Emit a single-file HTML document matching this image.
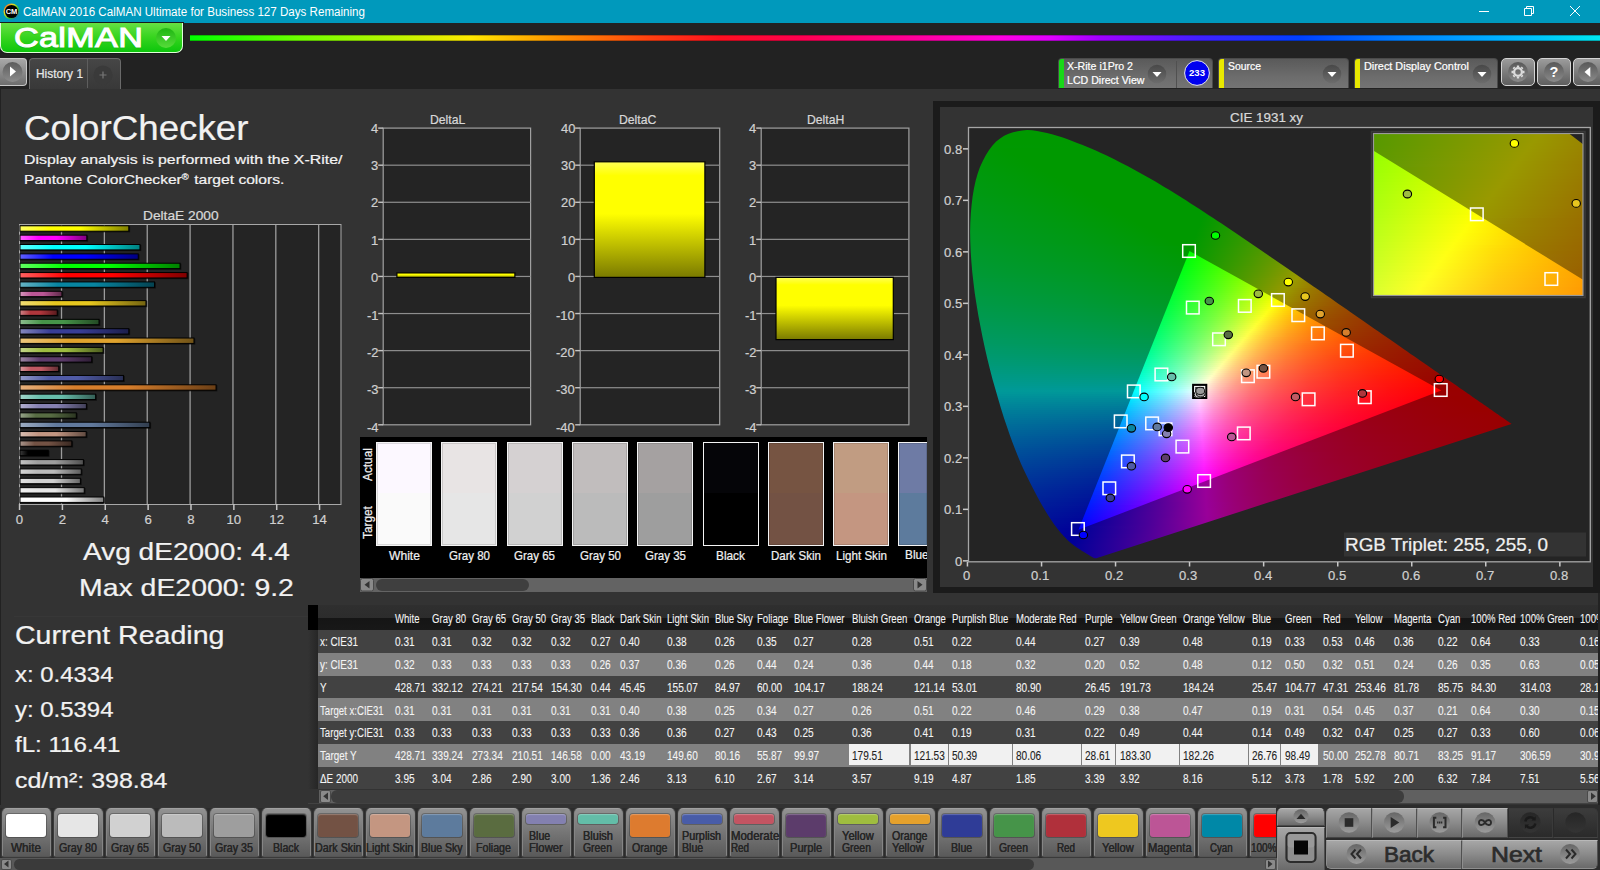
<!DOCTYPE html>
<html lang="en"><head><meta charset="utf-8"><title>CalMAN 2016 ColorChecker</title>
<style>
html,body{margin:0;padding:0;overflow:hidden;}
body{width:1600px;height:870px;overflow:hidden;background:#222;position:relative;font-family:"Liberation Sans",sans-serif;}
.t{-webkit-text-stroke:.22px currentColor;position:absolute;white-space:nowrap;line-height:1;transform-origin:0 0;}
.b{position:absolute;box-sizing:border-box;}
svg{position:absolute;overflow:hidden;}

</style></head>
<body>
<div class="b" style="left:0px;top:0px;width:1600px;height:23px;background:#0099bc;"></div>
<svg style="left:3px;top:3px" width="17" height="17" viewBox="0 0 17 17"><defs><linearGradient id="ic" x1="0" y1="0" x2="1" y2="1"><stop offset="0" stop-color="#ff3030"/><stop offset=".33" stop-color="#e0e020"/><stop offset=".66" stop-color="#20c040"/><stop offset="1" stop-color="#3040ff"/></linearGradient></defs><circle cx="8.5" cy="8.5" r="8" fill="url(#ic)"/><circle cx="8.5" cy="8.5" r="6.6" fill="#000"/><text x="8.5" y="11.3" font-family="Liberation Sans, sans-serif" font-weight="bold" font-size="7.5" fill="#fff" text-anchor="middle">CM</text></svg>
<div class="t" style="left:22.90px;top:6.04px;font-size:12px;color:#ffffff;transform:scaleX(0.9657);-webkit-text-stroke-width:0;">CalMAN 2016 CalMAN Ultimate for Business 127 Days Remaining</div>
<svg style="left:1460px;top:0" width="140" height="23" viewBox="0 0 140 23"><g stroke="#fff" stroke-width="1" fill="none"><path d="M19 11.5h10"/><path d="M64.5 8.5h7v7h-7z M66.5 8.5v-2h7v7h-2"/><path d="M110 6l10 10M120 6l-10 10"/></g></svg>
<div class="b" style="left:0px;top:23px;width:183px;height:30px;background:linear-gradient(#66e044,#36d41e 50%,#0cc60c);border-radius:0 0 7px 7px;border:1px solid #dfffd8;border-top:none;box-shadow:0 0 0 1px #1a1a1a;"></div>
<div class="t" style="left:14.00px;top:23.23px;font-size:28.2px;color:#ffffff;transform:scaleX(1.2097);-webkit-text-stroke:1.05px #fff;letter-spacing:.3px;text-shadow:0 1px 1px rgba(0,90,0,.45);">CalMAN</div>
<svg style="left:155px;top:27px" width="22" height="22" viewBox="0 0 22 22"><defs><linearGradient id="lg1" x1="0" y1="0" x2="0" y2="1"><stop offset="0" stop-color="#1fb512"/><stop offset="1" stop-color="#56dc3a"/></linearGradient></defs><circle cx="11" cy="11" r="10" fill="url(#lg1)"/><path d="M6.5 9h9l-4.5 5z" fill="#fff"/></svg>
<div class="b" style="left:190px;top:35px;width:1410px;height:6px;background:linear-gradient(90deg,#00ff00 0%,#70ff00 7.8%,#c0f400 14.9%,#ffe800 19.9%,#ff9000 26.2%,#ff4010 32.6%,#ff1020 37.6%,#ff0050 43.3%,#ff0090 50.4%,#ff00e0 57.4%,#e000ff 61%,#a000ff 64.5%,#4020ff 71.6%,#0040ff 78.7%,#0080ff 85.8%,#00b0ff 92.9%,#00e8f0 100%);box-shadow:inset 0 1px 0 rgba(0,0,0,.25),inset 0 -1px 0 rgba(0,0,0,.25);"></div>
<div class="b" style="left:0px;top:58px;width:27px;height:28px;background:linear-gradient(#a8a8a8,#6e6e6e);border-radius:0 4px 4px 0;border:1px solid #c8c8c8;border-left:none;"></div>
<svg style="left:2px;top:60px" width="22" height="24" viewBox="0 0 22 24"><defs><linearGradient id="pb" x1="0" y1="0" x2="0" y2="1"><stop offset="0" stop-color="#5c5c5c"/><stop offset="1" stop-color="#8c8c8c"/></linearGradient></defs><circle cx="10.5" cy="12" r="10" fill="url(#pb)"/><path d="M8 6.5v10l6-5z" fill="#fff"/></svg>
<div class="b" style="left:29px;top:58px;width:92px;height:31px;background:linear-gradient(#464646,#383838);border-radius:4px 4px 0 0;border:1px solid #6a6a6a;border-bottom:none;"></div>
<div class="b" style="left:87px;top:59px;width:1px;height:29px;background:#5e5e5e;"></div>
<div class="t" style="left:35.50px;top:67.00px;font-size:13px;color:#e8e8e8;transform:scaleX(0.9164);">History 1</div>
<svg style="left:92px;top:64px" width="22" height="22" viewBox="0 0 22 22"><circle cx="11" cy="11" r="9.500" fill="#3a3a3a"/><path d="M11 7.5v7M7.5 11h7" stroke="#777" stroke-width="1.2" fill="none"/></svg>
<div class="b" style="left:1058px;top:58px;width:155px;height:30px;background:linear-gradient(#5a5a5a,#6c6c6c 60%,#747474);border-radius:4px 4px 0 0;border:1px solid #4a4a4a;border-bottom:none;overflow:hidden;"><div style="position:absolute;left:0;top:0;width:5px;height:30px;background:#18d818"></div></div>
<svg style="left:1147px;top:63.600px" width="20" height="20" viewBox="0 0 20 20"><defs><linearGradient id="dg1157" x1="0" y1="0" x2="0" y2="1"><stop offset="0" stop-color="#484848"/><stop offset="1" stop-color="#6c6c6c"/></linearGradient></defs><circle cx="10" cy="10" r="9.300" fill="url(#dg1157)"/><path d="M5.500 8h9l-4.500 5z" fill="#fff"/></svg>
<div class="b" style="left:1176px;top:61px;width:1px;height:27px;background:#505050;"></div>
<div class="t" style="left:1067.00px;top:60.77px;font-size:11.5px;color:#ffffff;transform:scaleX(0.9220);">X-Rite i1Pro 2</div>
<div class="t" style="left:1067.00px;top:74.77px;font-size:11.5px;color:#ffffff;transform:scaleX(0.9210);">LCD Direct View</div>
<svg style="left:1184px;top:60px" width="26" height="26" viewBox="0 0 26 26"><circle cx="13" cy="13" r="12.400" fill="#0000f0" stroke="#e8e8e8" stroke-width="1"/><text x="13" y="16.400" font-family="Liberation Sans, sans-serif" font-weight="bold" font-size="9.600" fill="#fff" text-anchor="middle">233</text></svg>
<div class="b" style="left:1218px;top:58px;width:131px;height:30px;background:linear-gradient(#5a5a5a,#6c6c6c 60%,#747474);border-radius:4px 4px 0 0;border:1px solid #4a4a4a;border-bottom:none;overflow:hidden;"><div style="position:absolute;left:0;top:0;width:5px;height:30px;background:#e8e800"></div></div>
<svg style="left:1322px;top:63.600px" width="20" height="20" viewBox="0 0 20 20"><defs><linearGradient id="dg1332" x1="0" y1="0" x2="0" y2="1"><stop offset="0" stop-color="#484848"/><stop offset="1" stop-color="#6c6c6c"/></linearGradient></defs><circle cx="10" cy="10" r="9.300" fill="url(#dg1332)"/><path d="M5.500 8h9l-4.500 5z" fill="#fff"/></svg>
<div class="t" style="left:1227.50px;top:60.77px;font-size:11.5px;color:#ffffff;transform:scaleX(0.9056);">Source</div>
<div class="b" style="left:1354px;top:58px;width:144px;height:30px;background:linear-gradient(#5a5a5a,#6c6c6c 60%,#747474);border-radius:4px 4px 0 0;border:1px solid #4a4a4a;border-bottom:none;overflow:hidden;"><div style="position:absolute;left:0;top:0;width:5px;height:30px;background:#e8e800"></div></div>
<svg style="left:1472px;top:63.600px" width="20" height="20" viewBox="0 0 20 20"><defs><linearGradient id="dg1482" x1="0" y1="0" x2="0" y2="1"><stop offset="0" stop-color="#484848"/><stop offset="1" stop-color="#6c6c6c"/></linearGradient></defs><circle cx="10" cy="10" r="9.300" fill="url(#dg1482)"/><path d="M5.500 8h9l-4.500 5z" fill="#fff"/></svg>
<div class="t" style="left:1363.50px;top:60.77px;font-size:11.5px;color:#ffffff;transform:scaleX(0.9442);">Direct Display Control</div>
<div class="b" style="left:1501px;top:58px;width:34.2px;height:28.3px;background:linear-gradient(#9c9c9c,#7c7c7c 50%,#5e5e5e);border-radius:5px;border:1px solid #d4d4d4;"></div>
<div class="b" style="left:1537.2px;top:58px;width:34px;height:28.3px;background:linear-gradient(#9c9c9c,#7c7c7c 50%,#5e5e5e);border-radius:5px;border:1px solid #d4d4d4;"></div>
<div class="b" style="left:1573.2px;top:58px;width:28px;height:28.3px;background:linear-gradient(#9c9c9c,#7c7c7c 50%,#5e5e5e);border-radius:5px 0 0 5px;border:1px solid #d4d4d4;"></div>
<svg style="left:1506px;top:60px" width="24" height="24" viewBox="0 0 24 24"><defs><linearGradient id="tg" x1="0" y1="0" x2="0" y2="1"><stop offset="0" stop-color="#585858"/><stop offset="1" stop-color="#8a8a8a"/></linearGradient></defs><circle cx="12" cy="12" r="10" fill="url(#tg)"/><g fill="none" stroke="#dcdcdc"><circle cx="12" cy="12" r="3.900" stroke-width="2.300"/><path d="M17.00 12.00L18.50 12.00M15.54 15.54L16.60 16.60M12.00 17.00L12.00 18.50M8.46 15.54L7.40 16.60M7.00 12.00L5.50 12.00M8.46 8.46L7.40 7.40M12.00 7.00L12.00 5.50M15.54 8.46L16.60 7.40" stroke-width="2.300"/></g></svg>
<svg style="left:1542px;top:60px" width="24" height="24" viewBox="0 0 24 24"><circle cx="12" cy="12" r="10" fill="url(#tg)"/><text x="12" y="17" font-family="Liberation Sans, sans-serif" font-weight="bold" font-size="14.500" fill="#fff" text-anchor="middle">?</text></svg>
<svg style="left:1575.500px;top:60px" width="24" height="24" viewBox="0 0 24 24"><circle cx="12" cy="12" r="10" fill="url(#tg)"/><path d="M14.300 7v10l-5.800-5z" fill="#fff"/></svg>
<div class="b" style="left:1px;top:89px;width:1599px;height:716px;background:#333333;"></div>
<div class="b" style="left:1598px;top:593px;width:2px;height:212px;background:#222;"></div>
<div class="t" style="left:24.20px;top:110.02px;font-size:35.3px;color:#f2f2f2;transform:scaleX(1.0403);">ColorChecker</div>
<div class="t" style="left:23.50px;top:153.39px;font-size:13.6px;color:#f2f2f2;transform:scaleX(1.1673);">Display analysis is performed with the X-Rite/</div>
<div class="t" style="left:23.50px;top:173.29px;font-size:13.6px;color:#f2f2f2;transform:scaleX(1.1475);">Pantone ColorChecker<span style="font-size:.6em;position:relative;top:-.5em;margin-right:.12em">®</span> target colors.</div>
<div class="t" style="left:142.70px;top:210.33px;font-size:12.6px;color:#d8d8d8;transform:scaleX(1.0901);">DeltaE 2000</div>
<svg style="left:0;top:200px" width="360" height="330" viewBox="0 200 360 330"><defs><linearGradient id="b0"><stop offset="0" stop-color="#ffff61"/><stop offset=".28" stop-color="#ffff00"/><stop offset=".55" stop-color="#ffff00"/><stop offset="1" stop-color="#808000"/></linearGradient><linearGradient id="b1"><stop offset="0" stop-color="#ff61ff"/><stop offset=".28" stop-color="#ff00ff"/><stop offset=".55" stop-color="#ff00ff"/><stop offset="1" stop-color="#800080"/></linearGradient><linearGradient id="b2"><stop offset="0" stop-color="#61ffff"/><stop offset=".28" stop-color="#00ffff"/><stop offset=".55" stop-color="#00ffff"/><stop offset="1" stop-color="#008080"/></linearGradient><linearGradient id="b3"><stop offset="0" stop-color="#6161ff"/><stop offset=".28" stop-color="#0000ff"/><stop offset=".55" stop-color="#0000ff"/><stop offset="1" stop-color="#000080"/></linearGradient><linearGradient id="b4"><stop offset="0" stop-color="#61ff61"/><stop offset=".28" stop-color="#00ff00"/><stop offset=".55" stop-color="#00ff00"/><stop offset="1" stop-color="#008000"/></linearGradient><linearGradient id="b5"><stop offset="0" stop-color="#ff6161"/><stop offset=".28" stop-color="#ff0000"/><stop offset=".55" stop-color="#ff0000"/><stop offset="1" stop-color="#800000"/></linearGradient><linearGradient id="b6"><stop offset="0" stop-color="#66b3c5"/><stop offset=".28" stop-color="#0885a1"/><stop offset=".55" stop-color="#0885a1"/><stop offset="1" stop-color="#044250"/></linearGradient><linearGradient id="b7"><stop offset="0" stop-color="#d596bd"/><stop offset=".28" stop-color="#bb5695"/><stop offset=".55" stop-color="#bb5695"/><stop offset="1" stop-color="#5e2b4a"/></linearGradient><linearGradient id="b8"><stop offset="0" stop-color="#f0dc74"/><stop offset=".28" stop-color="#e7c71f"/><stop offset=".55" stop-color="#e7c71f"/><stop offset="1" stop-color="#746410"/></linearGradient><linearGradient id="b9"><stop offset="0" stop-color="#cd8286"/><stop offset=".28" stop-color="#af363c"/><stop offset=".55" stop-color="#af363c"/><stop offset="1" stop-color="#581b1e"/></linearGradient><linearGradient id="b10"><stop offset="0" stop-color="#8cbd8e"/><stop offset=".28" stop-color="#469449"/><stop offset=".55" stop-color="#469449"/><stop offset="1" stop-color="#234a24"/></linearGradient><linearGradient id="b11"><stop offset="0" stop-color="#8487be"/><stop offset=".28" stop-color="#383d96"/><stop offset=".55" stop-color="#383d96"/><stop offset="1" stop-color="#1c1e4b"/></linearGradient><linearGradient id="b12"><stop offset="0" stop-color="#ecc67d"/><stop offset=".28" stop-color="#e0a32e"/><stop offset=".55" stop-color="#e0a32e"/><stop offset="1" stop-color="#705217"/></linearGradient><linearGradient id="b13"><stop offset="0" stop-color="#c2d589"/><stop offset=".28" stop-color="#9dbc40"/><stop offset=".55" stop-color="#9dbc40"/><stop offset="1" stop-color="#4e5e20"/></linearGradient><linearGradient id="b14"><stop offset="0" stop-color="#9b86a4"/><stop offset=".28" stop-color="#5e3c6c"/><stop offset=".55" stop-color="#5e3c6c"/><stop offset="1" stop-color="#2f1e36"/></linearGradient><linearGradient id="b15"><stop offset="0" stop-color="#d9999e"/><stop offset=".28" stop-color="#c15a63"/><stop offset=".55" stop-color="#c15a63"/><stop offset="1" stop-color="#602d32"/></linearGradient><linearGradient id="b16"><stop offset="0" stop-color="#9299c8"/><stop offset=".28" stop-color="#505ba6"/><stop offset=".55" stop-color="#505ba6"/><stop offset="1" stop-color="#282e53"/></linearGradient><linearGradient id="b17"><stop offset="0" stop-color="#e6af7c"/><stop offset=".28" stop-color="#d67e2c"/><stop offset=".55" stop-color="#d67e2c"/><stop offset="1" stop-color="#6b3f16"/></linearGradient><linearGradient id="b18"><stop offset="0" stop-color="#a1d6ca"/><stop offset=".28" stop-color="#67bdaa"/><stop offset=".55" stop-color="#67bdaa"/><stop offset="1" stop-color="#345e55"/></linearGradient><linearGradient id="b19"><stop offset="0" stop-color="#b3b0cf"/><stop offset=".28" stop-color="#8580b1"/><stop offset=".55" stop-color="#8580b1"/><stop offset="1" stop-color="#424058"/></linearGradient><linearGradient id="b20"><stop offset="0" stop-color="#97a48a"/><stop offset=".28" stop-color="#576c43"/><stop offset=".55" stop-color="#576c43"/><stop offset="1" stop-color="#2c3622"/></linearGradient><linearGradient id="b21"><stop offset="0" stop-color="#9eadc2"/><stop offset=".28" stop-color="#627a9d"/><stop offset=".55" stop-color="#627a9d"/><stop offset="1" stop-color="#313d4e"/></linearGradient><linearGradient id="b22"><stop offset="0" stop-color="#d9beb2"/><stop offset=".28" stop-color="#c29682"/><stop offset=".55" stop-color="#c29682"/><stop offset="1" stop-color="#614b41"/></linearGradient><linearGradient id="b23"><stop offset="0" stop-color="#a8948b"/><stop offset=".28" stop-color="#735244"/><stop offset=".55" stop-color="#735244"/><stop offset="1" stop-color="#3a2922"/></linearGradient><linearGradient id="b24"><stop offset="0" stop-color="#3a3a3a"/><stop offset=".28" stop-color="#000000"/><stop offset=".55" stop-color="#000000"/><stop offset="1" stop-color="#000000"/></linearGradient><linearGradient id="b25"><stop offset="0" stop-color="#c3c3c3"/><stop offset=".28" stop-color="#9e9e9e"/><stop offset=".55" stop-color="#9e9e9e"/><stop offset="1" stop-color="#4f4f4f"/></linearGradient><linearGradient id="b26"><stop offset="0" stop-color="#d5d5d5"/><stop offset=".28" stop-color="#bbbbbb"/><stop offset=".55" stop-color="#bbbbbb"/><stop offset="1" stop-color="#5e5e5e"/></linearGradient><linearGradient id="b27"><stop offset="0" stop-color="#e2e2e2"/><stop offset=".28" stop-color="#d1d1d1"/><stop offset=".55" stop-color="#d1d1d1"/><stop offset="1" stop-color="#686868"/></linearGradient><linearGradient id="b28"><stop offset="0" stop-color="#f0f0f0"/><stop offset=".28" stop-color="#e6e6e6"/><stop offset=".55" stop-color="#e6e6e6"/><stop offset="1" stop-color="#737373"/></linearGradient><linearGradient id="b29"><stop offset="0" stop-color="#ffffff"/><stop offset=".28" stop-color="#ffffff"/><stop offset=".55" stop-color="#ffffff"/><stop offset="1" stop-color="#808080"/></linearGradient></defs><rect x="19.5" y="224.5" width="321.5" height="280" fill="#242424" stroke="#a8a8a8" stroke-width="1"/><rect x="60.86" y="225" width="1.3" height="279" fill="#9c9c9c"/><rect x="103.72" y="225" width="1.3" height="279" fill="#9c9c9c"/><rect x="146.58" y="225" width="1.3" height="279" fill="#9c9c9c"/><rect x="189.44" y="225" width="1.3" height="279" fill="#9c9c9c"/><rect x="232.30" y="225" width="1.3" height="279" fill="#9c9c9c"/><rect x="275.16" y="225" width="1.3" height="279" fill="#9c9c9c"/><rect x="318.02" y="225" width="1.3" height="279" fill="#9c9c9c"/><rect x="18.80" y="504" width="1.5" height="6" fill="#c4c4c4"/><rect x="61.66" y="504" width="1.5" height="6" fill="#c4c4c4"/><rect x="104.52" y="504" width="1.5" height="6" fill="#c4c4c4"/><rect x="147.38" y="504" width="1.5" height="6" fill="#c4c4c4"/><rect x="190.24" y="504" width="1.5" height="6" fill="#c4c4c4"/><rect x="233.10" y="504" width="1.5" height="6" fill="#c4c4c4"/><rect x="275.96" y="504" width="1.5" height="6" fill="#c4c4c4"/><rect x="318.82" y="504" width="1.5" height="6" fill="#c4c4c4"/><rect x="20.10" y="226.20" width="110.02" height="6.2" fill="#000" opacity=".55"/><rect x="20.00" y="225.80" width="108.82" height="5.4" fill="url(#b0)" stroke="#000" stroke-width="1"/><rect x="20.10" y="235.55" width="68.02" height="6.2" fill="#000" opacity=".55"/><rect x="20.00" y="235.15" width="66.82" height="5.4" fill="url(#b1)" stroke="#000" stroke-width="1"/><rect x="20.10" y="244.90" width="121.17" height="6.2" fill="#000" opacity=".55"/><rect x="20.00" y="244.50" width="119.97" height="5.4" fill="url(#b2)" stroke="#000" stroke-width="1"/><rect x="20.10" y="254.26" width="119.45" height="6.2" fill="#000" opacity=".55"/><rect x="20.00" y="253.86" width="118.25" height="5.4" fill="url(#b3)" stroke="#000" stroke-width="1"/><rect x="20.10" y="263.61" width="161.24" height="6.2" fill="#000" opacity=".55"/><rect x="20.00" y="263.21" width="160.04" height="5.4" fill="url(#b4)" stroke="#000" stroke-width="1"/><rect x="20.10" y="272.96" width="168.31" height="6.2" fill="#000" opacity=".55"/><rect x="20.00" y="272.56" width="167.11" height="5.4" fill="url(#b5)" stroke="#000" stroke-width="1"/><rect x="20.10" y="282.31" width="135.74" height="6.2" fill="#000" opacity=".55"/><rect x="20.00" y="281.91" width="134.54" height="5.4" fill="url(#b6)" stroke="#000" stroke-width="1"/><rect x="20.10" y="291.66" width="43.16" height="6.2" fill="#000" opacity=".55"/><rect x="20.00" y="291.26" width="41.96" height="5.4" fill="url(#b7)" stroke="#000" stroke-width="1"/><rect x="20.10" y="301.01" width="127.17" height="6.2" fill="#000" opacity=".55"/><rect x="20.00" y="300.61" width="125.97" height="5.4" fill="url(#b8)" stroke="#000" stroke-width="1"/><rect x="20.10" y="310.37" width="38.45" height="6.2" fill="#000" opacity=".55"/><rect x="20.00" y="309.97" width="37.25" height="5.4" fill="url(#b9)" stroke="#000" stroke-width="1"/><rect x="20.10" y="319.72" width="80.23" height="6.2" fill="#000" opacity=".55"/><rect x="20.00" y="319.32" width="79.03" height="5.4" fill="url(#b10)" stroke="#000" stroke-width="1"/><rect x="20.10" y="329.07" width="110.02" height="6.2" fill="#000" opacity=".55"/><rect x="20.00" y="328.67" width="108.82" height="5.4" fill="url(#b11)" stroke="#000" stroke-width="1"/><rect x="20.10" y="338.42" width="175.17" height="6.2" fill="#000" opacity=".55"/><rect x="20.00" y="338.02" width="173.97" height="5.4" fill="url(#b12)" stroke="#000" stroke-width="1"/><rect x="20.10" y="347.77" width="84.31" height="6.2" fill="#000" opacity=".55"/><rect x="20.00" y="347.37" width="83.11" height="5.4" fill="url(#b13)" stroke="#000" stroke-width="1"/><rect x="20.10" y="357.12" width="72.95" height="6.2" fill="#000" opacity=".55"/><rect x="20.00" y="356.72" width="71.75" height="5.4" fill="url(#b14)" stroke="#000" stroke-width="1"/><rect x="20.10" y="366.48" width="39.95" height="6.2" fill="#000" opacity=".55"/><rect x="20.00" y="366.08" width="38.75" height="5.4" fill="url(#b15)" stroke="#000" stroke-width="1"/><rect x="20.10" y="375.83" width="104.66" height="6.2" fill="#000" opacity=".55"/><rect x="20.00" y="375.43" width="103.46" height="5.4" fill="url(#b16)" stroke="#000" stroke-width="1"/><rect x="20.10" y="385.18" width="197.24" height="6.2" fill="#000" opacity=".55"/><rect x="20.00" y="384.78" width="196.04" height="5.4" fill="url(#b17)" stroke="#000" stroke-width="1"/><rect x="20.10" y="394.53" width="76.81" height="6.2" fill="#000" opacity=".55"/><rect x="20.00" y="394.13" width="75.61" height="5.4" fill="url(#b18)" stroke="#000" stroke-width="1"/><rect x="20.10" y="403.88" width="67.59" height="6.2" fill="#000" opacity=".55"/><rect x="20.00" y="403.48" width="66.39" height="5.4" fill="url(#b19)" stroke="#000" stroke-width="1"/><rect x="20.10" y="413.23" width="57.52" height="6.2" fill="#000" opacity=".55"/><rect x="20.00" y="412.83" width="56.32" height="5.4" fill="url(#b20)" stroke="#000" stroke-width="1"/><rect x="20.10" y="422.59" width="131.02" height="6.2" fill="#000" opacity=".55"/><rect x="20.00" y="422.19" width="129.82" height="5.4" fill="url(#b21)" stroke="#000" stroke-width="1"/><rect x="20.10" y="431.94" width="67.38" height="6.2" fill="#000" opacity=".55"/><rect x="20.00" y="431.54" width="66.18" height="5.4" fill="url(#b22)" stroke="#000" stroke-width="1"/><rect x="20.10" y="441.29" width="53.02" height="6.2" fill="#000" opacity=".55"/><rect x="20.00" y="440.89" width="51.82" height="5.4" fill="url(#b23)" stroke="#000" stroke-width="1"/><rect x="20.10" y="450.64" width="29.44" height="6.2" fill="#000" opacity=".55"/><rect x="20.00" y="450.24" width="28.24" height="5.4" fill="url(#b24)" stroke="#000" stroke-width="1"/><rect x="20.10" y="459.99" width="64.59" height="6.2" fill="#000" opacity=".55"/><rect x="20.00" y="459.59" width="63.39" height="5.4" fill="url(#b25)" stroke="#000" stroke-width="1"/><rect x="20.10" y="469.34" width="62.45" height="6.2" fill="#000" opacity=".55"/><rect x="20.00" y="468.94" width="61.25" height="5.4" fill="url(#b26)" stroke="#000" stroke-width="1"/><rect x="20.10" y="478.70" width="61.59" height="6.2" fill="#000" opacity=".55"/><rect x="20.00" y="478.30" width="60.39" height="5.4" fill="url(#b27)" stroke="#000" stroke-width="1"/><rect x="20.10" y="488.05" width="65.45" height="6.2" fill="#000" opacity=".55"/><rect x="20.00" y="487.65" width="64.25" height="5.4" fill="url(#b28)" stroke="#000" stroke-width="1"/><rect x="20.10" y="497.40" width="84.95" height="6.2" fill="#000" opacity=".55"/><rect x="20.00" y="497.00" width="83.75" height="5.4" fill="url(#b29)" stroke="#000" stroke-width="1"/></svg>
<div class="t" style="left:15.83px;top:513.43px;font-size:13.2px;color:#d0d0d0;">0</div>
<div class="t" style="left:58.69px;top:513.43px;font-size:13.2px;color:#d0d0d0;">2</div>
<div class="t" style="left:101.55px;top:513.43px;font-size:13.2px;color:#d0d0d0;">4</div>
<div class="t" style="left:144.41px;top:513.43px;font-size:13.2px;color:#d0d0d0;">6</div>
<div class="t" style="left:187.27px;top:513.43px;font-size:13.2px;color:#d0d0d0;">8</div>
<div class="t" style="left:226.46px;top:513.43px;font-size:13.2px;color:#d0d0d0;">10</div>
<div class="t" style="left:269.32px;top:513.43px;font-size:13.2px;color:#d0d0d0;">12</div>
<div class="t" style="left:312.18px;top:513.43px;font-size:13.2px;color:#d0d0d0;">14</div>
<div class="t" style="left:83.20px;top:539.51px;font-size:24.2px;color:#f2f2f2;transform:scaleX(1.1596);">Avg dE2000: 4.4</div>
<div class="t" style="left:79.20px;top:575.51px;font-size:24.2px;color:#f2f2f2;transform:scaleX(1.1751);">Max dE2000: 9.2</div>
<div class="b" style="left:14px;top:616px;width:294px;height:1px;background:#373737;"></div>
<div class="t" style="left:14.50px;top:622.67px;font-size:25.2px;color:#f2f2f2;transform:scaleX(1.1330);">Current Reading</div>
<div class="t" style="left:14.50px;top:663.75px;font-size:21.2px;color:#f2f2f2;transform:scaleX(1.1293);">x: 0.4334</div>
<div class="t" style="left:14.50px;top:699.35px;font-size:21.2px;color:#f2f2f2;transform:scaleX(1.1293);">y: 0.5394</div>
<div class="t" style="left:14.50px;top:734.35px;font-size:21.2px;color:#f2f2f2;transform:scaleX(1.1377);">fL: 116.41</div>
<div class="t" style="left:14.50px;top:770.35px;font-size:21.2px;color:#f2f2f2;transform:scaleX(1.1765);">cd/m²: 398.84</div>
<svg style="left:350px;top:100px" width="580" height="335" viewBox="350 100 580 335"><defs><linearGradient id="dl" x1="0" y1="0" x2="0" y2="1"><stop offset="0" stop-color="#ffff55"/><stop offset=".12" stop-color="#ffff00"/><stop offset=".45" stop-color="#ffff00"/><stop offset="1" stop-color="#7a7a00"/></linearGradient></defs><rect x="383.2" y="128.1" width="147.4" height="296.7" fill="#242424" stroke="#a0a0a0" stroke-width="1.2"/><rect x="383.2" y="164.59" width="147.4" height="1.2" fill="#8e8e8e"/><rect x="383.2" y="201.68" width="147.4" height="1.2" fill="#8e8e8e"/><rect x="383.2" y="238.76" width="147.4" height="1.2" fill="#8e8e8e"/><rect x="383.2" y="275.85" width="147.4" height="1.2" fill="#8e8e8e"/><rect x="383.2" y="312.94" width="147.4" height="1.2" fill="#8e8e8e"/><rect x="383.2" y="350.02" width="147.4" height="1.2" fill="#8e8e8e"/><rect x="383.2" y="387.11" width="147.4" height="1.2" fill="#8e8e8e"/><rect x="378.2" y="127.40" width="5" height="1.4" fill="#c4c4c4"/><rect x="378.2" y="164.49" width="5" height="1.4" fill="#c4c4c4"/><rect x="378.2" y="201.58" width="5" height="1.4" fill="#c4c4c4"/><rect x="378.2" y="238.66" width="5" height="1.4" fill="#c4c4c4"/><rect x="378.2" y="275.75" width="5" height="1.4" fill="#c4c4c4"/><rect x="378.2" y="312.84" width="5" height="1.4" fill="#c4c4c4"/><rect x="378.2" y="349.93" width="5" height="1.4" fill="#c4c4c4"/><rect x="378.2" y="387.01" width="5" height="1.4" fill="#c4c4c4"/><rect x="378.2" y="424.10" width="5" height="1.4" fill="#c4c4c4"/><rect x="396.9" y="272.9" width="118.0" height="4.5" fill="url(#dl)" stroke="#000" stroke-width="1.2"/></svg>
<div class="t" style="left:430.03px;top:113.93px;font-size:12.6px;color:#d8d8d8;transform:scaleX(0.9700);">DeltaL</div>
<div class="t" style="left:370.81px;top:121.73px;font-size:13.2px;color:#d0d0d0;transform:scaleX(0.9800);">4</div>
<div class="t" style="left:370.81px;top:159.08px;font-size:13.2px;color:#d0d0d0;transform:scaleX(0.9800);">3</div>
<div class="t" style="left:370.81px;top:196.44px;font-size:13.2px;color:#d0d0d0;transform:scaleX(0.9800);">2</div>
<div class="t" style="left:370.81px;top:233.80px;font-size:13.2px;color:#d0d0d0;transform:scaleX(0.9800);">1</div>
<div class="t" style="left:370.81px;top:271.16px;font-size:13.2px;color:#d0d0d0;transform:scaleX(0.9800);">0</div>
<div class="t" style="left:366.50px;top:308.51px;font-size:13.2px;color:#d0d0d0;transform:scaleX(0.9800);">-1</div>
<div class="t" style="left:366.50px;top:345.87px;font-size:13.2px;color:#d0d0d0;transform:scaleX(0.9800);">-2</div>
<div class="t" style="left:366.50px;top:383.23px;font-size:13.2px;color:#d0d0d0;transform:scaleX(0.9800);">-3</div>
<div class="t" style="left:366.50px;top:420.59px;font-size:13.2px;color:#d0d0d0;transform:scaleX(0.9800);">-4</div>
<svg style="left:350px;top:100px" width="580" height="335" viewBox="350 100 580 335"><defs><linearGradient id="dc" x1="0" y1="0" x2="0" y2="1"><stop offset="0" stop-color="#ffff55"/><stop offset=".12" stop-color="#ffff00"/><stop offset=".45" stop-color="#ffff00"/><stop offset="1" stop-color="#7a7a00"/></linearGradient></defs><rect x="580.2" y="128.1" width="139.5" height="296.7" fill="#242424" stroke="#a0a0a0" stroke-width="1.2"/><rect x="580.2" y="164.59" width="139.5" height="1.2" fill="#8e8e8e"/><rect x="580.2" y="201.68" width="139.5" height="1.2" fill="#8e8e8e"/><rect x="580.2" y="238.76" width="139.5" height="1.2" fill="#8e8e8e"/><rect x="580.2" y="275.85" width="139.5" height="1.2" fill="#8e8e8e"/><rect x="580.2" y="312.94" width="139.5" height="1.2" fill="#8e8e8e"/><rect x="580.2" y="350.02" width="139.5" height="1.2" fill="#8e8e8e"/><rect x="580.2" y="387.11" width="139.5" height="1.2" fill="#8e8e8e"/><rect x="575.2" y="127.40" width="5" height="1.4" fill="#c4c4c4"/><rect x="575.2" y="164.49" width="5" height="1.4" fill="#c4c4c4"/><rect x="575.2" y="201.58" width="5" height="1.4" fill="#c4c4c4"/><rect x="575.2" y="238.66" width="5" height="1.4" fill="#c4c4c4"/><rect x="575.2" y="275.75" width="5" height="1.4" fill="#c4c4c4"/><rect x="575.2" y="312.84" width="5" height="1.4" fill="#c4c4c4"/><rect x="575.2" y="349.93" width="5" height="1.4" fill="#c4c4c4"/><rect x="575.2" y="387.01" width="5" height="1.4" fill="#c4c4c4"/><rect x="575.2" y="424.10" width="5" height="1.4" fill="#c4c4c4"/><rect x="594.3" y="161.8" width="110.6" height="115.6" fill="url(#dc)" stroke="#000" stroke-width="1.2"/></svg>
<div class="t" style="left:618.62px;top:113.93px;font-size:12.6px;color:#d8d8d8;transform:scaleX(0.9700);">DeltaC</div>
<div class="t" style="left:560.61px;top:121.73px;font-size:13.2px;color:#d0d0d0;transform:scaleX(0.9800);">40</div>
<div class="t" style="left:560.61px;top:159.08px;font-size:13.2px;color:#d0d0d0;transform:scaleX(0.9800);">30</div>
<div class="t" style="left:560.61px;top:196.44px;font-size:13.2px;color:#d0d0d0;transform:scaleX(0.9800);">20</div>
<div class="t" style="left:560.61px;top:233.80px;font-size:13.2px;color:#d0d0d0;transform:scaleX(0.9800);">10</div>
<div class="t" style="left:567.81px;top:271.16px;font-size:13.2px;color:#d0d0d0;transform:scaleX(0.9800);">0</div>
<div class="t" style="left:556.30px;top:308.51px;font-size:13.2px;color:#d0d0d0;transform:scaleX(0.9800);">-10</div>
<div class="t" style="left:556.30px;top:345.87px;font-size:13.2px;color:#d0d0d0;transform:scaleX(0.9800);">-20</div>
<div class="t" style="left:556.30px;top:383.23px;font-size:13.2px;color:#d0d0d0;transform:scaleX(0.9800);">-30</div>
<div class="t" style="left:556.30px;top:420.59px;font-size:13.2px;color:#d0d0d0;transform:scaleX(0.9800);">-40</div>
<svg style="left:350px;top:100px" width="580" height="335" viewBox="350 100 580 335"><defs><linearGradient id="dh" x1="0" y1="0" x2="0" y2="1"><stop offset="0" stop-color="#ffff55"/><stop offset=".12" stop-color="#ffff00"/><stop offset=".45" stop-color="#ffff00"/><stop offset="1" stop-color="#7a7a00"/></linearGradient></defs><rect x="761.2" y="128.1" width="147.7" height="296.7" fill="#242424" stroke="#a0a0a0" stroke-width="1.2"/><rect x="761.2" y="164.59" width="147.7" height="1.2" fill="#8e8e8e"/><rect x="761.2" y="201.68" width="147.7" height="1.2" fill="#8e8e8e"/><rect x="761.2" y="238.76" width="147.7" height="1.2" fill="#8e8e8e"/><rect x="761.2" y="275.85" width="147.7" height="1.2" fill="#8e8e8e"/><rect x="761.2" y="312.94" width="147.7" height="1.2" fill="#8e8e8e"/><rect x="761.2" y="350.02" width="147.7" height="1.2" fill="#8e8e8e"/><rect x="761.2" y="387.11" width="147.7" height="1.2" fill="#8e8e8e"/><rect x="756.2" y="127.40" width="5" height="1.4" fill="#c4c4c4"/><rect x="756.2" y="164.49" width="5" height="1.4" fill="#c4c4c4"/><rect x="756.2" y="201.58" width="5" height="1.4" fill="#c4c4c4"/><rect x="756.2" y="238.66" width="5" height="1.4" fill="#c4c4c4"/><rect x="756.2" y="275.75" width="5" height="1.4" fill="#c4c4c4"/><rect x="756.2" y="312.84" width="5" height="1.4" fill="#c4c4c4"/><rect x="756.2" y="349.93" width="5" height="1.4" fill="#c4c4c4"/><rect x="756.2" y="387.01" width="5" height="1.4" fill="#c4c4c4"/><rect x="756.2" y="424.10" width="5" height="1.4" fill="#c4c4c4"/><rect x="776.0" y="277.4" width="117.3" height="62.2" fill="url(#dh)" stroke="#000" stroke-width="1.2"/></svg>
<div class="t" style="left:807.32px;top:113.93px;font-size:12.6px;color:#d8d8d8;transform:scaleX(0.9700);">DeltaH</div>
<div class="t" style="left:748.81px;top:121.73px;font-size:13.2px;color:#d0d0d0;transform:scaleX(0.9800);">4</div>
<div class="t" style="left:748.81px;top:159.08px;font-size:13.2px;color:#d0d0d0;transform:scaleX(0.9800);">3</div>
<div class="t" style="left:748.81px;top:196.44px;font-size:13.2px;color:#d0d0d0;transform:scaleX(0.9800);">2</div>
<div class="t" style="left:748.81px;top:233.80px;font-size:13.2px;color:#d0d0d0;transform:scaleX(0.9800);">1</div>
<div class="t" style="left:748.81px;top:271.16px;font-size:13.2px;color:#d0d0d0;transform:scaleX(0.9800);">0</div>
<div class="t" style="left:744.50px;top:308.51px;font-size:13.2px;color:#d0d0d0;transform:scaleX(0.9800);">-1</div>
<div class="t" style="left:744.50px;top:345.87px;font-size:13.2px;color:#d0d0d0;transform:scaleX(0.9800);">-2</div>
<div class="t" style="left:744.50px;top:383.23px;font-size:13.2px;color:#d0d0d0;transform:scaleX(0.9800);">-3</div>
<div class="t" style="left:744.50px;top:420.59px;font-size:13.2px;color:#d0d0d0;transform:scaleX(0.9800);">-4</div>
<div class="b" style="left:360px;top:437px;width:567px;height:155px;background:#000;overflow:hidden;"></div>
<div class="b" style="left:376.0px;top:442px;width:56.2px;height:103.8px;background:linear-gradient(#fcf8ff 0,#fcf8ff 49.2%,#fafafa 49.2%,#fafafa 100%);border:1px solid #f4f4f4;box-shadow:inset 0 0 0 1px rgba(0,0,0,.13);"></div>
<div class="b" style="left:441.3px;top:442px;width:56.2px;height:103.8px;background:linear-gradient(#e8e4e4 0,#e8e4e4 49.2%,#e6e6e6 49.2%,#e6e6e6 100%);border:1px solid #f4f4f4;box-shadow:inset 0 0 0 1px rgba(0,0,0,.13);"></div>
<div class="b" style="left:506.6px;top:442px;width:56.2px;height:103.8px;background:linear-gradient(#d5d1d2 0,#d5d1d2 49.2%,#d1d1d1 49.2%,#d1d1d1 100%);border:1px solid #f4f4f4;box-shadow:inset 0 0 0 1px rgba(0,0,0,.13);"></div>
<div class="b" style="left:571.9px;top:442px;width:56.2px;height:103.8px;background:linear-gradient(#c1bdbd 0,#c1bdbd 49.2%,#bbbbbb 49.2%,#bbbbbb 100%);border:1px solid #f4f4f4;box-shadow:inset 0 0 0 1px rgba(0,0,0,.13);"></div>
<div class="b" style="left:637.2px;top:442px;width:56.2px;height:103.8px;background:linear-gradient(#a5a1a1 0,#a5a1a1 49.2%,#9e9e9e 49.2%,#9e9e9e 100%);border:1px solid #f4f4f4;box-shadow:inset 0 0 0 1px rgba(0,0,0,.13);"></div>
<div class="b" style="left:702.5px;top:442px;width:56.2px;height:103.8px;background:linear-gradient(#050508 0,#050508 49.2%,#000000 49.2%,#000000 100%);border:1px solid #f4f4f4;box-shadow:inset 0 0 0 1px rgba(0,0,0,.13);"></div>
<div class="b" style="left:767.8px;top:442px;width:56.2px;height:103.8px;background:linear-gradient(#765442 0,#765442 49.2%,#735244 49.2%,#735244 100%);border:1px solid #f4f4f4;box-shadow:inset 0 0 0 1px rgba(0,0,0,.13);"></div>
<div class="b" style="left:833.1px;top:442px;width:56.2px;height:103.8px;background:linear-gradient(#c19c82 0,#c19c82 49.2%,#c49681 49.2%,#c49681 100%);border:1px solid #f4f4f4;box-shadow:inset 0 0 0 1px rgba(0,0,0,.13);"></div>
<div class="b" style="left:898.4px;top:442px;width:28.6px;height:103.8px;background:linear-gradient(#6e7ba5 0,#6e7ba5 49.2%,#5d7b9d 49.2%,#5d7b9d 100%);border:1px solid #f4f4f4;border-right:none;box-shadow:inset 0 0 0 1px rgba(0,0,0,.13);"></div>
<div class="t" style="left:388.60px;top:549.57px;font-size:12.2px;color:#f0f0f0;transform:scaleX(0.9941);">White</div>
<div class="t" style="left:448.90px;top:549.57px;font-size:12.2px;color:#f0f0f0;transform:scaleX(0.9448);">Gray 80</div>
<div class="t" style="left:514.20px;top:549.57px;font-size:12.2px;color:#f0f0f0;transform:scaleX(0.9448);">Gray 65</div>
<div class="t" style="left:579.50px;top:549.57px;font-size:12.2px;color:#f0f0f0;transform:scaleX(0.9448);">Gray 50</div>
<div class="t" style="left:644.80px;top:549.57px;font-size:12.2px;color:#f0f0f0;transform:scaleX(0.9448);">Gray 35</div>
<div class="t" style="left:716.10px;top:549.57px;font-size:12.2px;color:#f0f0f0;transform:scaleX(0.9721);">Black</div>
<div class="t" style="left:770.90px;top:549.57px;font-size:12.2px;color:#f0f0f0;transform:scaleX(0.9455);">Dark Skin</div>
<div class="t" style="left:835.70px;top:549.57px;font-size:12.2px;color:#f0f0f0;transform:scaleX(0.9519);">Light Skin</div>
<div class="b" style="left:900px;top:540px;width:27px;height:30px;overflow:hidden"><div class="t" style="left:4.5px;top:9.07px;font-size:12.2px;color:#f0f0f0;transform:scaleX(.97)">Blue Sky</div></div>
<div class="t" style="left:361.5px;top:481px;font-size:12.2px;color:#f0f0f0;transform-origin:0 0;transform:rotate(-90deg) scaleX(.97)">Actual</div>
<div class="t" style="left:361.5px;top:538.5px;font-size:12.2px;color:#f0f0f0;transform-origin:0 0;transform:rotate(-90deg) scaleX(.97)">Target</div>
<div class="b" style="left:360px;top:578px;width:567px;height:13.5px;background:#636363;"></div>
<div class="b" style="left:376px;top:578.5px;width:152.5px;height:12.5px;background:#3f3f3f;border-radius:6px;"></div>
<svg style="left:360px;top:578px" width="567" height="14" viewBox="0 0 567 14"><rect x="0.5" y="0.5" width="13" height="12.5" rx="2" fill="#8a8a8a" stroke="#4a4a4a"/><path d="M9.5 3v7.5l-5-3.75z" fill="#333"/><rect x="553.5" y="0.5" width="13" height="12.5" rx="2" fill="#8a8a8a" stroke="#4a4a4a"/><path d="M557.5 3v7.5l5-3.75z" fill="#333"/></svg>
<div class="b" style="left:933px;top:101px;width:667px;height:492px;background:#1b1b1b;"></div>
<div class="b" style="left:940px;top:107px;width:653px;height:479.5px;background:#333;"></div>
<div class="t" style="left:1229.50px;top:111.73px;font-size:12.6px;color:#d8d8d8;transform:scaleX(1.0636);">CIE 1931 xy</div>
<svg style="left:940px;top:108px" width="653" height="479" viewBox="940 108 653 479"><defs><linearGradient id="o0"><stop offset="0" stop-color="#009900"/><stop offset="1" stop-color="#009900"/></linearGradient><linearGradient id="o1"><stop offset="0" stop-color="#009900"/><stop offset="1" stop-color="#009900"/></linearGradient><linearGradient id="o2"><stop offset="0" stop-color="#009900"/><stop offset="1" stop-color="#009900"/></linearGradient><linearGradient id="o3"><stop offset="0" stop-color="#009900"/><stop offset="1" stop-color="#009900"/></linearGradient><linearGradient id="o4"><stop offset="0" stop-color="#009900"/><stop offset="1" stop-color="#009900"/></linearGradient><linearGradient id="o5"><stop offset="0" stop-color="#009900"/><stop offset="1" stop-color="#009900"/></linearGradient><linearGradient id="o6"><stop offset="0" stop-color="#009900"/><stop offset="1" stop-color="#009900"/></linearGradient><linearGradient id="o7"><stop offset="0" stop-color="#009901"/><stop offset="1" stop-color="#009900"/></linearGradient><linearGradient id="o8"><stop offset="0" stop-color="#009902"/><stop offset="1" stop-color="#009900"/></linearGradient><linearGradient id="o9"><stop offset="0" stop-color="#009903"/><stop offset=".167" stop-color="#009900"/><stop offset="1" stop-color="#009900"/></linearGradient><linearGradient id="o10"><stop offset="0" stop-color="#009904"/><stop offset=".202" stop-color="#009900"/><stop offset="1" stop-color="#009900"/></linearGradient><linearGradient id="o11"><stop offset="0" stop-color="#009905"/><stop offset=".233" stop-color="#009900"/><stop offset="1" stop-color="#009900"/></linearGradient><linearGradient id="o12"><stop offset="0" stop-color="#009905"/><stop offset=".256" stop-color="#009900"/><stop offset="1" stop-color="#009900"/></linearGradient><linearGradient id="o13"><stop offset="0" stop-color="#009906"/><stop offset=".285" stop-color="#009900"/><stop offset="1" stop-color="#009900"/></linearGradient><linearGradient id="o14"><stop offset="0" stop-color="#009907"/><stop offset=".304" stop-color="#009900"/><stop offset="1" stop-color="#009900"/></linearGradient><linearGradient id="o15"><stop offset="0" stop-color="#009908"/><stop offset=".329" stop-color="#009900"/><stop offset="1" stop-color="#009900"/></linearGradient><linearGradient id="o16"><stop offset="0" stop-color="#009908"/><stop offset=".352" stop-color="#009900"/><stop offset="1" stop-color="#009900"/></linearGradient><linearGradient id="o17"><stop offset="0" stop-color="#009909"/><stop offset=".367" stop-color="#009900"/><stop offset="1" stop-color="#009900"/></linearGradient><linearGradient id="o18"><stop offset="0" stop-color="#00990a"/><stop offset=".387" stop-color="#009900"/><stop offset="1" stop-color="#009900"/></linearGradient><linearGradient id="o19"><stop offset="0" stop-color="#00990b"/><stop offset=".403" stop-color="#009900"/><stop offset="1" stop-color="#009900"/></linearGradient><linearGradient id="o20"><stop offset="0" stop-color="#00990b"/><stop offset=".417" stop-color="#009900"/><stop offset="1" stop-color="#009900"/></linearGradient><linearGradient id="o21"><stop offset="0" stop-color="#00990c"/><stop offset=".435" stop-color="#009900"/><stop offset="1" stop-color="#009900"/></linearGradient><linearGradient id="o22"><stop offset="0" stop-color="#00990d"/><stop offset=".448" stop-color="#009900"/><stop offset="1" stop-color="#009900"/></linearGradient><linearGradient id="o23"><stop offset="0" stop-color="#00990e"/><stop offset=".46" stop-color="#009900"/><stop offset="1" stop-color="#009900"/></linearGradient><linearGradient id="o24"><stop offset="0" stop-color="#00990e"/><stop offset=".478" stop-color="#009900"/><stop offset="1" stop-color="#009900"/></linearGradient><linearGradient id="o25"><stop offset="0" stop-color="#00990f"/><stop offset=".486" stop-color="#009900"/><stop offset="1" stop-color="#009900"/></linearGradient><linearGradient id="o26"><stop offset="0" stop-color="#009910"/><stop offset=".5" stop-color="#009900"/><stop offset="1" stop-color="#009900"/></linearGradient><linearGradient id="o27"><stop offset="0" stop-color="#009911"/><stop offset=".508" stop-color="#009900"/><stop offset="1" stop-color="#009900"/></linearGradient><linearGradient id="o28"><stop offset="0" stop-color="#009911"/><stop offset=".518" stop-color="#009900"/><stop offset="1" stop-color="#009900"/></linearGradient><linearGradient id="o29"><stop offset="0" stop-color="#009912"/><stop offset=".533" stop-color="#009900"/><stop offset="1" stop-color="#009900"/></linearGradient><linearGradient id="o30"><stop offset="0" stop-color="#009913"/><stop offset=".54" stop-color="#009900"/><stop offset="1" stop-color="#009900"/></linearGradient><linearGradient id="o31"><stop offset="0" stop-color="#009913"/><stop offset=".551" stop-color="#009900"/><stop offset="1" stop-color="#009900"/></linearGradient><linearGradient id="o32"><stop offset="0" stop-color="#009914"/><stop offset=".56" stop-color="#009900"/><stop offset="1" stop-color="#009900"/></linearGradient><linearGradient id="o33"><stop offset="0" stop-color="#009915"/><stop offset=".568" stop-color="#009900"/><stop offset="1" stop-color="#009900"/></linearGradient><linearGradient id="o34"><stop offset="0" stop-color="#009916"/><stop offset=".579" stop-color="#009900"/><stop offset="1" stop-color="#009900"/></linearGradient><linearGradient id="o35"><stop offset="0" stop-color="#009916"/><stop offset=".586" stop-color="#009900"/><stop offset="1" stop-color="#009900"/></linearGradient><linearGradient id="o36"><stop offset="0" stop-color="#009917"/><stop offset=".596" stop-color="#009900"/><stop offset="1" stop-color="#009900"/></linearGradient><linearGradient id="o37"><stop offset="0" stop-color="#009918"/><stop offset=".602" stop-color="#009900"/><stop offset="1" stop-color="#009900"/></linearGradient><linearGradient id="o38"><stop offset="0" stop-color="#009919"/><stop offset=".611" stop-color="#009900"/><stop offset="1" stop-color="#009900"/></linearGradient><linearGradient id="o39"><stop offset="0" stop-color="#009919"/><stop offset=".621" stop-color="#009900"/><stop offset="1" stop-color="#009900"/></linearGradient><linearGradient id="o40"><stop offset="0" stop-color="#00991a"/><stop offset=".627" stop-color="#009900"/><stop offset="1" stop-color="#009900"/></linearGradient><linearGradient id="o41"><stop offset="0" stop-color="#00991b"/><stop offset=".633" stop-color="#009900"/><stop offset=".979" stop-color="#009900"/><stop offset="1" stop-color="#049900"/></linearGradient><linearGradient id="o42"><stop offset="0" stop-color="#00991c"/><stop offset=".638" stop-color="#009900"/><stop offset=".967" stop-color="#009900"/><stop offset="1" stop-color="#089900"/></linearGradient><linearGradient id="o43"><stop offset="0" stop-color="#00991d"/><stop offset=".646" stop-color="#009900"/><stop offset=".951" stop-color="#009900"/><stop offset="1" stop-color="#0b9900"/></linearGradient><linearGradient id="o44"><stop offset="0" stop-color="#00991d"/><stop offset=".655" stop-color="#009900"/><stop offset=".936" stop-color="#009900"/><stop offset="1" stop-color="#0f9900"/></linearGradient><linearGradient id="o45"><stop offset="0" stop-color="#00991e"/><stop offset=".369" stop-color="#00990f"/><stop offset=".659" stop-color="#009900"/><stop offset=".921" stop-color="#009900"/><stop offset="1" stop-color="#139900"/></linearGradient><linearGradient id="o46"><stop offset="0" stop-color="#00991f"/><stop offset=".373" stop-color="#009910"/><stop offset=".667" stop-color="#009900"/><stop offset=".906" stop-color="#009900"/><stop offset="1" stop-color="#169900"/></linearGradient><linearGradient id="o47"><stop offset="0" stop-color="#009920"/><stop offset=".376" stop-color="#009910"/><stop offset=".671" stop-color="#009900"/><stop offset=".895" stop-color="#009900"/><stop offset="1" stop-color="#1a9900"/></linearGradient><linearGradient id="o48"><stop offset="0" stop-color="#009920"/><stop offset=".383" stop-color="#009910"/><stop offset=".678" stop-color="#009900"/><stop offset=".881" stop-color="#009900"/><stop offset="1" stop-color="#1e9900"/></linearGradient><linearGradient id="o49"><stop offset="0" stop-color="#009921"/><stop offset=".383" stop-color="#009911"/><stop offset=".686" stop-color="#009900"/><stop offset=".867" stop-color="#009900"/><stop offset="1" stop-color="#229900"/></linearGradient><linearGradient id="o50"><stop offset="0" stop-color="#009922"/><stop offset=".386" stop-color="#009912"/><stop offset=".689" stop-color="#009900"/><stop offset=".854" stop-color="#009900"/><stop offset="1" stop-color="#269900"/></linearGradient><linearGradient id="o51"><stop offset="0" stop-color="#009923"/><stop offset=".393" stop-color="#009912"/><stop offset=".696" stop-color="#009900"/><stop offset=".841" stop-color="#009900"/><stop offset="1" stop-color="#2a9900"/></linearGradient><linearGradient id="o52"><stop offset="0" stop-color="#009924"/><stop offset=".392" stop-color="#009913"/><stop offset=".703" stop-color="#009900"/><stop offset=".832" stop-color="#009900"/><stop offset="1" stop-color="#2e9900"/></linearGradient><linearGradient id="o53"><stop offset="0" stop-color="#009925"/><stop offset=".399" stop-color="#009913"/><stop offset=".707" stop-color="#009900"/><stop offset=".819" stop-color="#009900"/><stop offset="1" stop-color="#329900"/></linearGradient><linearGradient id="o54"><stop offset="0" stop-color="#009925"/><stop offset=".403" stop-color="#009913"/><stop offset=".716" stop-color="#009900"/><stop offset=".809" stop-color="#009900"/><stop offset="1" stop-color="#359900"/></linearGradient><linearGradient id="o55"><stop offset="0" stop-color="#009926"/><stop offset=".406" stop-color="#009914"/><stop offset=".719" stop-color="#009900"/><stop offset=".797" stop-color="#009900"/><stop offset="1" stop-color="#3a9900"/></linearGradient><linearGradient id="o56"><stop offset="0" stop-color="#009927"/><stop offset=".408" stop-color="#009914"/><stop offset=".725" stop-color="#009900"/><stop offset=".785" stop-color="#009900"/><stop offset="1" stop-color="#3e9900"/></linearGradient><linearGradient id="o57"><stop offset="0" stop-color="#009928"/><stop offset=".411" stop-color="#009915"/><stop offset=".732" stop-color="#009900"/><stop offset=".777" stop-color="#009900"/><stop offset="1" stop-color="#439900"/></linearGradient><linearGradient id="o58"><stop offset="0" stop-color="#009929"/><stop offset=".372" stop-color="#009918"/><stop offset=".766" stop-color="#009900"/><stop offset="1" stop-color="#489900"/></linearGradient><linearGradient id="o59"><stop offset="0" stop-color="#00992a"/><stop offset=".399" stop-color="#009917"/><stop offset=".754" stop-color="#009900"/><stop offset="1" stop-color="#4d9900"/></linearGradient><linearGradient id="o60"><stop offset="0" stop-color="#00992b"/><stop offset=".419" stop-color="#009917"/><stop offset=".743" stop-color="#009900"/><stop offset="1" stop-color="#529900"/></linearGradient><linearGradient id="o61"><stop offset="0" stop-color="#00992c"/><stop offset=".411" stop-color="#009918"/><stop offset=".736" stop-color="#009901"/><stop offset="1" stop-color="#579900"/></linearGradient><linearGradient id="o62"><stop offset="0" stop-color="#00992d"/><stop offset=".404" stop-color="#009919"/><stop offset=".725" stop-color="#009903"/><stop offset=".755" stop-color="#0a9900"/><stop offset="1" stop-color="#5c9900"/></linearGradient><linearGradient id="o63"><stop offset="0" stop-color="#00992e"/><stop offset=".397" stop-color="#00991a"/><stop offset=".715" stop-color="#009904"/><stop offset=".761" stop-color="#0f9900"/><stop offset="1" stop-color="#629900"/></linearGradient><linearGradient id="o64"><stop offset="0" stop-color="#00992e"/><stop offset=".391" stop-color="#00991b"/><stop offset=".704" stop-color="#009905"/><stop offset=".762" stop-color="#139900"/><stop offset="1" stop-color="#679900"/></linearGradient><linearGradient id="o65"><stop offset="0" stop-color="#00992f"/><stop offset=".384" stop-color="#00991c"/><stop offset=".694" stop-color="#009907"/><stop offset=".768" stop-color="#189900"/><stop offset=".89" stop-color="#439900"/><stop offset="1" stop-color="#6d9900"/></linearGradient><linearGradient id="o66"><stop offset="0" stop-color="#009930"/><stop offset=".38" stop-color="#00991e"/><stop offset=".687" stop-color="#009908"/><stop offset=".77" stop-color="#1d9900"/><stop offset=".891" stop-color="#489900"/><stop offset="1" stop-color="#739900"/></linearGradient><linearGradient id="o67"><stop offset="0" stop-color="#009931"/><stop offset=".375" stop-color="#00991f"/><stop offset=".679" stop-color="#009909"/><stop offset=".778" stop-color="#229900"/><stop offset=".895" stop-color="#4d9900"/><stop offset="1" stop-color="#789900"/></linearGradient><linearGradient id="o68"><stop offset="0" stop-color="#009932"/><stop offset=".368" stop-color="#009920"/><stop offset=".67" stop-color="#00990b"/><stop offset=".783" stop-color="#289900"/><stop offset=".896" stop-color="#539900"/><stop offset="1" stop-color="#7e9900"/></linearGradient><linearGradient id="o69"><stop offset="0" stop-color="#009933"/><stop offset=".361" stop-color="#009921"/><stop offset=".66" stop-color="#00990c"/><stop offset=".785" stop-color="#2d9900"/><stop offset=".897" stop-color="#589900"/><stop offset="1" stop-color="#859900"/></linearGradient><linearGradient id="o70"><stop offset="0" stop-color="#009934"/><stop offset=".356" stop-color="#009922"/><stop offset=".65" stop-color="#00990d"/><stop offset=".789" stop-color="#339900"/><stop offset=".901" stop-color="#5f9900"/><stop offset="1" stop-color="#8b9900"/></linearGradient><linearGradient id="o71"><stop offset="0" stop-color="#009935"/><stop offset=".353" stop-color="#009923"/><stop offset=".644" stop-color="#00990f"/><stop offset=".791" stop-color="#389900"/><stop offset=".902" stop-color="#659900"/><stop offset="1" stop-color="#929900"/></linearGradient><linearGradient id="o72"><stop offset="0" stop-color="#009936"/><stop offset=".347" stop-color="#009925"/><stop offset=".635" stop-color="#009910"/><stop offset=".796" stop-color="#3e9900"/><stop offset=".897" stop-color="#689900"/><stop offset="1" stop-color="#999800"/></linearGradient><linearGradient id="o73"><stop offset="0" stop-color="#009937"/><stop offset=".343" stop-color="#009926"/><stop offset=".627" stop-color="#009911"/><stop offset=".801" stop-color="#449900"/><stop offset=".895" stop-color="#6d9900"/><stop offset=".982" stop-color="#989900"/><stop offset="1" stop-color="#999100"/></linearGradient><linearGradient id="o74"><stop offset="0" stop-color="#009939"/><stop offset=".337" stop-color="#009927"/><stop offset=".618" stop-color="#009913"/><stop offset=".803" stop-color="#4a9900"/><stop offset=".89" stop-color="#719900"/><stop offset=".97" stop-color="#999900"/><stop offset="1" stop-color="#998b00"/></linearGradient><linearGradient id="o75"><stop offset="0" stop-color="#009939"/><stop offset=".332" stop-color="#009928"/><stop offset=".608" stop-color="#009914"/><stop offset=".807" stop-color="#519900"/><stop offset=".955" stop-color="#989900"/><stop offset="1" stop-color="#998400"/></linearGradient><linearGradient id="o76"><stop offset="0" stop-color="#00993b"/><stop offset=".329" stop-color="#00992a"/><stop offset=".603" stop-color="#009916"/><stop offset=".809" stop-color="#569900"/><stop offset=".941" stop-color="#989900"/><stop offset="1" stop-color="#997e00"/></linearGradient><linearGradient id="o77"><stop offset="0" stop-color="#00993c"/><stop offset=".325" stop-color="#00992b"/><stop offset=".596" stop-color="#009917"/><stop offset=".816" stop-color="#5e9900"/><stop offset=".933" stop-color="#999900"/><stop offset="1" stop-color="#997a00"/></linearGradient><linearGradient id="o78"><stop offset="0" stop-color="#00993d"/><stop offset=".322" stop-color="#00992c"/><stop offset=".588" stop-color="#009919"/><stop offset=".719" stop-color="#37990c"/><stop offset=".817" stop-color="#649900"/><stop offset=".919" stop-color="#999900"/><stop offset="1" stop-color="#997500"/></linearGradient><linearGradient id="o79"><stop offset="0" stop-color="#00993e"/><stop offset=".317" stop-color="#00992d"/><stop offset=".579" stop-color="#00991a"/><stop offset=".715" stop-color="#39990d"/><stop offset=".821" stop-color="#6c9900"/><stop offset=".905" stop-color="#989900"/><stop offset=".954" stop-color="#998100"/><stop offset="1" stop-color="#996f00"/></linearGradient><linearGradient id="o80"><stop offset="0" stop-color="#00993f"/><stop offset=".311" stop-color="#00992f"/><stop offset=".571" stop-color="#00991c"/><stop offset=".749" stop-color="#4d990a"/><stop offset=".826" stop-color="#749900"/><stop offset=".894" stop-color="#999900"/><stop offset=".943" stop-color="#998000"/><stop offset="1" stop-color="#996a00"/></linearGradient><linearGradient id="o81"><stop offset="0" stop-color="#009940"/><stop offset=".309" stop-color="#009930"/><stop offset=".567" stop-color="#00991d"/><stop offset=".745" stop-color="#51990b"/><stop offset=".827" stop-color="#7b9900"/><stop offset=".881" stop-color="#999900"/><stop offset=".935" stop-color="#997e00"/><stop offset="1" stop-color="#996600"/></linearGradient><linearGradient id="o82"><stop offset="0" stop-color="#009941"/><stop offset=".303" stop-color="#009932"/><stop offset=".559" stop-color="#00991f"/><stop offset=".733" stop-color="#50990d"/><stop offset=".831" stop-color="#839900"/><stop offset=".868" stop-color="#999900"/><stop offset=".93" stop-color="#997a00"/><stop offset="1" stop-color="#996100"/></linearGradient><linearGradient id="o83"><stop offset="0" stop-color="#009943"/><stop offset=".299" stop-color="#009933"/><stop offset=".55" stop-color="#009921"/><stop offset=".721" stop-color="#4f990f"/><stop offset=".832" stop-color="#8b9900"/><stop offset=".855" stop-color="#989900"/><stop offset=".922" stop-color="#997800"/><stop offset="1" stop-color="#995d00"/></linearGradient><linearGradient id="o84"><stop offset="0" stop-color="#009944"/><stop offset=".296" stop-color="#009934"/><stop offset=".543" stop-color="#009922"/><stop offset=".709" stop-color="#4e9911"/><stop offset=".845" stop-color="#999900"/><stop offset=".914" stop-color="#997600"/><stop offset="1" stop-color="#995900"/></linearGradient><linearGradient id="o85"><stop offset="0" stop-color="#009945"/><stop offset=".292" stop-color="#009936"/><stop offset=".537" stop-color="#009924"/><stop offset=".702" stop-color="#4e9913"/><stop offset=".835" stop-color="#999901"/><stop offset=".909" stop-color="#997400"/><stop offset="1" stop-color="#995600"/></linearGradient><linearGradient id="o86"><stop offset="0" stop-color="#009946"/><stop offset=".29" stop-color="#009937"/><stop offset=".532" stop-color="#009925"/><stop offset=".696" stop-color="#509915"/><stop offset=".822" stop-color="#989904"/><stop offset=".847" stop-color="#998b00"/><stop offset=".901" stop-color="#997100"/><stop offset="1" stop-color="#995200"/></linearGradient><linearGradient id="o87"><stop offset="0" stop-color="#009947"/><stop offset=".285" stop-color="#009939"/><stop offset=".524" stop-color="#009927"/><stop offset=".682" stop-color="#4e9917"/><stop offset=".812" stop-color="#999806"/><stop offset=".848" stop-color="#998400"/><stop offset=".894" stop-color="#996f00"/><stop offset="1" stop-color="#994f00"/></linearGradient><linearGradient id="o88"><stop offset="0" stop-color="#009949"/><stop offset=".28" stop-color="#00993a"/><stop offset=".518" stop-color="#009929"/><stop offset=".674" stop-color="#4e9919"/><stop offset=".801" stop-color="#999908"/><stop offset=".849" stop-color="#997e00"/><stop offset=".887" stop-color="#996d00"/><stop offset=".941" stop-color="#995b00"/><stop offset="1" stop-color="#994b00"/></linearGradient><linearGradient id="o89"><stop offset="0" stop-color="#00994a"/><stop offset=".276" stop-color="#00993c"/><stop offset=".509" stop-color="#00992b"/><stop offset=".665" stop-color="#4f991b"/><stop offset=".788" stop-color="#99990b"/><stop offset=".853" stop-color="#997600"/><stop offset=".879" stop-color="#996b00"/><stop offset=".936" stop-color="#995800"/><stop offset="1" stop-color="#994800"/></linearGradient><linearGradient id="o90"><stop offset="0" stop-color="#00994b"/><stop offset=".274" stop-color="#00993d"/><stop offset=".503" stop-color="#00992c"/><stop offset=".654" stop-color="#4e991d"/><stop offset=".777" stop-color="#98990d"/><stop offset=".822" stop-color="#997f05"/><stop offset=".872" stop-color="#996900"/><stop offset=".931" stop-color="#995600"/><stop offset="1" stop-color="#994500"/></linearGradient><linearGradient id="o91"><stop offset="0" stop-color="#00994d"/><stop offset=".272" stop-color="#00993f"/><stop offset=".499" stop-color="#00992e"/><stop offset=".646" stop-color="#4e991f"/><stop offset=".768" stop-color="#999810"/><stop offset=".813" stop-color="#997e07"/><stop offset=".865" stop-color="#996700"/><stop offset=".929" stop-color="#995300"/><stop offset="1" stop-color="#994200"/></linearGradient><linearGradient id="o92"><stop offset="0" stop-color="#00994e"/><stop offset=".268" stop-color="#009940"/><stop offset=".491" stop-color="#009930"/><stop offset=".64" stop-color="#509921"/><stop offset=".756" stop-color="#999912"/><stop offset=".803" stop-color="#997d09"/><stop offset=".858" stop-color="#996500"/><stop offset=".924" stop-color="#995000"/><stop offset="1" stop-color="#993f00"/></linearGradient><linearGradient id="o93"><stop offset="0" stop-color="#00994f"/><stop offset=".264" stop-color="#009942"/><stop offset=".486" stop-color="#009932"/><stop offset=".632" stop-color="#4f9923"/><stop offset=".747" stop-color="#999915"/><stop offset=".796" stop-color="#997c0b"/><stop offset=".854" stop-color="#996302"/><stop offset=".922" stop-color="#994e00"/><stop offset="1" stop-color="#993c00"/></linearGradient><linearGradient id="o94"><stop offset="0" stop-color="#009951"/><stop offset=".262" stop-color="#009943"/><stop offset=".479" stop-color="#009934"/><stop offset=".619" stop-color="#4c9926"/><stop offset=".738" stop-color="#999817"/><stop offset=".788" stop-color="#997a0c"/><stop offset=".847" stop-color="#996103"/><stop offset=".917" stop-color="#994b00"/><stop offset="1" stop-color="#993900"/></linearGradient><linearGradient id="o95"><stop offset="0" stop-color="#009952"/><stop offset=".255" stop-color="#009945"/><stop offset=".472" stop-color="#009936"/><stop offset=".608" stop-color="#4b9929"/><stop offset=".727" stop-color="#99981a"/><stop offset=".778" stop-color="#99790e"/><stop offset=".84" stop-color="#995f04"/><stop offset=".871" stop-color="#995500"/><stop offset=".912" stop-color="#994900"/><stop offset="1" stop-color="#993700"/></linearGradient><linearGradient id="o96"><stop offset="0" stop-color="#009954"/><stop offset=".256" stop-color="#009947"/><stop offset=".468" stop-color="#009938"/><stop offset=".609" stop-color="#50992a"/><stop offset=".716" stop-color="#99991c"/><stop offset=".767" stop-color="#997910"/><stop offset=".831" stop-color="#995e06"/><stop offset=".875" stop-color="#995000"/><stop offset="1" stop-color="#993400"/></linearGradient><linearGradient id="o97"><stop offset="0" stop-color="#009955"/><stop offset=".251" stop-color="#009949"/><stop offset=".462" stop-color="#00993a"/><stop offset=".599" stop-color="#4f992c"/><stop offset=".706" stop-color="#99991f"/><stop offset=".761" stop-color="#997712"/><stop offset=".825" stop-color="#995c07"/><stop offset=".876" stop-color="#994c00"/><stop offset="1" stop-color="#993200"/></linearGradient><linearGradient id="o98"><stop offset="0" stop-color="#009957"/><stop offset=".247" stop-color="#00994a"/><stop offset=".455" stop-color="#00993c"/><stop offset=".588" stop-color="#4e992f"/><stop offset=".694" stop-color="#989922"/><stop offset=".753" stop-color="#997513"/><stop offset=".818" stop-color="#995a08"/><stop offset=".879" stop-color="#994800"/><stop offset="1" stop-color="#992f00"/></linearGradient><linearGradient id="o99"><stop offset="0" stop-color="#009958"/><stop offset=".243" stop-color="#00994c"/><stop offset=".449" stop-color="#00993e"/><stop offset=".579" stop-color="#4d9931"/><stop offset=".684" stop-color="#989925"/><stop offset=".744" stop-color="#997415"/><stop offset=".812" stop-color="#995809"/><stop offset=".88" stop-color="#994400"/><stop offset="1" stop-color="#992d00"/></linearGradient><linearGradient id="o100"><stop offset="0" stop-color="#00995a"/><stop offset=".242" stop-color="#00994e"/><stop offset=".444" stop-color="#019940"/><stop offset=".574" stop-color="#4f9934"/><stop offset=".676" stop-color="#999927"/><stop offset=".733" stop-color="#997417"/><stop offset=".803" stop-color="#99570a"/><stop offset=".883" stop-color="#994000"/><stop offset="1" stop-color="#992b00"/></linearGradient><linearGradient id="o101"><stop offset="0" stop-color="#00995b"/><stop offset=".238" stop-color="#009950"/><stop offset=".438" stop-color="#009942"/><stop offset=".567" stop-color="#509936"/><stop offset=".666" stop-color="#98992a"/><stop offset=".725" stop-color="#997319"/><stop offset=".797" stop-color="#99550c"/><stop offset=".886" stop-color="#993d00"/><stop offset="1" stop-color="#992800"/></linearGradient><linearGradient id="o102"><stop offset="0" stop-color="#00995d"/><stop offset=".236" stop-color="#009952"/><stop offset=".433" stop-color="#009944"/><stop offset=".559" stop-color="#4f9939"/><stop offset=".658" stop-color="#98992d"/><stop offset=".719" stop-color="#99721b"/><stop offset=".793" stop-color="#99530d"/><stop offset=".889" stop-color="#993a00"/><stop offset="1" stop-color="#992700"/></linearGradient><linearGradient id="o103"><stop offset="0" stop-color="#00995e"/><stop offset=".233" stop-color="#009953"/><stop offset=".426" stop-color="#009946"/><stop offset=".549" stop-color="#4e993b"/><stop offset=".647" stop-color="#979930"/><stop offset=".711" stop-color="#99701d"/><stop offset=".784" stop-color="#99520e"/><stop offset=".892" stop-color="#993600"/><stop offset="1" stop-color="#992500"/></linearGradient><linearGradient id="o104"><stop offset="0" stop-color="#009960"/><stop offset=".229" stop-color="#009955"/><stop offset=".421" stop-color="#009949"/><stop offset=".543" stop-color="#4e993e"/><stop offset=".64" stop-color="#999933"/><stop offset=".669" stop-color="#998328"/><stop offset=".701" stop-color="#99701f"/><stop offset=".779" stop-color="#99500f"/><stop offset=".893" stop-color="#993300"/><stop offset="1" stop-color="#992300"/></linearGradient><linearGradient id="o105"><stop offset="0" stop-color="#009962"/><stop offset=".228" stop-color="#009957"/><stop offset=".416" stop-color="#01994b"/><stop offset=".538" stop-color="#509940"/><stop offset=".63" stop-color="#989936"/><stop offset=".661" stop-color="#99822a"/><stop offset=".692" stop-color="#996f21"/><stop offset=".77" stop-color="#994f10"/><stop offset=".828" stop-color="#993f08"/><stop offset=".896" stop-color="#993000"/><stop offset="1" stop-color="#992100"/></linearGradient><linearGradient id="o106"><stop offset="0" stop-color="#009963"/><stop offset=".411" stop-color="#00994d"/><stop offset=".529" stop-color="#4f9943"/><stop offset=".62" stop-color="#989939"/><stop offset=".654" stop-color="#99802c"/><stop offset=".685" stop-color="#996e22"/><stop offset=".764" stop-color="#994d11"/><stop offset=".825" stop-color="#993d08"/><stop offset=".897" stop-color="#992e00"/><stop offset="1" stop-color="#991f00"/></linearGradient><linearGradient id="o107"><stop offset="0" stop-color="#009965"/><stop offset=".406" stop-color="#009950"/><stop offset=".52" stop-color="#4e9946"/><stop offset=".611" stop-color="#97993c"/><stop offset=".647" stop-color="#997f2e"/><stop offset=".678" stop-color="#996d24"/><stop offset=".716" stop-color="#995b1b"/><stop offset=".759" stop-color="#994b12"/><stop offset=".823" stop-color="#993a09"/><stop offset=".9" stop-color="#992b00"/><stop offset="1" stop-color="#991d00"/></linearGradient><linearGradient id="o108"><stop offset="0" stop-color="#009967"/><stop offset=".399" stop-color="#009952"/><stop offset=".513" stop-color="#4f9949"/><stop offset=".603" stop-color="#99993f"/><stop offset=".634" stop-color="#998132"/><stop offset=".667" stop-color="#996d27"/><stop offset=".705" stop-color="#995b1d"/><stop offset=".751" stop-color="#994a14"/><stop offset=".819" stop-color="#993809"/><stop offset=".903" stop-color="#992800"/><stop offset="1" stop-color="#991b00"/></linearGradient><linearGradient id="o109"><stop offset="0" stop-color="#009969"/><stop offset=".394" stop-color="#009955"/><stop offset=".505" stop-color="#4d994c"/><stop offset=".594" stop-color="#989942"/><stop offset=".627" stop-color="#997f34"/><stop offset=".66" stop-color="#996b28"/><stop offset=".7" stop-color="#99591e"/><stop offset=".745" stop-color="#994915"/><stop offset=".816" stop-color="#99360a"/><stop offset=".903" stop-color="#992600"/><stop offset="1" stop-color="#991900"/></linearGradient><linearGradient id="o110"><stop offset="0" stop-color="#00996b"/><stop offset=".391" stop-color="#019957"/><stop offset=".501" stop-color="#50994e"/><stop offset=".586" stop-color="#989946"/><stop offset=".621" stop-color="#997e36"/><stop offset=".654" stop-color="#996a2a"/><stop offset=".694" stop-color="#99571f"/><stop offset=".739" stop-color="#994716"/><stop offset=".816" stop-color="#99330a"/><stop offset=".908" stop-color="#992300"/><stop offset="1" stop-color="#991800"/></linearGradient><linearGradient id="o111"><stop offset="0" stop-color="#00996c"/><stop offset=".386" stop-color="#00995a"/><stop offset=".495" stop-color="#509951"/><stop offset=".579" stop-color="#999949"/><stop offset=".61" stop-color="#99803a"/><stop offset=".645" stop-color="#996a2d"/><stop offset=".685" stop-color="#995722"/><stop offset=".731" stop-color="#994617"/><stop offset=".811" stop-color="#99320b"/><stop offset=".909" stop-color="#992100"/><stop offset="1" stop-color="#991600"/></linearGradient><linearGradient id="o112"><stop offset="0" stop-color="#00996e"/><stop offset=".379" stop-color="#00995d"/><stop offset=".486" stop-color="#4f9954"/><stop offset=".57" stop-color="#99994c"/><stop offset=".602" stop-color="#997e3c"/><stop offset=".637" stop-color="#99692f"/><stop offset=".679" stop-color="#995522"/><stop offset=".726" stop-color="#994518"/><stop offset=".809" stop-color="#99300b"/><stop offset=".912" stop-color="#991f00"/><stop offset="1" stop-color="#991400"/></linearGradient><linearGradient id="o113"><stop offset="0" stop-color="#009970"/><stop offset=".374" stop-color="#00995f"/><stop offset=".478" stop-color="#4e9958"/><stop offset=".561" stop-color="#989950"/><stop offset=".596" stop-color="#997d3e"/><stop offset=".63" stop-color="#996730"/><stop offset=".672" stop-color="#995424"/><stop offset=".718" stop-color="#99441a"/><stop offset=".806" stop-color="#992e0c"/><stop offset=".915" stop-color="#991d00"/><stop offset="1" stop-color="#991300"/></linearGradient><linearGradient id="o114"><stop offset="0" stop-color="#009972"/><stop offset=".368" stop-color="#009962"/><stop offset=".469" stop-color="#4d995b"/><stop offset=".552" stop-color="#979953"/><stop offset=".589" stop-color="#997b40"/><stop offset=".623" stop-color="#996632"/><stop offset=".664" stop-color="#995326"/><stop offset=".713" stop-color="#99421b"/><stop offset=".802" stop-color="#992c0c"/><stop offset=".915" stop-color="#991b00"/><stop offset="1" stop-color="#991100"/></linearGradient><linearGradient id="o115"><stop offset="0" stop-color="#009974"/><stop offset=".365" stop-color="#019965"/><stop offset=".466" stop-color="#4f995e"/><stop offset=".546" stop-color="#999957"/><stop offset=".578" stop-color="#997d44"/><stop offset=".614" stop-color="#996635"/><stop offset=".655" stop-color="#995228"/><stop offset=".705" stop-color="#99411c"/><stop offset=".799" stop-color="#992a0d"/><stop offset=".918" stop-color="#991800"/><stop offset="1" stop-color="#991000"/></linearGradient><linearGradient id="o116"><stop offset="0" stop-color="#009976"/><stop offset=".359" stop-color="#009968"/><stop offset=".459" stop-color="#509961"/><stop offset=".536" stop-color="#98995b"/><stop offset=".568" stop-color="#997d48"/><stop offset=".605" stop-color="#996638"/><stop offset=".648" stop-color="#995129"/><stop offset=".698" stop-color="#99401d"/><stop offset=".782" stop-color="#992b0f"/><stop offset=".884" stop-color="#991b03"/><stop offset=".92" stop-color="#991600"/><stop offset="1" stop-color="#990e00"/></linearGradient><linearGradient id="o117"><stop offset="0" stop-color="#009978"/><stop offset=".354" stop-color="#00996b"/><stop offset=".451" stop-color="#4e9965"/><stop offset=".528" stop-color="#98995f"/><stop offset=".562" stop-color="#997c4a"/><stop offset=".598" stop-color="#996439"/><stop offset=".641" stop-color="#99502b"/><stop offset=".693" stop-color="#993e1e"/><stop offset=".774" stop-color="#992a10"/><stop offset=".876" stop-color="#991a04"/><stop offset=".923" stop-color="#991400"/><stop offset="1" stop-color="#990d00"/></linearGradient><linearGradient id="o118"><stop offset="0" stop-color="#00997b"/><stop offset=".349" stop-color="#00996e"/><stop offset=".444" stop-color="#4d9968"/><stop offset=".52" stop-color="#979963"/><stop offset=".556" stop-color="#997a4c"/><stop offset=".592" stop-color="#99633b"/><stop offset=".635" stop-color="#994f2d"/><stop offset=".687" stop-color="#993d20"/><stop offset=".766" stop-color="#992a12"/><stop offset=".865" stop-color="#991a06"/><stop offset=".926" stop-color="#991300"/><stop offset="1" stop-color="#990c00"/></linearGradient><linearGradient id="o119"><stop offset="0" stop-color="#00997d"/><stop offset=".345" stop-color="#009971"/><stop offset=".438" stop-color="#4e996c"/><stop offset=".515" stop-color="#999966"/><stop offset=".546" stop-color="#997c51"/><stop offset=".584" stop-color="#99633e"/><stop offset=".629" stop-color="#994d2e"/><stop offset=".68" stop-color="#993c21"/><stop offset=".758" stop-color="#992913"/><stop offset=".855" stop-color="#991907"/><stop offset=".928" stop-color="#991100"/><stop offset="1" stop-color="#990a00"/></linearGradient><linearGradient id="o120"><stop offset="0" stop-color="#00997f"/><stop offset=".341" stop-color="#019974"/><stop offset=".43" stop-color="#4c996f"/><stop offset=".508" stop-color="#999769"/><stop offset=".539" stop-color="#997a53"/><stop offset=".577" stop-color="#996140"/><stop offset=".621" stop-color="#994c30"/><stop offset=".675" stop-color="#993a22"/><stop offset=".753" stop-color="#992814"/><stop offset=".849" stop-color="#991808"/><stop offset=".929" stop-color="#990f00"/><stop offset="1" stop-color="#990900"/></linearGradient><linearGradient id="o121"><stop offset="0" stop-color="#009981"/><stop offset=".336" stop-color="#009977"/><stop offset=".425" stop-color="#4d9973"/><stop offset=".5" stop-color="#99986e"/><stop offset=".531" stop-color="#997b57"/><stop offset=".569" stop-color="#996143"/><stop offset=".615" stop-color="#994b31"/><stop offset=".668" stop-color="#993923"/><stop offset=".746" stop-color="#992715"/><stop offset=".841" stop-color="#991809"/><stop offset=".931" stop-color="#990d00"/><stop offset="1" stop-color="#990700"/></linearGradient><linearGradient id="o122"><stop offset="0" stop-color="#009984"/><stop offset=".33" stop-color="#00997b"/><stop offset=".419" stop-color="#4d9977"/><stop offset=".491" stop-color="#999973"/><stop offset=".524" stop-color="#997959"/><stop offset=".562" stop-color="#996045"/><stop offset=".608" stop-color="#994a33"/><stop offset=".661" stop-color="#993824"/><stop offset=".738" stop-color="#992616"/><stop offset=".835" stop-color="#991709"/><stop offset=".932" stop-color="#990c00"/><stop offset="1" stop-color="#990600"/></linearGradient><linearGradient id="o123"><stop offset="0" stop-color="#009986"/><stop offset=".326" stop-color="#00997e"/><stop offset=".414" stop-color="#4e997b"/><stop offset=".484" stop-color="#999977"/><stop offset=".516" stop-color="#99795d"/><stop offset=".554" stop-color="#995f48"/><stop offset=".6" stop-color="#994935"/><stop offset=".654" stop-color="#993726"/><stop offset=".731" stop-color="#992517"/><stop offset=".827" stop-color="#99160a"/><stop offset=".934" stop-color="#990a00"/><stop offset="1" stop-color="#990500"/></linearGradient><linearGradient id="o124"><stop offset="0" stop-color="#009988"/><stop offset=".32" stop-color="#009982"/><stop offset=".401" stop-color="#48997f"/><stop offset=".477" stop-color="#99977a"/><stop offset=".51" stop-color="#99775f"/><stop offset=".547" stop-color="#995e4a"/><stop offset=".593" stop-color="#994837"/><stop offset=".647" stop-color="#993627"/><stop offset=".723" stop-color="#992418"/><stop offset=".819" stop-color="#99150b"/><stop offset=".935" stop-color="#990900"/><stop offset="1" stop-color="#990300"/></linearGradient><linearGradient id="o125"><stop offset="0" stop-color="#00998b"/><stop offset=".318" stop-color="#019985"/><stop offset=".4" stop-color="#4d9983"/><stop offset=".47" stop-color="#99987f"/><stop offset=".502" stop-color="#997763"/><stop offset=".539" stop-color="#995e4d"/><stop offset=".584" stop-color="#994839"/><stop offset=".641" stop-color="#993428"/><stop offset=".719" stop-color="#992319"/><stop offset=".814" stop-color="#99140c"/><stop offset=".937" stop-color="#990700"/><stop offset="1" stop-color="#990200"/></linearGradient><linearGradient id="o126"><stop offset="0" stop-color="#00998e"/><stop offset=".312" stop-color="#009989"/><stop offset=".397" stop-color="#509987"/><stop offset=".461" stop-color="#999985"/><stop offset=".494" stop-color="#997867"/><stop offset=".532" stop-color="#995c4f"/><stop offset=".578" stop-color="#99463b"/><stop offset=".634" stop-color="#99332a"/><stop offset=".711" stop-color="#99221a"/><stop offset=".806" stop-color="#99130d"/><stop offset=".94" stop-color="#990600"/><stop offset="1" stop-color="#990100"/></linearGradient><linearGradient id="o127"><stop offset="0" stop-color="#009990"/><stop offset=".309" stop-color="#00998d"/><stop offset=".386" stop-color="#4a998b"/><stop offset=".455" stop-color="#99998a"/><stop offset=".457" stop-color="#999788"/><stop offset=".489" stop-color="#997669"/><stop offset=".528" stop-color="#995b51"/><stop offset=".575" stop-color="#99443c"/><stop offset=".631" stop-color="#99322b"/><stop offset=".708" stop-color="#99201a"/><stop offset=".803" stop-color="#99120d"/><stop offset=".942" stop-color="#990400"/><stop offset="1" stop-color="#990000"/></linearGradient><linearGradient id="o128"><stop offset="0" stop-color="#009993"/><stop offset=".303" stop-color="#009991"/><stop offset=".38" stop-color="#4b9990"/><stop offset=".449" stop-color="#99978d"/><stop offset=".481" stop-color="#99766e"/><stop offset=".519" stop-color="#995b54"/><stop offset=".566" stop-color="#99443e"/><stop offset=".624" stop-color="#99312c"/><stop offset=".701" stop-color="#991f1c"/><stop offset=".797" stop-color="#99110e"/><stop offset=".944" stop-color="#990300"/><stop offset="1" stop-color="#990000"/></linearGradient><linearGradient id="o129"><stop offset="0" stop-color="#009996"/><stop offset=".299" stop-color="#009995"/><stop offset=".376" stop-color="#4c9994"/><stop offset=".442" stop-color="#999893"/><stop offset=".473" stop-color="#997672"/><stop offset=".512" stop-color="#995a57"/><stop offset=".561" stop-color="#994240"/><stop offset=".618" stop-color="#992f2d"/><stop offset=".694" stop-color="#991e1d"/><stop offset=".79" stop-color="#99100f"/><stop offset=".945" stop-color="#990100"/><stop offset="1" stop-color="#990000"/></linearGradient><linearGradient id="o130"><stop offset="0" stop-color="#009998"/><stop offset=".296" stop-color="#019999"/><stop offset=".372" stop-color="#4f9999"/><stop offset=".433" stop-color="#999999"/><stop offset=".465" stop-color="#997676"/><stop offset=".505" stop-color="#995959"/><stop offset=".554" stop-color="#994141"/><stop offset=".613" stop-color="#992e2e"/><stop offset=".691" stop-color="#991d1d"/><stop offset=".789" stop-color="#990f0f"/><stop offset=".943" stop-color="#990000"/><stop offset="1" stop-color="#990000"/></linearGradient><linearGradient id="o131"><stop offset="0" stop-color="#009799"/><stop offset=".291" stop-color="#009599"/><stop offset=".368" stop-color="#4f9499"/><stop offset=".429" stop-color="#999499"/><stop offset=".461" stop-color="#997277"/><stop offset=".501" stop-color="#99565a"/><stop offset=".549" stop-color="#993f42"/><stop offset=".611" stop-color="#992c2e"/><stop offset=".693" stop-color="#991a1d"/><stop offset=".796" stop-color="#990c0e"/><stop offset=".926" stop-color="#990002"/><stop offset="1" stop-color="#990000"/></linearGradient><linearGradient id="o132"><stop offset="0" stop-color="#009499"/><stop offset=".287" stop-color="#009199"/><stop offset=".362" stop-color="#4b9099"/><stop offset=".429" stop-color="#998d97"/><stop offset=".46" stop-color="#996d76"/><stop offset=".5" stop-color="#995259"/><stop offset=".548" stop-color="#993c42"/><stop offset=".609" stop-color="#99292e"/><stop offset=".695" stop-color="#99181c"/><stop offset=".803" stop-color="#990a0d"/><stop offset=".908" stop-color="#990003"/><stop offset="1" stop-color="#990000"/></linearGradient><linearGradient id="o133"><stop offset="0" stop-color="#009199"/><stop offset=".281" stop-color="#008d99"/><stop offset=".356" stop-color="#4a8c99"/><stop offset=".425" stop-color="#998897"/><stop offset=".458" stop-color="#996875"/><stop offset=".498" stop-color="#994e59"/><stop offset=".546" stop-color="#993942"/><stop offset=".606" stop-color="#99272f"/><stop offset=".698" stop-color="#99151b"/><stop offset=".815" stop-color="#99070c"/><stop offset=".892" stop-color="#990005"/><stop offset=".952" stop-color="#990000"/><stop offset="1" stop-color="#990000"/></linearGradient><linearGradient id="o134"><stop offset="0" stop-color="#008e99"/><stop offset=".277" stop-color="#008999"/><stop offset=".354" stop-color="#4b8799"/><stop offset=".422" stop-color="#998498"/><stop offset=".455" stop-color="#996575"/><stop offset=".495" stop-color="#994c5a"/><stop offset=".545" stop-color="#993642"/><stop offset=".605" stop-color="#99252f"/><stop offset=".702" stop-color="#99131b"/><stop offset=".828" stop-color="#99040b"/><stop offset=".876" stop-color="#990006"/><stop offset=".954" stop-color="#990000"/><stop offset="1" stop-color="#990000"/></linearGradient><linearGradient id="o135"><stop offset="0" stop-color="#008c99"/><stop offset=".275" stop-color="#008699"/><stop offset=".353" stop-color="#4d8399"/><stop offset=".419" stop-color="#997f98"/><stop offset=".452" stop-color="#996176"/><stop offset=".494" stop-color="#994859"/><stop offset=".543" stop-color="#993442"/><stop offset=".603" stop-color="#99232f"/><stop offset=".713" stop-color="#991019"/><stop offset=".86" stop-color="#990008"/><stop offset=".957" stop-color="#990000"/><stop offset="1" stop-color="#990000"/></linearGradient><linearGradient id="o136"><stop offset="0" stop-color="#008999"/><stop offset=".27" stop-color="#008299"/><stop offset=".35" stop-color="#4e7f99"/><stop offset=".416" stop-color="#997b98"/><stop offset=".449" stop-color="#995e76"/><stop offset=".49" stop-color="#99465a"/><stop offset=".539" stop-color="#993243"/><stop offset=".601" stop-color="#99212f"/><stop offset=".706" stop-color="#990f1a"/><stop offset=".844" stop-color="#99000a"/><stop offset=".959" stop-color="#990000"/><stop offset="1" stop-color="#990000"/></linearGradient><linearGradient id="o137"><stop offset="0" stop-color="#008699"/><stop offset=".266" stop-color="#007f99"/><stop offset=".348" stop-color="#4f7b99"/><stop offset=".413" stop-color="#997799"/><stop offset=".446" stop-color="#995b77"/><stop offset=".487" stop-color="#99435b"/><stop offset=".538" stop-color="#992f43"/><stop offset=".599" stop-color="#991f2f"/><stop offset=".699" stop-color="#990e1b"/><stop offset=".828" stop-color="#99000b"/><stop offset=".959" stop-color="#990000"/><stop offset="1" stop-color="#990000"/></linearGradient><linearGradient id="o138"><stop offset="0" stop-color="#008499"/><stop offset=".261" stop-color="#007b99"/><stop offset=".342" stop-color="#4d7799"/><stop offset=".409" stop-color="#997399"/><stop offset=".444" stop-color="#995676"/><stop offset=".485" stop-color="#99405a"/><stop offset=".536" stop-color="#992d43"/><stop offset=".597" stop-color="#991d2f"/><stop offset=".69" stop-color="#990d1c"/><stop offset=".813" stop-color="#99000d"/><stop offset=".961" stop-color="#990000"/><stop offset="1" stop-color="#990000"/></linearGradient><linearGradient id="o139"><stop offset="0" stop-color="#008199"/><stop offset=".257" stop-color="#007899"/><stop offset=".334" stop-color="#477399"/><stop offset=".409" stop-color="#996d97"/><stop offset=".443" stop-color="#995275"/><stop offset=".484" stop-color="#993c5a"/><stop offset=".534" stop-color="#992a43"/><stop offset=".597" stop-color="#991b2f"/><stop offset=".686" stop-color="#990c1d"/><stop offset=".798" stop-color="#99000e"/><stop offset=".962" stop-color="#990000"/><stop offset="1" stop-color="#990000"/></linearGradient><linearGradient id="o140"><stop offset="0" stop-color="#007e99"/><stop offset=".254" stop-color="#007499"/><stop offset=".335" stop-color="#4c6f99"/><stop offset=".405" stop-color="#996997"/><stop offset=".44" stop-color="#994f75"/><stop offset=".482" stop-color="#993959"/><stop offset=".532" stop-color="#992842"/><stop offset=".595" stop-color="#99192f"/><stop offset=".677" stop-color="#990c1e"/><stop offset=".782" stop-color="#990010"/><stop offset=".964" stop-color="#990000"/><stop offset="1" stop-color="#990000"/></linearGradient><linearGradient id="o141"><stop offset="0" stop-color="#007c99"/><stop offset=".249" stop-color="#007199"/><stop offset=".331" stop-color="#4d6c99"/><stop offset=".402" stop-color="#996598"/><stop offset=".436" stop-color="#994c76"/><stop offset=".478" stop-color="#99375a"/><stop offset=".528" stop-color="#992643"/><stop offset=".59" stop-color="#991830"/><stop offset=".669" stop-color="#990b20"/><stop offset=".767" stop-color="#990012"/><stop offset=".92" stop-color="#990003"/><stop offset="1" stop-color="#990000"/></linearGradient><linearGradient id="o142"><stop offset="0" stop-color="#007999"/><stop offset=".246" stop-color="#006e99"/><stop offset=".329" stop-color="#4d6899"/><stop offset=".399" stop-color="#996198"/><stop offset=".433" stop-color="#994977"/><stop offset=".475" stop-color="#99355b"/><stop offset=".527" stop-color="#992443"/><stop offset=".589" stop-color="#991630"/><stop offset=".663" stop-color="#990a21"/><stop offset=".75" stop-color="#990014"/><stop offset=".9" stop-color="#990005"/><stop offset="1" stop-color="#990000"/></linearGradient><linearGradient id="o143"><stop offset="0" stop-color="#007799"/><stop offset=".241" stop-color="#006b99"/><stop offset=".324" stop-color="#4c6599"/><stop offset=".396" stop-color="#995e98"/><stop offset=".431" stop-color="#994576"/><stop offset=".473" stop-color="#99325a"/><stop offset=".525" stop-color="#992143"/><stop offset=".586" stop-color="#991430"/><stop offset=".654" stop-color="#990a22"/><stop offset=".736" stop-color="#990015"/><stop offset=".885" stop-color="#990006"/><stop offset="1" stop-color="#990000"/></linearGradient><linearGradient id="o144"><stop offset="0" stop-color="#007499"/><stop offset=".238" stop-color="#016899"/><stop offset=".323" stop-color="#4e6199"/><stop offset=".393" stop-color="#995a99"/><stop offset=".429" stop-color="#994276"/><stop offset=".47" stop-color="#99305b"/><stop offset=".522" stop-color="#992044"/><stop offset=".585" stop-color="#991230"/><stop offset=".722" stop-color="#990017"/><stop offset=".869" stop-color="#990008"/><stop offset="1" stop-color="#990000"/></linearGradient><linearGradient id="o145"><stop offset="0" stop-color="#007299"/><stop offset=".235" stop-color="#006599"/><stop offset=".323" stop-color="#515e99"/><stop offset=".391" stop-color="#995799"/><stop offset=".426" stop-color="#994077"/><stop offset=".467" stop-color="#992d5b"/><stop offset=".521" stop-color="#991d44"/><stop offset=".584" stop-color="#991031"/><stop offset=".708" stop-color="#990019"/><stop offset=".856" stop-color="#990009"/><stop offset="1" stop-color="#990000"/></linearGradient><linearGradient id="o146"><stop offset="0" stop-color="#007099"/><stop offset=".23" stop-color="#006299"/><stop offset=".314" stop-color="#4c5b99"/><stop offset=".389" stop-color="#995297"/><stop offset=".424" stop-color="#993c76"/><stop offset=".468" stop-color="#992a5a"/><stop offset=".521" stop-color="#991b43"/><stop offset=".583" stop-color="#990e30"/><stop offset=".694" stop-color="#99001b"/><stop offset=".843" stop-color="#99000a"/><stop offset="1" stop-color="#990000"/></linearGradient><linearGradient id="o147"><stop offset="0" stop-color="#006d99"/><stop offset=".227" stop-color="#005f99"/><stop offset=".314" stop-color="#4c5899"/><stop offset=".389" stop-color="#994e97"/><stop offset=".424" stop-color="#993976"/><stop offset=".467" stop-color="#99285b"/><stop offset=".519" stop-color="#991a44"/><stop offset=".582" stop-color="#990d31"/><stop offset=".684" stop-color="#99001d"/><stop offset=".83" stop-color="#99000c"/><stop offset="1" stop-color="#990000"/></linearGradient><linearGradient id="o148"><stop offset="0" stop-color="#006b99"/><stop offset=".228" stop-color="#005d99"/><stop offset=".315" stop-color="#4b5599"/><stop offset=".393" stop-color="#994b98"/><stop offset=".429" stop-color="#993777"/><stop offset=".471" stop-color="#99265c"/><stop offset=".523" stop-color="#991846"/><stop offset=".587" stop-color="#990c32"/><stop offset=".681" stop-color="#990020"/><stop offset=".816" stop-color="#99000f"/><stop offset="1" stop-color="#990000"/></linearGradient><linearGradient id="o149"><stop offset="0" stop-color="#006999"/><stop offset=".229" stop-color="#015a99"/><stop offset=".32" stop-color="#4d5199"/><stop offset=".397" stop-color="#994898"/><stop offset=".433" stop-color="#993477"/><stop offset=".476" stop-color="#99245d"/><stop offset=".528" stop-color="#991746"/><stop offset=".591" stop-color="#990b34"/><stop offset=".678" stop-color="#990022"/><stop offset=".816" stop-color="#990010"/><stop offset="1" stop-color="#990002"/></linearGradient><linearGradient id="o150"><stop offset="0" stop-color="#006699"/><stop offset=".228" stop-color="#005799"/><stop offset=".322" stop-color="#4e4e99"/><stop offset=".4" stop-color="#994598"/><stop offset=".435" stop-color="#993379"/><stop offset=".478" stop-color="#99235e"/><stop offset=".53" stop-color="#991648"/><stop offset=".593" stop-color="#990b35"/><stop offset=".676" stop-color="#990024"/><stop offset=".758" stop-color="#990018"/><stop offset="1" stop-color="#990003"/></linearGradient><linearGradient id="o151"><stop offset="0" stop-color="#006499"/><stop offset=".229" stop-color="#005599"/><stop offset=".326" stop-color="#4e4b99"/><stop offset=".405" stop-color="#994199"/><stop offset=".441" stop-color="#99307a"/><stop offset=".484" stop-color="#99215f"/><stop offset=".536" stop-color="#991449"/><stop offset=".599" stop-color="#990a36"/><stop offset=".674" stop-color="#990027"/><stop offset=".763" stop-color="#990019"/><stop offset="1" stop-color="#990004"/></linearGradient><linearGradient id="o152"><stop offset="0" stop-color="#006299"/><stop offset=".228" stop-color="#005299"/><stop offset=".329" stop-color="#4f4899"/><stop offset=".409" stop-color="#993e99"/><stop offset=".445" stop-color="#992e7a"/><stop offset=".489" stop-color="#991f60"/><stop offset=".542" stop-color="#99134a"/><stop offset=".603" stop-color="#990837"/><stop offset=".669" stop-color="#990029"/><stop offset=".766" stop-color="#99001b"/><stop offset="1" stop-color="#990005"/></linearGradient><linearGradient id="o153"><stop offset="0" stop-color="#005f99"/><stop offset=".227" stop-color="#005099"/><stop offset=".33" stop-color="#4e4699"/><stop offset=".414" stop-color="#993b99"/><stop offset=".451" stop-color="#992b7b"/><stop offset=".496" stop-color="#991d60"/><stop offset=".547" stop-color="#99124b"/><stop offset=".609" stop-color="#990739"/><stop offset=".667" stop-color="#99002c"/><stop offset=".77" stop-color="#99001c"/><stop offset="1" stop-color="#990007"/></linearGradient><linearGradient id="o154"><stop offset="0" stop-color="#005d99"/><stop offset=".23" stop-color="#014d99"/><stop offset=".333" stop-color="#4c4399"/><stop offset=".422" stop-color="#993797"/><stop offset=".459" stop-color="#99287a"/><stop offset=".502" stop-color="#991b61"/><stop offset=".554" stop-color="#99104b"/><stop offset=".615" stop-color="#99063a"/><stop offset=".665" stop-color="#99002f"/><stop offset=".774" stop-color="#99001d"/><stop offset="1" stop-color="#990008"/></linearGradient><linearGradient id="o155"><stop offset="0" stop-color="#005b99"/><stop offset=".23" stop-color="#004b99"/><stop offset=".336" stop-color="#4d4099"/><stop offset=".426" stop-color="#993498"/><stop offset=".464" stop-color="#99267a"/><stop offset=".508" stop-color="#991961"/><stop offset=".558" stop-color="#990f4d"/><stop offset=".62" stop-color="#99053b"/><stop offset=".662" stop-color="#990031"/><stop offset=".779" stop-color="#99001e"/><stop offset="1" stop-color="#990009"/></linearGradient><linearGradient id="o156"><stop offset="0" stop-color="#005999"/><stop offset=".229" stop-color="#004999"/><stop offset=".339" stop-color="#4d3e99"/><stop offset=".43" stop-color="#993298"/><stop offset=".469" stop-color="#99237b"/><stop offset=".511" stop-color="#991863"/><stop offset=".563" stop-color="#990d4e"/><stop offset=".626" stop-color="#99043c"/><stop offset=".659" stop-color="#990034"/><stop offset=".783" stop-color="#990020"/><stop offset="1" stop-color="#99000b"/></linearGradient><linearGradient id="o157"><stop offset="0" stop-color="#005799"/><stop offset=".228" stop-color="#004699"/><stop offset=".342" stop-color="#4e3b99"/><stop offset=".435" stop-color="#992f98"/><stop offset=".474" stop-color="#99217b"/><stop offset=".517" stop-color="#991664"/><stop offset=".569" stop-color="#990c4f"/><stop offset=".629" stop-color="#99033e"/><stop offset=".656" stop-color="#990037"/><stop offset=".784" stop-color="#990021"/><stop offset="1" stop-color="#99000c"/></linearGradient><linearGradient id="o158"><stop offset="0" stop-color="#005599"/><stop offset=".229" stop-color="#004499"/><stop offset=".344" stop-color="#4d3999"/><stop offset=".441" stop-color="#992c98"/><stop offset=".478" stop-color="#991f7d"/><stop offset=".522" stop-color="#991465"/><stop offset=".575" stop-color="#990b50"/><stop offset=".635" stop-color="#99023f"/><stop offset=".707" stop-color="#990030"/><stop offset=".79" stop-color="#990023"/><stop offset="1" stop-color="#99000e"/></linearGradient><linearGradient id="o159"><stop offset="0" stop-color="#005299"/><stop offset=".231" stop-color="#014299"/><stop offset=".353" stop-color="#503599"/><stop offset=".447" stop-color="#992999"/><stop offset=".485" stop-color="#991d7d"/><stop offset=".529" stop-color="#991266"/><stop offset=".581" stop-color="#990951"/><stop offset=".64" stop-color="#990140"/><stop offset=".711" stop-color="#990031"/><stop offset=".793" stop-color="#990024"/><stop offset="1" stop-color="#99000f"/></linearGradient><linearGradient id="o160"><stop offset="0" stop-color="#005099"/><stop offset=".23" stop-color="#004099"/><stop offset=".356" stop-color="#513399"/><stop offset=".452" stop-color="#992799"/><stop offset=".49" stop-color="#991b7e"/><stop offset=".533" stop-color="#991167"/><stop offset=".586" stop-color="#990853"/><stop offset=".646" stop-color="#990042"/><stop offset=".715" stop-color="#990033"/><stop offset=".797" stop-color="#990026"/><stop offset="1" stop-color="#990011"/></linearGradient><linearGradient id="o161"><stop offset="0" stop-color="#004e99"/><stop offset=".229" stop-color="#003e99"/><stop offset=".358" stop-color="#503199"/><stop offset=".457" stop-color="#992499"/><stop offset=".496" stop-color="#99197e"/><stop offset=".54" stop-color="#990f68"/><stop offset=".591" stop-color="#990754"/><stop offset=".65" stop-color="#990043"/><stop offset=".798" stop-color="#990028"/><stop offset="1" stop-color="#990013"/></linearGradient><linearGradient id="o162"><stop offset="0" stop-color="#004c99"/><stop offset=".228" stop-color="#003c99"/><stop offset=".354" stop-color="#4b2f99"/><stop offset=".465" stop-color="#992098"/><stop offset=".502" stop-color="#99167f"/><stop offset=".547" stop-color="#990d68"/><stop offset=".599" stop-color="#990555"/><stop offset=".658" stop-color="#990044"/><stop offset=".804" stop-color="#990029"/><stop offset="1" stop-color="#990014"/></linearGradient><linearGradient id="o163"><stop offset="0" stop-color="#004a99"/><stop offset=".229" stop-color="#003a99"/><stop offset=".359" stop-color="#4c2d99"/><stop offset=".472" stop-color="#991e98"/><stop offset=".51" stop-color="#99147f"/><stop offset=".555" stop-color="#990b69"/><stop offset=".633" stop-color="#99004e"/><stop offset=".663" stop-color="#990046"/><stop offset=".809" stop-color="#99002b"/><stop offset="1" stop-color="#990016"/></linearGradient><linearGradient id="o164"><stop offset="0" stop-color="#004899"/><stop offset=".231" stop-color="#013799"/><stop offset=".367" stop-color="#4e2a99"/><stop offset=".479" stop-color="#991b98"/><stop offset=".518" stop-color="#991280"/><stop offset=".562" stop-color="#990a6a"/><stop offset=".631" stop-color="#990052"/><stop offset=".669" stop-color="#990048"/><stop offset=".813" stop-color="#99002c"/><stop offset="1" stop-color="#990018"/></linearGradient><linearGradient id="o165"><stop offset="0" stop-color="#004699"/><stop offset=".23" stop-color="#003599"/><stop offset=".371" stop-color="#4e2899"/><stop offset=".486" stop-color="#991998"/><stop offset=".525" stop-color="#991080"/><stop offset=".569" stop-color="#99086b"/><stop offset=".627" stop-color="#990056"/><stop offset=".676" stop-color="#990049"/><stop offset=".817" stop-color="#99002e"/><stop offset="1" stop-color="#99001a"/></linearGradient><linearGradient id="o166"><stop offset="0" stop-color="#004499"/><stop offset=".229" stop-color="#003499"/><stop offset=".375" stop-color="#4f2599"/><stop offset=".492" stop-color="#991699"/><stop offset=".529" stop-color="#990e82"/><stop offset=".574" stop-color="#99076c"/><stop offset=".622" stop-color="#99005b"/><stop offset=".681" stop-color="#99004b"/><stop offset=".819" stop-color="#990030"/><stop offset="1" stop-color="#99001b"/></linearGradient><linearGradient id="o167"><stop offset="0" stop-color="#004299"/><stop offset=".228" stop-color="#003299"/><stop offset=".379" stop-color="#4f2399"/><stop offset=".499" stop-color="#991499"/><stop offset=".537" stop-color="#990c82"/><stop offset=".58" stop-color="#99056e"/><stop offset=".615" stop-color="#990061"/><stop offset=".686" stop-color="#99004c"/><stop offset=".824" stop-color="#990032"/><stop offset="1" stop-color="#99001d"/></linearGradient><linearGradient id="o168"><stop offset="0" stop-color="#004099"/><stop offset=".229" stop-color="#013099"/><stop offset=".384" stop-color="#502199"/><stop offset=".506" stop-color="#991299"/><stop offset=".544" stop-color="#990a83"/><stop offset=".588" stop-color="#99036e"/><stop offset=".61" stop-color="#990066"/><stop offset=".693" stop-color="#99004e"/><stop offset=".829" stop-color="#990034"/><stop offset="1" stop-color="#99001f"/></linearGradient><linearGradient id="o169"><stop offset="0" stop-color="#003e99"/><stop offset=".23" stop-color="#002e99"/><stop offset=".39" stop-color="#501f99"/><stop offset=".514" stop-color="#990f99"/><stop offset=".553" stop-color="#990883"/><stop offset=".596" stop-color="#990270"/><stop offset=".699" stop-color="#99004f"/><stop offset=".831" stop-color="#990036"/><stop offset="1" stop-color="#990021"/></linearGradient><linearGradient id="o170"><stop offset="0" stop-color="#003c99"/><stop offset=".23" stop-color="#002c99"/><stop offset=".391" stop-color="#4d1d99"/><stop offset=".526" stop-color="#990c98"/><stop offset=".563" stop-color="#990683"/><stop offset=".606" stop-color="#990070"/><stop offset=".707" stop-color="#990051"/><stop offset=".836" stop-color="#990038"/><stop offset="1" stop-color="#990024"/></linearGradient><linearGradient id="o171"><stop offset="0" stop-color="#003a99"/><stop offset=".229" stop-color="#002a99"/><stop offset=".396" stop-color="#4e1b99"/><stop offset=".534" stop-color="#990a98"/><stop offset=".572" stop-color="#990484"/><stop offset=".613" stop-color="#990072"/><stop offset=".716" stop-color="#990053"/><stop offset=".842" stop-color="#99003a"/><stop offset="1" stop-color="#990026"/></linearGradient><linearGradient id="o172"><stop offset="0" stop-color="#003899"/><stop offset=".228" stop-color="#002999"/><stop offset=".401" stop-color="#4e1999"/><stop offset=".542" stop-color="#990898"/><stop offset=".59" stop-color="#990080"/><stop offset=".623" stop-color="#990072"/><stop offset=".722" stop-color="#990054"/><stop offset=".844" stop-color="#99003c"/><stop offset="1" stop-color="#990028"/></linearGradient><linearGradient id="o173"><stop offset="0" stop-color="#003699"/><stop offset=".229" stop-color="#012799"/><stop offset=".407" stop-color="#4f1799"/><stop offset=".55" stop-color="#990599"/><stop offset=".584" stop-color="#990087"/><stop offset=".63" stop-color="#990074"/><stop offset=".728" stop-color="#990056"/><stop offset=".85" stop-color="#99003e"/><stop offset="1" stop-color="#99002b"/></linearGradient><linearGradient id="o174"><stop offset="0" stop-color="#003499"/><stop offset=".228" stop-color="#002599"/><stop offset=".416" stop-color="#511499"/><stop offset=".559" stop-color="#990399"/><stop offset=".578" stop-color="#99008f"/><stop offset=".637" stop-color="#990076"/><stop offset=".734" stop-color="#990058"/><stop offset=".853" stop-color="#990041"/><stop offset="1" stop-color="#99002d"/></linearGradient><linearGradient id="o175"><stop offset="0" stop-color="#003399"/><stop offset=".228" stop-color="#002399"/><stop offset=".42" stop-color="#4f1299"/><stop offset=".571" stop-color="#990099"/><stop offset=".647" stop-color="#990077"/><stop offset=".744" stop-color="#99005a"/><stop offset=".859" stop-color="#990043"/><stop offset="1" stop-color="#990030"/></linearGradient><linearGradient id="o176"><stop offset="0" stop-color="#003199"/><stop offset=".226" stop-color="#002299"/><stop offset=".426" stop-color="#501099"/><stop offset=".58" stop-color="#990099"/><stop offset=".659" stop-color="#990077"/><stop offset=".751" stop-color="#99005d"/><stop offset=".862" stop-color="#990046"/><stop offset="1" stop-color="#990033"/></linearGradient><linearGradient id="o177"><stop offset="0" stop-color="#002f99"/><stop offset=".225" stop-color="#002099"/><stop offset=".423" stop-color="#4c0f99"/><stop offset=".557" stop-color="#880099"/><stop offset=".594" stop-color="#990098"/><stop offset=".671" stop-color="#990078"/><stop offset=".762" stop-color="#99005e"/><stop offset=".869" stop-color="#990048"/><stop offset="1" stop-color="#990036"/></linearGradient><linearGradient id="o178"><stop offset="0" stop-color="#002d99"/><stop offset=".227" stop-color="#011e99"/><stop offset=".433" stop-color="#4e0d99"/><stop offset=".55" stop-color="#800099"/><stop offset=".605" stop-color="#990098"/><stop offset=".68" stop-color="#990079"/><stop offset=".77" stop-color="#990060"/><stop offset=".876" stop-color="#99004a"/><stop offset="1" stop-color="#990038"/></linearGradient><linearGradient id="o179"><stop offset="0" stop-color="#002b99"/><stop offset=".225" stop-color="#001d99"/><stop offset=".44" stop-color="#4e0b99"/><stop offset=".542" stop-color="#780099"/><stop offset=".616" stop-color="#990098"/><stop offset=".69" stop-color="#99007b"/><stop offset=".775" stop-color="#990063"/><stop offset=".877" stop-color="#99004e"/><stop offset="1" stop-color="#99003c"/></linearGradient><linearGradient id="o180"><stop offset="0" stop-color="#002999"/><stop offset=".224" stop-color="#001b99"/><stop offset=".404" stop-color="#3f0d99"/><stop offset=".534" stop-color="#710099"/><stop offset=".628" stop-color="#990099"/><stop offset=".7" stop-color="#99007d"/><stop offset=".783" stop-color="#990065"/><stop offset=".884" stop-color="#990050"/><stop offset="1" stop-color="#99003f"/></linearGradient><linearGradient id="o181"><stop offset="0" stop-color="#002799"/><stop offset=".223" stop-color="#001a99"/><stop offset=".398" stop-color="#3a0c99"/><stop offset=".524" stop-color="#680099"/><stop offset=".643" stop-color="#990099"/><stop offset=".714" stop-color="#99007e"/><stop offset=".796" stop-color="#990067"/><stop offset=".888" stop-color="#990054"/><stop offset="1" stop-color="#990043"/></linearGradient><linearGradient id="o182"><stop offset="0" stop-color="#002699"/><stop offset=".221" stop-color="#001899"/><stop offset=".389" stop-color="#350c99"/><stop offset=".515" stop-color="#610099"/><stop offset=".656" stop-color="#990099"/><stop offset=".725" stop-color="#990080"/><stop offset=".805" stop-color="#990069"/><stop offset=".897" stop-color="#990056"/><stop offset="1" stop-color="#990046"/></linearGradient><linearGradient id="o183"><stop offset="0" stop-color="#002499"/><stop offset=".224" stop-color="#011799"/><stop offset=".506" stop-color="#5b0099"/><stop offset=".671" stop-color="#990099"/><stop offset=".741" stop-color="#990080"/><stop offset=".816" stop-color="#99006c"/><stop offset=".902" stop-color="#99005a"/><stop offset="1" stop-color="#99004a"/></linearGradient><linearGradient id="o184"><stop offset="0" stop-color="#002299"/><stop offset=".219" stop-color="#001599"/><stop offset=".494" stop-color="#540099"/><stop offset=".684" stop-color="#990099"/><stop offset=".753" stop-color="#990082"/><stop offset=".822" stop-color="#99006f"/><stop offset=".907" stop-color="#99005d"/><stop offset="1" stop-color="#99004e"/></linearGradient><linearGradient id="o185"><stop offset="0" stop-color="#002099"/><stop offset=".217" stop-color="#001499"/><stop offset=".483" stop-color="#4e0099"/><stop offset=".7" stop-color="#980099"/><stop offset=".767" stop-color="#990083"/><stop offset=".833" stop-color="#990071"/><stop offset="1" stop-color="#990052"/></linearGradient><linearGradient id="o186"><stop offset="0" stop-color="#001e99"/><stop offset=".215" stop-color="#001299"/><stop offset=".468" stop-color="#460099"/><stop offset=".597" stop-color="#6f0099"/><stop offset=".717" stop-color="#980099"/><stop offset=".845" stop-color="#990074"/><stop offset="1" stop-color="#990056"/></linearGradient><linearGradient id="o187"><stop offset="0" stop-color="#001d99"/><stop offset=".218" stop-color="#011199"/><stop offset=".458" stop-color="#410099"/><stop offset=".604" stop-color="#6c0099"/><stop offset=".738" stop-color="#980099"/><stop offset=".862" stop-color="#990076"/><stop offset="1" stop-color="#99005b"/></linearGradient><linearGradient id="o188"><stop offset="0" stop-color="#001b99"/><stop offset=".216" stop-color="#010f99"/><stop offset=".445" stop-color="#3b0099"/><stop offset=".61" stop-color="#690099"/><stop offset=".757" stop-color="#980099"/><stop offset=".876" stop-color="#990079"/><stop offset="1" stop-color="#990060"/></linearGradient><linearGradient id="o189"><stop offset="0" stop-color="#001999"/><stop offset=".213" stop-color="#000e99"/><stop offset=".431" stop-color="#350099"/><stop offset=".616" stop-color="#670099"/><stop offset=".782" stop-color="#990099"/><stop offset=".882" stop-color="#99007d"/><stop offset="1" stop-color="#990065"/></linearGradient><linearGradient id="o190"><stop offset="0" stop-color="#001799"/><stop offset=".211" stop-color="#000d99"/><stop offset=".417" stop-color="#300099"/><stop offset=".623" stop-color="#640099"/><stop offset=".804" stop-color="#990099"/><stop offset=".897" stop-color="#990080"/><stop offset="1" stop-color="#99006b"/></linearGradient><linearGradient id="o191"><stop offset="0" stop-color="#001599"/><stop offset=".204" stop-color="#000b99"/><stop offset=".398" stop-color="#2b0099"/><stop offset=".622" stop-color="#610099"/><stop offset=".827" stop-color="#990099"/><stop offset=".908" stop-color="#990084"/><stop offset="1" stop-color="#990071"/></linearGradient><linearGradient id="o192"><stop offset="0" stop-color="#001499"/><stop offset=".207" stop-color="#010a99"/><stop offset=".378" stop-color="#250099"/><stop offset=".633" stop-color="#5e0099"/><stop offset=".856" stop-color="#990099"/><stop offset="1" stop-color="#990078"/></linearGradient><linearGradient id="o193"><stop offset="0" stop-color="#001299"/><stop offset=".204" stop-color="#010999"/><stop offset=".359" stop-color="#200099"/><stop offset=".641" stop-color="#5c0099"/><stop offset=".884" stop-color="#980099"/><stop offset="1" stop-color="#99007f"/></linearGradient><linearGradient id="o194"><stop offset="0" stop-color="#001099"/><stop offset=".201" stop-color="#000799"/><stop offset=".339" stop-color="#1b0099"/><stop offset=".603" stop-color="#500099"/><stop offset=".914" stop-color="#980099"/><stop offset="1" stop-color="#990086"/></linearGradient><linearGradient id="o195"><stop offset="0" stop-color="#000e99"/><stop offset=".193" stop-color="#000699"/><stop offset=".313" stop-color="#160099"/><stop offset=".62" stop-color="#500099"/><stop offset=".946" stop-color="#980099"/><stop offset="1" stop-color="#99008e"/></linearGradient><linearGradient id="o196"><stop offset="0" stop-color="#000d99"/><stop offset=".189" stop-color="#000599"/><stop offset=".289" stop-color="#110099"/><stop offset=".604" stop-color="#490099"/><stop offset=".981" stop-color="#980099"/><stop offset="1" stop-color="#990096"/></linearGradient><linearGradient id="o197"><stop offset="0" stop-color="#000b99"/><stop offset=".191" stop-color="#010399"/><stop offset=".257" stop-color="#0c0099"/><stop offset=".645" stop-color="#4d0099"/><stop offset="1" stop-color="#930099"/></linearGradient><linearGradient id="o198"><stop offset="0" stop-color="#000999"/><stop offset=".182" stop-color="#010299"/><stop offset=".643" stop-color="#490099"/><stop offset="1" stop-color="#890099"/></linearGradient><linearGradient id="o199"><stop offset="0" stop-color="#000799"/><stop offset=".176" stop-color="#000199"/><stop offset=".647" stop-color="#460099"/><stop offset="1" stop-color="#810099"/></linearGradient><linearGradient id="o200"><stop offset="0" stop-color="#000599"/><stop offset=".164" stop-color="#000099"/><stop offset=".641" stop-color="#410099"/><stop offset="1" stop-color="#790099"/></linearGradient><linearGradient id="o201"><stop offset="0" stop-color="#000399"/><stop offset=".15" stop-color="#000099"/><stop offset=".633" stop-color="#3d0099"/><stop offset="1" stop-color="#720099"/></linearGradient><linearGradient id="o202"><stop offset="0" stop-color="#000299"/><stop offset=".15" stop-color="#010099"/><stop offset=".637" stop-color="#3b0099"/><stop offset="1" stop-color="#6a0099"/></linearGradient><linearGradient id="o203"><stop offset="0" stop-color="#000099"/><stop offset=".135" stop-color="#000099"/><stop offset=".644" stop-color="#380099"/><stop offset="1" stop-color="#620099"/></linearGradient><linearGradient id="o204"><stop offset="0" stop-color="#000099"/><stop offset=".115" stop-color="#000099"/><stop offset="1" stop-color="#5b0099"/></linearGradient><linearGradient id="o205"><stop offset="0" stop-color="#000099"/><stop offset=".091" stop-color="#000099"/><stop offset="1" stop-color="#540099"/></linearGradient><linearGradient id="o206"><stop offset="0" stop-color="#000099"/><stop offset=".075" stop-color="#010099"/><stop offset="1" stop-color="#4e0099"/></linearGradient><linearGradient id="o207"><stop offset="0" stop-color="#000099"/><stop offset="1" stop-color="#470099"/></linearGradient><linearGradient id="o208"><stop offset="0" stop-color="#020099"/><stop offset="1" stop-color="#410099"/></linearGradient><linearGradient id="o209"><stop offset="0" stop-color="#050099"/><stop offset="1" stop-color="#3a0099"/></linearGradient><linearGradient id="o210"><stop offset="0" stop-color="#090099"/><stop offset="1" stop-color="#350099"/></linearGradient><linearGradient id="o211"><stop offset="0" stop-color="#0d0099"/><stop offset="1" stop-color="#2f0099"/></linearGradient><linearGradient id="o212"><stop offset="0" stop-color="#110099"/><stop offset="1" stop-color="#290099"/></linearGradient><linearGradient id="o213"><stop offset="0" stop-color="#150099"/><stop offset="1" stop-color="#240099"/></linearGradient><linearGradient id="o214"><stop offset="0" stop-color="#180099"/><stop offset="1" stop-color="#1e0099"/></linearGradient><linearGradient id="i215"><stop offset="0" stop-color="#00ff02"/><stop offset=".25" stop-color="#00ff01"/><stop offset="1" stop-color="#0bff00"/></linearGradient><linearGradient id="i216"><stop offset="0" stop-color="#00ff05"/><stop offset=".25" stop-color="#01ff03"/><stop offset="1" stop-color="#11ff00"/></linearGradient><linearGradient id="i217"><stop offset="0" stop-color="#00ff06"/><stop offset=".125" stop-color="#01ff05"/><stop offset="1" stop-color="#1aff00"/></linearGradient><linearGradient id="i218"><stop offset="0" stop-color="#00ff09"/><stop offset=".1" stop-color="#00ff08"/><stop offset="1" stop-color="#21ff00"/></linearGradient><linearGradient id="i219"><stop offset="0" stop-color="#00ff0b"/><stop offset=".08" stop-color="#00ff0a"/><stop offset="1" stop-color="#2aff00"/></linearGradient><linearGradient id="i220"><stop offset="0" stop-color="#00ff0d"/><stop offset=".1" stop-color="#02ff0c"/><stop offset="1" stop-color="#33ff00"/></linearGradient><linearGradient id="i221"><stop offset="0" stop-color="#00ff0f"/><stop offset=".061" stop-color="#01ff0e"/><stop offset="1" stop-color="#3aff00"/></linearGradient><linearGradient id="i222"><stop offset="0" stop-color="#00ff11"/><stop offset=".053" stop-color="#01ff10"/><stop offset="1" stop-color="#44ff00"/></linearGradient><linearGradient id="i223"><stop offset="0" stop-color="#00ff14"/><stop offset=".048" stop-color="#00ff13"/><stop offset="1" stop-color="#4bff00"/></linearGradient><linearGradient id="i224"><stop offset="0" stop-color="#00ff16"/><stop offset=".043" stop-color="#00ff15"/><stop offset="1" stop-color="#55ff00"/></linearGradient><linearGradient id="i225"><stop offset="0" stop-color="#00ff18"/><stop offset=".058" stop-color="#02ff17"/><stop offset="1" stop-color="#5fff00"/></linearGradient><linearGradient id="i226"><stop offset="0" stop-color="#00ff1a"/><stop offset=".036" stop-color="#01ff19"/><stop offset="1" stop-color="#68ff00"/></linearGradient><linearGradient id="i227"><stop offset="0" stop-color="#00ff1d"/><stop offset=".033" stop-color="#01ff1c"/><stop offset="1" stop-color="#73ff00"/></linearGradient><linearGradient id="i228"><stop offset="0" stop-color="#00ff1f"/><stop offset=".031" stop-color="#00ff1e"/><stop offset="1" stop-color="#7cff00"/></linearGradient><linearGradient id="i229"><stop offset="0" stop-color="#00ff21"/><stop offset=".029" stop-color="#00ff21"/><stop offset=".435" stop-color="#37ff14"/><stop offset="1" stop-color="#87ff00"/></linearGradient><linearGradient id="i230"><stop offset="0" stop-color="#00ff24"/><stop offset=".041" stop-color="#02ff23"/><stop offset=".446" stop-color="#3dff15"/><stop offset="1" stop-color="#93ff00"/></linearGradient><linearGradient id="i231"><stop offset="0" stop-color="#00ff26"/><stop offset=".026" stop-color="#01ff25"/><stop offset=".506" stop-color="#4bff14"/><stop offset="1" stop-color="#9dff00"/></linearGradient><linearGradient id="i232"><stop offset="0" stop-color="#00ff29"/><stop offset=".024" stop-color="#01ff28"/><stop offset=".5" stop-color="#4fff16"/><stop offset="1" stop-color="#a9ff00"/></linearGradient><linearGradient id="i233"><stop offset="0" stop-color="#00ff2b"/><stop offset=".023" stop-color="#00ff2a"/><stop offset=".506" stop-color="#56ff17"/><stop offset="1" stop-color="#b6ff00"/></linearGradient><linearGradient id="i234"><stop offset="0" stop-color="#00ff2e"/><stop offset=".022" stop-color="#00ff2d"/><stop offset=".505" stop-color="#5aff19"/><stop offset=".758" stop-color="#8dff0c"/><stop offset="1" stop-color="#c2ff00"/></linearGradient><linearGradient id="i235"><stop offset="0" stop-color="#00ff30"/><stop offset=".031" stop-color="#02ff2f"/><stop offset=".5" stop-color="#5fff1a"/><stop offset=".76" stop-color="#97ff0d"/><stop offset="1" stop-color="#d0ff00"/></linearGradient><linearGradient id="i236"><stop offset="0" stop-color="#00ff33"/><stop offset=".02" stop-color="#01ff32"/><stop offset=".535" stop-color="#6dff1a"/><stop offset=".778" stop-color="#a4ff0d"/><stop offset="1" stop-color="#dcff00"/></linearGradient><linearGradient id="i237"><stop offset="0" stop-color="#00ff35"/><stop offset=".019" stop-color="#01ff35"/><stop offset=".529" stop-color="#72ff1c"/><stop offset=".769" stop-color="#adff0e"/><stop offset="1" stop-color="#ebff00"/></linearGradient><linearGradient id="i238"><stop offset="0" stop-color="#00ff38"/><stop offset=".018" stop-color="#00ff37"/><stop offset=".532" stop-color="#79ff1d"/><stop offset=".771" stop-color="#b8ff0f"/><stop offset=".963" stop-color="#efff00"/><stop offset="1" stop-color="#faff00"/></linearGradient><linearGradient id="i239"><stop offset="0" stop-color="#00ff3b"/><stop offset=".018" stop-color="#00ff3a"/><stop offset=".434" stop-color="#65ff25"/><stop offset=".708" stop-color="#afff14"/><stop offset=".965" stop-color="#fcff01"/><stop offset="1" stop-color="#fff600"/></linearGradient><linearGradient id="i240"><stop offset="0" stop-color="#00ff3e"/><stop offset=".025" stop-color="#02ff3d"/><stop offset=".483" stop-color="#78ff24"/><stop offset=".712" stop-color="#baff15"/><stop offset=".924" stop-color="#ffff04"/><stop offset="1" stop-color="#ffe700"/></linearGradient><linearGradient id="i241"><stop offset="0" stop-color="#00ff40"/><stop offset=".017" stop-color="#01ff3f"/><stop offset=".207" stop-color="#33ff36"/><stop offset=".471" stop-color="#7bff27"/><stop offset=".686" stop-color="#bcff18"/><stop offset=".884" stop-color="#feff09"/><stop offset="1" stop-color="#ffdc00"/></linearGradient><linearGradient id="i242"><stop offset="0" stop-color="#00ff43"/><stop offset=".016" stop-color="#01ff42"/><stop offset=".444" stop-color="#79ff2a"/><stop offset=".651" stop-color="#baff1c"/><stop offset=".841" stop-color="#fdff0d"/><stop offset="1" stop-color="#ffcf00"/></linearGradient><linearGradient id="i243"><stop offset="0" stop-color="#00ff46"/><stop offset=".015" stop-color="#00ff45"/><stop offset=".427" stop-color="#7aff2d"/><stop offset=".626" stop-color="#bcff1f"/><stop offset=".809" stop-color="#ffff10"/><stop offset=".901" stop-color="#ffdf07"/><stop offset="1" stop-color="#ffc300"/></linearGradient><linearGradient id="i244"><stop offset="0" stop-color="#00ff49"/><stop offset=".015" stop-color="#00ff48"/><stop offset=".407" stop-color="#78ff31"/><stop offset=".6" stop-color="#bbff23"/><stop offset=".778" stop-color="#feff14"/><stop offset=".889" stop-color="#ffd808"/><stop offset="1" stop-color="#ffba00"/></linearGradient><linearGradient id="i245"><stop offset="0" stop-color="#00ff4c"/><stop offset=".021" stop-color="#02ff4b"/><stop offset=".386" stop-color="#77ff35"/><stop offset=".571" stop-color="#b9ff27"/><stop offset=".743" stop-color="#feff19"/><stop offset=".871" stop-color="#ffd20a"/><stop offset="1" stop-color="#ffaf00"/></linearGradient><linearGradient id="i246"><stop offset="0" stop-color="#00ff4f"/><stop offset=".014" stop-color="#01ff4e"/><stop offset=".375" stop-color="#7aff38"/><stop offset=".542" stop-color="#b8ff2b"/><stop offset=".715" stop-color="#fffe1c"/><stop offset=".778" stop-color="#ffe514"/><stop offset=".847" stop-color="#ffce0c"/><stop offset=".972" stop-color="#ffab00"/><stop offset="1" stop-color="#ffa500"/></linearGradient><linearGradient id="i247"><stop offset="0" stop-color="#00ff52"/><stop offset=".014" stop-color="#01ff51"/><stop offset=".365" stop-color="#7aff3b"/><stop offset=".534" stop-color="#bcff2e"/><stop offset=".689" stop-color="#ffff20"/><stop offset=".757" stop-color="#ffe317"/><stop offset=".831" stop-color="#ffc90e"/><stop offset=".912" stop-color="#ffb206"/><stop offset="1" stop-color="#ff9d00"/></linearGradient><linearGradient id="i248"><stop offset="0" stop-color="#00ff55"/><stop offset=".013" stop-color="#00ff55"/><stop offset=".346" stop-color="#79ff3f"/><stop offset=".51" stop-color="#bbff32"/><stop offset=".66" stop-color="#feff25"/><stop offset=".739" stop-color="#ffde19"/><stop offset=".817" stop-color="#ffc310"/><stop offset=".902" stop-color="#ffab07"/><stop offset="1" stop-color="#ff9400"/></linearGradient><linearGradient id="i249"><stop offset="0" stop-color="#00ff59"/><stop offset=".013" stop-color="#00ff58"/><stop offset=".325" stop-color="#74ff43"/><stop offset=".478" stop-color="#b4ff38"/><stop offset=".643" stop-color="#fffe28"/><stop offset=".72" stop-color="#ffdc1c"/><stop offset=".803" stop-color="#ffbf12"/><stop offset=".898" stop-color="#ffa408"/><stop offset="1" stop-color="#ff8d00"/></linearGradient><linearGradient id="i250"><stop offset="0" stop-color="#00ff5c"/><stop offset=".019" stop-color="#02ff5b"/><stop offset=".315" stop-color="#75ff47"/><stop offset=".463" stop-color="#b5ff3b"/><stop offset=".617" stop-color="#fffe2d"/><stop offset=".698" stop-color="#ffda1f"/><stop offset=".784" stop-color="#ffbb14"/><stop offset=".883" stop-color="#ff9f09"/><stop offset="1" stop-color="#ff8500"/></linearGradient><linearGradient id="i251"><stop offset="0" stop-color="#00ff5f"/><stop offset=".012" stop-color="#01ff5e"/><stop offset=".313" stop-color="#7bff4a"/><stop offset=".458" stop-color="#bcff3e"/><stop offset=".59" stop-color="#ffff32"/><stop offset=".675" stop-color="#ffd823"/><stop offset=".771" stop-color="#ffb615"/><stop offset=".88" stop-color="#ff9809"/><stop offset="1" stop-color="#ff7e00"/></linearGradient><linearGradient id="i252"><stop offset="0" stop-color="#00ff62"/><stop offset=".012" stop-color="#01ff62"/><stop offset=".3" stop-color="#79ff4e"/><stop offset=".441" stop-color="#bbff42"/><stop offset=".571" stop-color="#feff36"/><stop offset=".665" stop-color="#ffd325"/><stop offset=".759" stop-color="#ffb217"/><stop offset=".871" stop-color="#ff930a"/><stop offset="1" stop-color="#ff7800"/></linearGradient><linearGradient id="i253"><stop offset="0" stop-color="#00ff66"/><stop offset=".011" stop-color="#00ff65"/><stop offset=".28" stop-color="#74ff53"/><stop offset=".411" stop-color="#b4ff48"/><stop offset=".554" stop-color="#fffe3a"/><stop offset=".64" stop-color="#ffd429"/><stop offset=".743" stop-color="#ffae19"/><stop offset=".863" stop-color="#ff8d0b"/><stop offset="1" stop-color="#ff7100"/></linearGradient><linearGradient id="i254"><stop offset="0" stop-color="#00ff69"/><stop offset=".011" stop-color="#00ff69"/><stop offset=".274" stop-color="#75ff56"/><stop offset=".408" stop-color="#b8ff4b"/><stop offset=".536" stop-color="#ffff3f"/><stop offset=".626" stop-color="#ffd22c"/><stop offset=".732" stop-color="#ffaa1b"/><stop offset=".855" stop-color="#ff890c"/><stop offset="1" stop-color="#ff6c00"/></linearGradient><linearGradient id="i255"><stop offset="0" stop-color="#00ff6d"/><stop offset=".016" stop-color="#02ff6c"/><stop offset=".266" stop-color="#76ff5a"/><stop offset=".397" stop-color="#baff4f"/><stop offset=".516" stop-color="#ffff44"/><stop offset=".609" stop-color="#ffcf2f"/><stop offset=".717" stop-color="#ffa71d"/><stop offset=".848" stop-color="#ff830d"/><stop offset="1" stop-color="#ff6500"/></linearGradient><linearGradient id="i256"><stop offset="0" stop-color="#00ff70"/><stop offset=".011" stop-color="#01ff70"/><stop offset=".261" stop-color="#79ff5e"/><stop offset=".383" stop-color="#bbff53"/><stop offset=".495" stop-color="#feff48"/><stop offset=".596" stop-color="#ffcb31"/><stop offset=".707" stop-color="#ffa11e"/><stop offset=".84" stop-color="#ff7e0d"/><stop offset="1" stop-color="#ff5f00"/></linearGradient><linearGradient id="i257"><stop offset="0" stop-color="#00ff74"/><stop offset=".01" stop-color="#01ff73"/><stop offset=".25" stop-color="#77ff62"/><stop offset=".365" stop-color="#b7ff58"/><stop offset=".484" stop-color="#fffe4c"/><stop offset=".531" stop-color="#ffe240"/><stop offset=".583" stop-color="#ffc934"/><stop offset=".698" stop-color="#ff9e20"/><stop offset=".833" stop-color="#ff7a0f"/><stop offset="1" stop-color="#ff5b00"/></linearGradient><linearGradient id="i258"><stop offset="0" stop-color="#00ff78"/><stop offset=".01" stop-color="#00ff77"/><stop offset=".244" stop-color="#78ff66"/><stop offset=".355" stop-color="#b8ff5d"/><stop offset=".467" stop-color="#ffff52"/><stop offset=".513" stop-color="#ffe344"/><stop offset=".563" stop-color="#ffc938"/><stop offset=".619" stop-color="#ffb12d"/><stop offset=".685" stop-color="#ff9a21"/><stop offset=".827" stop-color="#ff750f"/><stop offset="1" stop-color="#ff5500"/></linearGradient><linearGradient id="i259"><stop offset="0" stop-color="#00ff7c"/><stop offset=".01" stop-color="#00ff7b"/><stop offset=".234" stop-color="#76ff6b"/><stop offset=".348" stop-color="#baff61"/><stop offset=".453" stop-color="#feff57"/><stop offset=".507" stop-color="#ffde46"/><stop offset=".557" stop-color="#ffc43a"/><stop offset=".612" stop-color="#ffad2e"/><stop offset=".677" stop-color="#ff9723"/><stop offset=".821" stop-color="#ff7110"/><stop offset="1" stop-color="#ff5100"/></linearGradient><linearGradient id="i260"><stop offset="0" stop-color="#00ff80"/><stop offset=".015" stop-color="#02ff7f"/><stop offset=".218" stop-color="#71ff70"/><stop offset=".32" stop-color="#afff67"/><stop offset=".442" stop-color="#fffd5b"/><stop offset=".49" stop-color="#ffde4b"/><stop offset=".544" stop-color="#ffc23d"/><stop offset=".602" stop-color="#ffa930"/><stop offset=".665" stop-color="#ff9325"/><stop offset=".816" stop-color="#ff6c11"/><stop offset="1" stop-color="#ff4c00"/></linearGradient><linearGradient id="i261"><stop offset="0" stop-color="#00ff83"/><stop offset=".01" stop-color="#01ff83"/><stop offset=".219" stop-color="#78ff74"/><stop offset=".319" stop-color="#b7ff6b"/><stop offset=".424" stop-color="#fffe60"/><stop offset=".471" stop-color="#ffde50"/><stop offset=".524" stop-color="#ffc241"/><stop offset=".586" stop-color="#ffa733"/><stop offset=".652" stop-color="#ff9027"/><stop offset=".729" stop-color="#ff7a1b"/><stop offset=".81" stop-color="#ff6811"/><stop offset="1" stop-color="#ff4700"/></linearGradient><linearGradient id="i262"><stop offset="0" stop-color="#00ff87"/><stop offset=".009" stop-color="#01ff87"/><stop offset=".215" stop-color="#78ff78"/><stop offset=".318" stop-color="#bbff6f"/><stop offset=".411" stop-color="#ffff66"/><stop offset=".458" stop-color="#ffdf55"/><stop offset=".514" stop-color="#ffc044"/><stop offset=".575" stop-color="#ffa536"/><stop offset=".64" stop-color="#ff8e29"/><stop offset=".715" stop-color="#ff781d"/><stop offset=".799" stop-color="#ff6513"/><stop offset="1" stop-color="#ff4300"/></linearGradient><linearGradient id="i263"><stop offset="0" stop-color="#00ff8c"/><stop offset=".009" stop-color="#00ff8b"/><stop offset=".205" stop-color="#76ff7d"/><stop offset=".306" stop-color="#baff75"/><stop offset=".397" stop-color="#feff6c"/><stop offset=".452" stop-color="#ffda57"/><stop offset=".502" stop-color="#ffbe47"/><stop offset=".562" stop-color="#ffa339"/><stop offset=".63" stop-color="#ff8b2b"/><stop offset=".708" stop-color="#ff741e"/><stop offset=".795" stop-color="#ff6013"/><stop offset="1" stop-color="#ff3f00"/></linearGradient><linearGradient id="i264"><stop offset="0" stop-color="#00ff90"/><stop offset=".009" stop-color="#00ff8f"/><stop offset=".192" stop-color="#71ff82"/><stop offset=".281" stop-color="#afff7b"/><stop offset=".388" stop-color="#fffd70"/><stop offset=".438" stop-color="#ffda5c"/><stop offset=".491" stop-color="#ffbb4a"/><stop offset=".554" stop-color="#ff9f3a"/><stop offset=".625" stop-color="#ff862c"/><stop offset=".701" stop-color="#ff701f"/><stop offset=".79" stop-color="#ff5c13"/><stop offset="1" stop-color="#ff3b00"/></linearGradient><linearGradient id="i265"><stop offset="0" stop-color="#00ff94"/><stop offset=".013" stop-color="#02ff93"/><stop offset=".189" stop-color="#72ff87"/><stop offset=".281" stop-color="#b3ff80"/><stop offset=".377" stop-color="#fffe76"/><stop offset=".425" stop-color="#ffda61"/><stop offset=".482" stop-color="#ffb94e"/><stop offset=".544" stop-color="#ff9d3d"/><stop offset=".614" stop-color="#ff842e"/><stop offset=".693" stop-color="#ff6d21"/><stop offset=".785" stop-color="#ff5914"/><stop offset="1" stop-color="#ff3700"/></linearGradient><linearGradient id="i266"><stop offset="0" stop-color="#00ff98"/><stop offset=".009" stop-color="#01ff98"/><stop offset=".19" stop-color="#79ff8b"/><stop offset=".28" stop-color="#bcff84"/><stop offset=".362" stop-color="#ffff7c"/><stop offset=".414" stop-color="#ffd865"/><stop offset=".47" stop-color="#ffb751"/><stop offset=".534" stop-color="#ff993f"/><stop offset=".603" stop-color="#ff8130"/><stop offset=".685" stop-color="#ff6a22"/><stop offset=".776" stop-color="#ff5615"/><stop offset=".879" stop-color="#ff440a"/><stop offset="1" stop-color="#ff3300"/></linearGradient><linearGradient id="i267"><stop offset="0" stop-color="#00ff9d"/><stop offset=".008" stop-color="#01ff9c"/><stop offset=".174" stop-color="#70ff91"/><stop offset=".254" stop-color="#adff8b"/><stop offset=".352" stop-color="#feff82"/><stop offset=".356" stop-color="#fffc80"/><stop offset=".407" stop-color="#ffd568"/><stop offset=".462" stop-color="#ffb554"/><stop offset=".525" stop-color="#ff9741"/><stop offset=".597" stop-color="#ff7d31"/><stop offset=".678" stop-color="#ff6723"/><stop offset=".771" stop-color="#ff5216"/><stop offset=".877" stop-color="#ff400a"/><stop offset="1" stop-color="#ff3000"/></linearGradient><linearGradient id="i268"><stop offset="0" stop-color="#00ffa2"/><stop offset=".008" stop-color="#00ffa1"/><stop offset=".17" stop-color="#71ff96"/><stop offset=".253" stop-color="#b2ff90"/><stop offset=".344" stop-color="#fffd87"/><stop offset=".394" stop-color="#ffd66e"/><stop offset=".452" stop-color="#ffb257"/><stop offset=".515" stop-color="#ff9544"/><stop offset=".589" stop-color="#ff7a33"/><stop offset=".672" stop-color="#ff6324"/><stop offset=".768" stop-color="#ff4e16"/><stop offset=".876" stop-color="#ff3c0a"/><stop offset="1" stop-color="#ff2c00"/></linearGradient><linearGradient id="i269"><stop offset="0" stop-color="#00ffa6"/><stop offset=".012" stop-color="#03ffa6"/><stop offset=".167" stop-color="#72ff9c"/><stop offset=".248" stop-color="#b3ff95"/><stop offset=".333" stop-color="#fffe8d"/><stop offset=".382" stop-color="#ffd673"/><stop offset=".439" stop-color="#ffb25b"/><stop offset=".504" stop-color="#ff9347"/><stop offset=".577" stop-color="#ff7835"/><stop offset=".663" stop-color="#ff6025"/><stop offset=".76" stop-color="#ff4b17"/><stop offset=".87" stop-color="#ff390b"/><stop offset="1" stop-color="#ff2900"/></linearGradient><linearGradient id="i270"><stop offset="0" stop-color="#00ffab"/><stop offset=".012" stop-color="#02ffaa"/><stop offset=".164" stop-color="#73ffa1"/><stop offset=".248" stop-color="#b8ff9b"/><stop offset=".324" stop-color="#ffff94"/><stop offset=".372" stop-color="#ffd679"/><stop offset=".428" stop-color="#ffb260"/><stop offset=".492" stop-color="#ff934b"/><stop offset=".568" stop-color="#ff7638"/><stop offset=".652" stop-color="#ff5f27"/><stop offset=".752" stop-color="#ff4919"/><stop offset=".868" stop-color="#ff360b"/><stop offset="1" stop-color="#ff2600"/></linearGradient><linearGradient id="i271"><stop offset="0" stop-color="#00ffb0"/><stop offset=".008" stop-color="#02ffaf"/><stop offset=".157" stop-color="#74ffa6"/><stop offset=".228" stop-color="#b0ffa1"/><stop offset=".311" stop-color="#feff9a"/><stop offset=".315" stop-color="#fffd99"/><stop offset=".366" stop-color="#ffd17a"/><stop offset=".421" stop-color="#ffae62"/><stop offset=".488" stop-color="#ff8d4b"/><stop offset=".563" stop-color="#ff7238"/><stop offset=".65" stop-color="#ff5a27"/><stop offset=".752" stop-color="#ff4518"/><stop offset=".866" stop-color="#ff330b"/><stop offset="1" stop-color="#ff2200"/></linearGradient><linearGradient id="i272"><stop offset="0" stop-color="#00ffb5"/><stop offset=".008" stop-color="#01ffb4"/><stop offset=".155" stop-color="#74ffac"/><stop offset=".225" stop-color="#b1ffa7"/><stop offset=".306" stop-color="#fffea0"/><stop offset=".357" stop-color="#ffd180"/><stop offset=".411" stop-color="#ffad67"/><stop offset=".477" stop-color="#ff8d4f"/><stop offset=".554" stop-color="#ff703b"/><stop offset=".643" stop-color="#ff5729"/><stop offset=".744" stop-color="#ff431a"/><stop offset=".864" stop-color="#ff300c"/><stop offset="1" stop-color="#ff2000"/></linearGradient><linearGradient id="i273"><stop offset="0" stop-color="#00ffba"/><stop offset=".008" stop-color="#00ffba"/><stop offset=".148" stop-color="#72ffb2"/><stop offset=".224" stop-color="#b7ffad"/><stop offset=".297" stop-color="#ffffa7"/><stop offset=".346" stop-color="#ffd186"/><stop offset=".403" stop-color="#ffab6a"/><stop offset=".468" stop-color="#ff8b52"/><stop offset=".544" stop-color="#ff6e3d"/><stop offset=".635" stop-color="#ff552a"/><stop offset=".738" stop-color="#ff401a"/><stop offset=".859" stop-color="#ff2d0c"/><stop offset="1" stop-color="#ff1c00"/></linearGradient><linearGradient id="i274"><stop offset="0" stop-color="#00ffbf"/><stop offset=".011" stop-color="#03ffbf"/><stop offset=".146" stop-color="#73ffb8"/><stop offset=".22" stop-color="#b8ffb3"/><stop offset=".287" stop-color="#feffae"/><stop offset=".34" stop-color="#ffcf8a"/><stop offset=".396" stop-color="#ffa96d"/><stop offset=".463" stop-color="#ff8753"/><stop offset=".537" stop-color="#ff6b3e"/><stop offset=".627" stop-color="#ff522c"/><stop offset=".731" stop-color="#ff3d1b"/><stop offset=".854" stop-color="#ff2a0c"/><stop offset="1" stop-color="#ff1900"/></linearGradient><linearGradient id="i275"><stop offset="0" stop-color="#00ffc5"/><stop offset=".011" stop-color="#02ffc4"/><stop offset=".132" stop-color="#6affbe"/><stop offset=".202" stop-color="#acffba"/><stop offset=".279" stop-color="#fdffb5"/><stop offset=".283" stop-color="#fffdb3"/><stop offset=".331" stop-color="#ffcf90"/><stop offset=".39" stop-color="#ffa670"/><stop offset=".456" stop-color="#ff8556"/><stop offset=".533" stop-color="#ff6840"/><stop offset=".625" stop-color="#ff4f2c"/><stop offset=".732" stop-color="#ff391b"/><stop offset=".857" stop-color="#ff270c"/><stop offset="1" stop-color="#ff1700"/></linearGradient><linearGradient id="i276"><stop offset="0" stop-color="#00ffca"/><stop offset=".007" stop-color="#02ffca"/><stop offset=".138" stop-color="#75ffc4"/><stop offset=".203" stop-color="#b5ffc0"/><stop offset=".272" stop-color="#fffebb"/><stop offset=".319" stop-color="#ffcf96"/><stop offset=".377" stop-color="#ffa675"/><stop offset=".442" stop-color="#ff845a"/><stop offset=".522" stop-color="#ff6642"/><stop offset=".612" stop-color="#ff4d2e"/><stop offset=".721" stop-color="#ff371d"/><stop offset=".848" stop-color="#ff250d"/><stop offset="1" stop-color="#ff1400"/></linearGradient><linearGradient id="i277"><stop offset="0" stop-color="#00ffd0"/><stop offset=".007" stop-color="#01ffcf"/><stop offset=".135" stop-color="#75ffca"/><stop offset=".199" stop-color="#b7ffc7"/><stop offset=".263" stop-color="#ffffc3"/><stop offset=".31" stop-color="#ffd09c"/><stop offset=".367" stop-color="#ffa67a"/><stop offset=".434" stop-color="#ff825d"/><stop offset=".512" stop-color="#ff6445"/><stop offset=".605" stop-color="#ff4b30"/><stop offset=".715" stop-color="#ff351d"/><stop offset=".847" stop-color="#ff210d"/><stop offset="1" stop-color="#ff1100"/></linearGradient><linearGradient id="i278"><stop offset="0" stop-color="#00ffd5"/><stop offset=".007" stop-color="#00ffd5"/><stop offset=".123" stop-color="#6cffd1"/><stop offset=".193" stop-color="#b5ffce"/><stop offset=".256" stop-color="#feffca"/><stop offset=".26" stop-color="#fffcc8"/><stop offset=".284" stop-color="#ffe1b1"/><stop offset=".309" stop-color="#ffca9e"/><stop offset=".365" stop-color="#ffa17c"/><stop offset=".432" stop-color="#ff7e5e"/><stop offset=".509" stop-color="#ff6146"/><stop offset=".604" stop-color="#ff4730"/><stop offset=".712" stop-color="#ff321e"/><stop offset=".842" stop-color="#ff1f0e"/><stop offset="1" stop-color="#ff0f00"/></linearGradient><linearGradient id="i279"><stop offset="0" stop-color="#00ffdb"/><stop offset=".01" stop-color="#03ffdb"/><stop offset=".121" stop-color="#6dffd7"/><stop offset=".179" stop-color="#abffd5"/><stop offset=".248" stop-color="#fdffd2"/><stop offset=".252" stop-color="#fffdd0"/><stop offset=".276" stop-color="#ffe1b8"/><stop offset=".3" stop-color="#ffcaa4"/><stop offset=".355" stop-color="#ffa181"/><stop offset=".424" stop-color="#ff7c61"/><stop offset=".503" stop-color="#ff5e47"/><stop offset=".597" stop-color="#ff4531"/><stop offset=".71" stop-color="#ff2f1e"/><stop offset=".841" stop-color="#ff1c0e"/><stop offset="1" stop-color="#ff0c00"/></linearGradient><linearGradient id="i280"><stop offset="0" stop-color="#00ffe1"/><stop offset=".01" stop-color="#02ffe1"/><stop offset=".119" stop-color="#6effde"/><stop offset=".18" stop-color="#b1ffdc"/><stop offset=".245" stop-color="#fffed9"/><stop offset=".269" stop-color="#ffe2c0"/><stop offset=".293" stop-color="#ffcaab"/><stop offset=".347" stop-color="#ffa086"/><stop offset=".415" stop-color="#ff7c65"/><stop offset=".493" stop-color="#ff5d4b"/><stop offset=".588" stop-color="#ff4333"/><stop offset=".701" stop-color="#ff2d20"/><stop offset=".837" stop-color="#ff1a0f"/><stop offset="1" stop-color="#ff0a00"/></linearGradient><linearGradient id="i281"><stop offset="0" stop-color="#00ffe8"/><stop offset=".007" stop-color="#02ffe7"/><stop offset=".121" stop-color="#76ffe5"/><stop offset=".181" stop-color="#bbffe3"/><stop offset=".235" stop-color="#ffffe2"/><stop offset=".258" stop-color="#ffe2c8"/><stop offset=".282" stop-color="#ffcab2"/><stop offset=".309" stop-color="#ffb49d"/><stop offset=".339" stop-color="#ff9e89"/><stop offset=".406" stop-color="#ff7968"/><stop offset=".487" stop-color="#ff5a4c"/><stop offset=".584" stop-color="#ff4034"/><stop offset=".698" stop-color="#ff2a20"/><stop offset=".836" stop-color="#ff170f"/><stop offset="1" stop-color="#ff0700"/></linearGradient><linearGradient id="i282"><stop offset="0" stop-color="#00ffee"/><stop offset=".007" stop-color="#01ffee"/><stop offset=".109" stop-color="#6cffec"/><stop offset=".172" stop-color="#b5ffeb"/><stop offset=".228" stop-color="#feffea"/><stop offset=".231" stop-color="#fffce7"/><stop offset=".254" stop-color="#ffdfcc"/><stop offset=".277" stop-color="#ffc8b6"/><stop offset=".333" stop-color="#ff9b8d"/><stop offset=".399" stop-color="#ff776b"/><stop offset=".482" stop-color="#ff574d"/><stop offset=".578" stop-color="#ff3e35"/><stop offset=".693" stop-color="#ff2821"/><stop offset=".842" stop-color="#ff140e"/><stop offset="1" stop-color="#ff0500"/></linearGradient><linearGradient id="i283"><stop offset="0" stop-color="#00fff5"/><stop offset=".007" stop-color="#00fff4"/><stop offset=".107" stop-color="#6dfff4"/><stop offset=".16" stop-color="#aafff3"/><stop offset=".221" stop-color="#fdfff2"/><stop offset=".225" stop-color="#fffdf0"/><stop offset=".248" stop-color="#ffe0d4"/><stop offset=".27" stop-color="#ffc8bd"/><stop offset=".296" stop-color="#ffb1a7"/><stop offset=".326" stop-color="#ff9b92"/><stop offset=".391" stop-color="#ff766f"/><stop offset=".472" stop-color="#ff5751"/><stop offset=".57" stop-color="#ff3c37"/><stop offset=".684" stop-color="#ff2622"/><stop offset=".834" stop-color="#ff120f"/><stop offset="1" stop-color="#ff0200"/></linearGradient><linearGradient id="i284"><stop offset="0" stop-color="#00fffb"/><stop offset=".006" stop-color="#00fffb"/><stop offset=".01" stop-color="#03fffb"/><stop offset=".106" stop-color="#6dfffb"/><stop offset=".161" stop-color="#b0fffb"/><stop offset=".219" stop-color="#fffefa"/><stop offset=".241" stop-color="#ffe0dd"/><stop offset=".264" stop-color="#ffc8c5"/><stop offset=".289" stop-color="#ffb1ad"/><stop offset=".318" stop-color="#ff9b98"/><stop offset=".386" stop-color="#ff7472"/><stop offset=".466" stop-color="#ff5553"/><stop offset=".563" stop-color="#ff3a39"/><stop offset=".682" stop-color="#ff2423"/><stop offset=".83" stop-color="#ff1010"/><stop offset="1" stop-color="#ff0000"/></linearGradient><linearGradient id="i285"><stop offset="0" stop-color="#00fcff"/><stop offset=".01" stop-color="#02fcff"/><stop offset=".106" stop-color="#6dfbff"/><stop offset=".165" stop-color="#b4fbff"/><stop offset=".219" stop-color="#fffaff"/><stop offset=".242" stop-color="#ffdde1"/><stop offset=".265" stop-color="#ffc5c9"/><stop offset=".29" stop-color="#ffaeb1"/><stop offset=".319" stop-color="#ff989b"/><stop offset=".387" stop-color="#ff7275"/><stop offset=".468" stop-color="#ff5355"/><stop offset=".565" stop-color="#ff393b"/><stop offset=".684" stop-color="#ff2225"/><stop offset=".835" stop-color="#ff0f11"/><stop offset="1" stop-color="#ff0001"/></linearGradient><linearGradient id="i286"><stop offset="0" stop-color="#00f5ff"/><stop offset=".007" stop-color="#02f5ff"/><stop offset=".115" stop-color="#76f4ff"/><stop offset=".17" stop-color="#b8f3ff"/><stop offset=".223" stop-color="#fef2ff"/><stop offset=".246" stop-color="#ffd6e2"/><stop offset=".269" stop-color="#ffbfca"/><stop offset=".295" stop-color="#ffa8b3"/><stop offset=".325" stop-color="#ff939d"/><stop offset=".39" stop-color="#ff7078"/><stop offset=".472" stop-color="#ff5158"/><stop offset=".567" stop-color="#ff383e"/><stop offset=".685" stop-color="#ff2227"/><stop offset=".836" stop-color="#ff0f13"/><stop offset="1" stop-color="#ff0003"/></linearGradient><linearGradient id="i287"><stop offset="0" stop-color="#00efff"/><stop offset=".007" stop-color="#01eeff"/><stop offset=".11" stop-color="#6cecff"/><stop offset=".173" stop-color="#b5ebff"/><stop offset=".229" stop-color="#fee9ff"/><stop offset=".233" stop-color="#ffe7fc"/><stop offset=".256" stop-color="#ffccdf"/><stop offset=".279" stop-color="#ffb6c8"/><stop offset=".336" stop-color="#ff8c9c"/><stop offset=".402" stop-color="#ff6b77"/><stop offset=".482" stop-color="#ff4e59"/><stop offset=".578" stop-color="#ff353f"/><stop offset=".694" stop-color="#ff2129"/><stop offset=".844" stop-color="#ff0e15"/><stop offset="1" stop-color="#ff0006"/></linearGradient><linearGradient id="i288"><stop offset="0" stop-color="#00e8ff"/><stop offset=".007" stop-color="#00e8ff"/><stop offset=".114" stop-color="#6de5ff"/><stop offset=".172" stop-color="#ade4ff"/><stop offset=".236" stop-color="#fde1ff"/><stop offset=".239" stop-color="#ffdffd"/><stop offset=".263" stop-color="#ffc5e0"/><stop offset=".286" stop-color="#ffb0c9"/><stop offset=".34" stop-color="#ff8a9f"/><stop offset=".407" stop-color="#ff687a"/><stop offset=".488" stop-color="#ff4c5b"/><stop offset=".582" stop-color="#ff3442"/><stop offset=".697" stop-color="#ff202c"/><stop offset=".848" stop-color="#ff0d17"/><stop offset="1" stop-color="#ff0008"/></linearGradient><linearGradient id="i289"><stop offset="0" stop-color="#00e2ff"/><stop offset=".01" stop-color="#03e2ff"/><stop offset=".116" stop-color="#6bdeff"/><stop offset=".177" stop-color="#aedcff"/><stop offset=".246" stop-color="#ffd8fd"/><stop offset=".27" stop-color="#ffbfe1"/><stop offset=".294" stop-color="#ffaaca"/><stop offset=".348" stop-color="#ff85a0"/><stop offset=".416" stop-color="#ff657c"/><stop offset=".495" stop-color="#ff4a5e"/><stop offset=".59" stop-color="#ff3344"/><stop offset=".703" stop-color="#ff1f2e"/><stop offset=".853" stop-color="#ff0d19"/><stop offset="1" stop-color="#ff000a"/></linearGradient><linearGradient id="i290"><stop offset="0" stop-color="#00dcff"/><stop offset=".007" stop-color="#02dcff"/><stop offset=".129" stop-color="#77d7ff"/><stop offset=".188" stop-color="#b6d5ff"/><stop offset=".251" stop-color="#ffd1fe"/><stop offset=".275" stop-color="#ffb9e2"/><stop offset=".3" stop-color="#ffa5cb"/><stop offset=".355" stop-color="#ff81a2"/><stop offset=".422" stop-color="#ff627e"/><stop offset=".502" stop-color="#ff4860"/><stop offset=".596" stop-color="#ff3246"/><stop offset=".707" stop-color="#ff1f31"/><stop offset=".84" stop-color="#ff0e1e"/><stop offset="1" stop-color="#ff000d"/></linearGradient><linearGradient id="i291"><stop offset="0" stop-color="#00d6ff"/><stop offset=".007" stop-color="#01d6ff"/><stop offset=".131" stop-color="#74d1ff"/><stop offset=".194" stop-color="#b6ceff"/><stop offset=".258" stop-color="#ffc9fe"/><stop offset=".283" stop-color="#ffb2e3"/><stop offset=".307" stop-color="#ff9fcc"/><stop offset=".364" stop-color="#ff7ca3"/><stop offset=".431" stop-color="#ff5f80"/><stop offset=".509" stop-color="#ff4662"/><stop offset=".604" stop-color="#ff3048"/><stop offset=".714" stop-color="#ff1e33"/><stop offset=".845" stop-color="#ff0e20"/><stop offset="1" stop-color="#ff0010"/></linearGradient><linearGradient id="i292"><stop offset="0" stop-color="#00d0ff"/><stop offset=".007" stop-color="#01d0ff"/><stop offset=".136" stop-color="#75caff"/><stop offset=".204" stop-color="#bac6ff"/><stop offset=".265" stop-color="#ffc3ff"/><stop offset=".312" stop-color="#ff9cd0"/><stop offset=".369" stop-color="#ff7aa6"/><stop offset=".437" stop-color="#ff5c82"/><stop offset=".516" stop-color="#ff4465"/><stop offset=".609" stop-color="#ff2f4b"/><stop offset=".717" stop-color="#ff1d36"/><stop offset=".846" stop-color="#ff0d23"/><stop offset="1" stop-color="#ff0012"/></linearGradient><linearGradient id="i293"><stop offset="0" stop-color="#00cbff"/><stop offset=".007" stop-color="#00caff"/><stop offset=".138" stop-color="#73c4ff"/><stop offset=".207" stop-color="#b7c0ff"/><stop offset=".273" stop-color="#febbff"/><stop offset=".324" stop-color="#ff94ce"/><stop offset=".378" stop-color="#ff75a7"/><stop offset=".444" stop-color="#ff5a85"/><stop offset=".524" stop-color="#ff4267"/><stop offset=".615" stop-color="#ff2e4e"/><stop offset=".724" stop-color="#ff1c38"/><stop offset=".851" stop-color="#ff0d25"/><stop offset="1" stop-color="#ff0015"/></linearGradient><linearGradient id="i294"><stop offset="0" stop-color="#00c5ff"/><stop offset=".011" stop-color="#03c5ff"/><stop offset=".133" stop-color="#6abeff"/><stop offset=".21" stop-color="#b4b9ff"/><stop offset=".28" stop-color="#feb4ff"/><stop offset=".284" stop-color="#ffb2fc"/><stop offset=".332" stop-color="#ff8fcf"/><stop offset=".387" stop-color="#ff71a8"/><stop offset=".454" stop-color="#ff5786"/><stop offset=".531" stop-color="#ff4069"/><stop offset=".624" stop-color="#ff2c50"/><stop offset=".731" stop-color="#ff1b3a"/><stop offset=".856" stop-color="#ff0c28"/><stop offset="1" stop-color="#ff0018"/></linearGradient><linearGradient id="i295"><stop offset="0" stop-color="#00c0ff"/><stop offset=".008" stop-color="#02bfff"/><stop offset=".143" stop-color="#72b8ff"/><stop offset=".208" stop-color="#adb3ff"/><stop offset=".287" stop-color="#fdaeff"/><stop offset=".291" stop-color="#ffacfd"/><stop offset=".34" stop-color="#ff8ad0"/><stop offset=".396" stop-color="#ff6da9"/><stop offset=".464" stop-color="#ff5387"/><stop offset=".54" stop-color="#ff3e6c"/><stop offset=".63" stop-color="#ff2b53"/><stop offset=".736" stop-color="#ff1b3d"/><stop offset=".857" stop-color="#ff0c2b"/><stop offset="1" stop-color="#ff001b"/></linearGradient><linearGradient id="i296"><stop offset="0" stop-color="#00baff"/><stop offset=".008" stop-color="#01baff"/><stop offset=".149" stop-color="#73b2ff"/><stop offset=".218" stop-color="#b1adff"/><stop offset=".299" stop-color="#ffa5fd"/><stop offset=".349" stop-color="#ff85d0"/><stop offset=".406" stop-color="#ff69aa"/><stop offset=".471" stop-color="#ff518a"/><stop offset=".548" stop-color="#ff3c6e"/><stop offset=".636" stop-color="#ff2a56"/><stop offset=".739" stop-color="#ff1a40"/><stop offset=".858" stop-color="#ff0c2e"/><stop offset="1" stop-color="#ff001d"/></linearGradient><linearGradient id="i297"><stop offset="0" stop-color="#00b5ff"/><stop offset=".008" stop-color="#01b5ff"/><stop offset=".156" stop-color="#74acff"/><stop offset=".226" stop-color="#b1a7ff"/><stop offset=".307" stop-color="#ff9ffe"/><stop offset=".358" stop-color="#ff80d1"/><stop offset=".412" stop-color="#ff66ae"/><stop offset=".479" stop-color="#ff4f8d"/><stop offset=".556" stop-color="#ff3a70"/><stop offset=".646" stop-color="#ff2858"/><stop offset=".747" stop-color="#ff1943"/><stop offset=".864" stop-color="#ff0b31"/><stop offset="1" stop-color="#ff0020"/></linearGradient><linearGradient id="i298"><stop offset="0" stop-color="#00b0ff"/><stop offset=".008" stop-color="#00b0ff"/><stop offset=".158" stop-color="#72a6ff"/><stop offset=".237" stop-color="#b5a0ff"/><stop offset=".316" stop-color="#ff99fe"/><stop offset=".368" stop-color="#ff7bd2"/><stop offset=".423" stop-color="#ff62af"/><stop offset=".486" stop-color="#ff4c90"/><stop offset=".561" stop-color="#ff3974"/><stop offset=".648" stop-color="#ff285c"/><stop offset=".751" stop-color="#ff1846"/><stop offset=".866" stop-color="#ff0b34"/><stop offset="1" stop-color="#ff0023"/></linearGradient><linearGradient id="i299"><stop offset="0" stop-color="#00abff"/><stop offset=".012" stop-color="#02abff"/><stop offset=".165" stop-color="#73a1ff"/><stop offset=".245" stop-color="#b69aff"/><stop offset=".325" stop-color="#ff93ff"/><stop offset=".373" stop-color="#ff78d6"/><stop offset=".43" stop-color="#ff5fb2"/><stop offset=".494" stop-color="#ff4a93"/><stop offset=".57" stop-color="#ff3776"/><stop offset=".655" stop-color="#ff275f"/><stop offset=".755" stop-color="#ff1849"/><stop offset=".867" stop-color="#ff0b37"/><stop offset="1" stop-color="#ff0026"/></linearGradient><linearGradient id="i300"><stop offset="0" stop-color="#00a6ff"/><stop offset=".008" stop-color="#02a6ff"/><stop offset=".177" stop-color="#7b9bff"/><stop offset=".259" stop-color="#bd94ff"/><stop offset=".333" stop-color="#ff8dff"/><stop offset=".383" stop-color="#ff73d7"/><stop offset=".44" stop-color="#ff5bb3"/><stop offset=".506" stop-color="#ff4794"/><stop offset=".58" stop-color="#ff3579"/><stop offset=".667" stop-color="#ff2561"/><stop offset=".761" stop-color="#ff174d"/><stop offset=".872" stop-color="#ff0b3a"/><stop offset="1" stop-color="#ff002a"/></linearGradient><linearGradient id="i301"><stop offset="0" stop-color="#00a2ff"/><stop offset=".008" stop-color="#01a1ff"/><stop offset=".18" stop-color="#7895ff"/><stop offset=".264" stop-color="#ba8fff"/><stop offset=".343" stop-color="#fe87ff"/><stop offset=".393" stop-color="#ff6ed8"/><stop offset=".448" stop-color="#ff59b6"/><stop offset=".51" stop-color="#ff4598"/><stop offset=".586" stop-color="#ff337d"/><stop offset=".669" stop-color="#ff2465"/><stop offset=".766" stop-color="#ff1650"/><stop offset=".874" stop-color="#ff0a3e"/><stop offset="1" stop-color="#ff002d"/></linearGradient><linearGradient id="i302"><stop offset="0" stop-color="#009dff"/><stop offset=".009" stop-color="#019dff"/><stop offset=".174" stop-color="#7091ff"/><stop offset=".255" stop-color="#ad8bff"/><stop offset=".353" stop-color="#fe81ff"/><stop offset=".357" stop-color="#ff80fd"/><stop offset=".409" stop-color="#ff67d5"/><stop offset=".464" stop-color="#ff53b5"/><stop offset=".528" stop-color="#ff4197"/><stop offset=".6" stop-color="#ff317e"/><stop offset=".681" stop-color="#ff2267"/><stop offset=".774" stop-color="#ff1553"/><stop offset=".881" stop-color="#ff0a41"/><stop offset="1" stop-color="#ff0031"/></linearGradient><linearGradient id="i303"><stop offset="0" stop-color="#0099ff"/><stop offset=".009" stop-color="#0098ff"/><stop offset=".182" stop-color="#718cff"/><stop offset=".268" stop-color="#b085ff"/><stop offset=".368" stop-color="#ff7afd"/><stop offset=".416" stop-color="#ff65d9"/><stop offset=".472" stop-color="#ff51b8"/><stop offset=".537" stop-color="#ff3e9a"/><stop offset=".606" stop-color="#ff2f81"/><stop offset=".688" stop-color="#ff216a"/><stop offset=".779" stop-color="#ff1556"/><stop offset=".883" stop-color="#ff0944"/><stop offset="1" stop-color="#ff0034"/></linearGradient><linearGradient id="i304"><stop offset="0" stop-color="#0094ff"/><stop offset=".013" stop-color="#0294ff"/><stop offset=".186" stop-color="#6f87ff"/><stop offset=".279" stop-color="#b17fff"/><stop offset=".381" stop-color="#ff75fe"/><stop offset=".429" stop-color="#ff60da"/><stop offset=".482" stop-color="#ff4ebb"/><stop offset=".544" stop-color="#ff3d9f"/><stop offset=".615" stop-color="#ff2e85"/><stop offset=".695" stop-color="#ff206f"/><stop offset=".783" stop-color="#ff145b"/><stop offset=".885" stop-color="#ff0949"/><stop offset="1" stop-color="#ff0038"/></linearGradient><linearGradient id="i305"><stop offset="0" stop-color="#0090ff"/><stop offset=".009" stop-color="#028fff"/><stop offset=".204" stop-color="#7981ff"/><stop offset=".294" stop-color="#b879ff"/><stop offset=".389" stop-color="#ff70fe"/><stop offset=".439" stop-color="#ff5cdb"/><stop offset=".493" stop-color="#ff4abc"/><stop offset=".557" stop-color="#ff3aa0"/><stop offset=".624" stop-color="#ff2c88"/><stop offset=".701" stop-color="#ff1f72"/><stop offset=".792" stop-color="#ff135e"/><stop offset="1" stop-color="#ff003c"/></linearGradient><linearGradient id="i306"><stop offset="0" stop-color="#008cff"/><stop offset=".009" stop-color="#018bff"/><stop offset=".207" stop-color="#777dff"/><stop offset=".304" stop-color="#b874ff"/><stop offset=".401" stop-color="#ff6bff"/><stop offset=".447" stop-color="#ff59de"/><stop offset=".502" stop-color="#ff47bf"/><stop offset=".562" stop-color="#ff38a4"/><stop offset=".631" stop-color="#ff2b8c"/><stop offset=".71" stop-color="#ff1e75"/><stop offset=".793" stop-color="#ff1362"/><stop offset="1" stop-color="#ff0040"/></linearGradient><linearGradient id="i307"><stop offset="0" stop-color="#0088ff"/><stop offset=".009" stop-color="#0087ff"/><stop offset=".216" stop-color="#7878ff"/><stop offset=".319" stop-color="#bb6fff"/><stop offset=".413" stop-color="#ff65ff"/><stop offset=".46" stop-color="#ff54df"/><stop offset=".516" stop-color="#ff44c0"/><stop offset=".577" stop-color="#ff35a5"/><stop offset=".643" stop-color="#ff288e"/><stop offset=".718" stop-color="#ff1d79"/><stop offset=".803" stop-color="#ff1265"/><stop offset="1" stop-color="#ff0044"/></linearGradient><linearGradient id="i308"><stop offset="0" stop-color="#0084ff"/><stop offset=".01" stop-color="#0083ff"/><stop offset=".22" stop-color="#7674ff"/><stop offset=".325" stop-color="#b86aff"/><stop offset=".426" stop-color="#fe60ff"/><stop offset=".478" stop-color="#ff4edd"/><stop offset=".531" stop-color="#ff40c1"/><stop offset=".589" stop-color="#ff33a8"/><stop offset=".656" stop-color="#ff2691"/><stop offset=".727" stop-color="#ff1b7c"/><stop offset=".809" stop-color="#ff1169"/><stop offset="1" stop-color="#ff0048"/></linearGradient><linearGradient id="i309"><stop offset="0" stop-color="#0080ff"/><stop offset=".015" stop-color="#027fff"/><stop offset=".225" stop-color="#746fff"/><stop offset=".338" stop-color="#b965ff"/><stop offset=".441" stop-color="#fe5bff"/><stop offset=".495" stop-color="#ff4ade"/><stop offset=".544" stop-color="#ff3dc4"/><stop offset=".603" stop-color="#ff30ab"/><stop offset=".667" stop-color="#ff2595"/><stop offset=".819" stop-color="#ff106d"/><stop offset="1" stop-color="#ff004d"/></linearGradient><linearGradient id="i310"><stop offset="0" stop-color="#007bff"/><stop offset=".01" stop-color="#027bff"/><stop offset=".231" stop-color="#756bff"/><stop offset=".332" stop-color="#b062ff"/><stop offset=".457" stop-color="#ff55fd"/><stop offset=".508" stop-color="#ff46de"/><stop offset=".558" stop-color="#ff39c5"/><stop offset=".613" stop-color="#ff2eae"/><stop offset=".678" stop-color="#ff2297"/><stop offset=".824" stop-color="#ff0f71"/><stop offset="1" stop-color="#ff0052"/></linearGradient><linearGradient id="i311"><stop offset="0" stop-color="#0078ff"/><stop offset=".01" stop-color="#0177ff"/><stop offset=".241" stop-color="#7666ff"/><stop offset=".349" stop-color="#b35dff"/><stop offset=".472" stop-color="#ff50fd"/><stop offset=".518" stop-color="#ff43e2"/><stop offset=".569" stop-color="#ff37c8"/><stop offset=".626" stop-color="#ff2bb1"/><stop offset=".687" stop-color="#ff219b"/><stop offset=".831" stop-color="#ff0e76"/><stop offset="1" stop-color="#ff0057"/></linearGradient><linearGradient id="i312"><stop offset="0" stop-color="#0074ff"/><stop offset=".01" stop-color="#0073ff"/><stop offset=".246" stop-color="#7462ff"/><stop offset=".361" stop-color="#b358ff"/><stop offset=".487" stop-color="#ff4cfe"/><stop offset=".534" stop-color="#ff3fe2"/><stop offset=".581" stop-color="#ff34cb"/><stop offset=".696" stop-color="#ff209f"/><stop offset=".832" stop-color="#ff0e7b"/><stop offset="1" stop-color="#ff005c"/></linearGradient><linearGradient id="i313"><stop offset="0" stop-color="#0070ff"/><stop offset=".011" stop-color="#0070ff"/><stop offset=".257" stop-color="#755eff"/><stop offset=".38" stop-color="#b753ff"/><stop offset=".503" stop-color="#ff47fe"/><stop offset=".551" stop-color="#ff3be3"/><stop offset=".599" stop-color="#ff30cc"/><stop offset=".711" stop-color="#ff1da2"/><stop offset=".845" stop-color="#ff0d7e"/><stop offset="1" stop-color="#ff0061"/></linearGradient><linearGradient id="i314"><stop offset="0" stop-color="#006dff"/><stop offset=".016" stop-color="#026cff"/><stop offset=".264" stop-color="#735aff"/><stop offset=".396" stop-color="#b74fff"/><stop offset=".522" stop-color="#ff42ff"/><stop offset=".615" stop-color="#ff2ecf"/><stop offset=".72" stop-color="#ff1ca8"/><stop offset=".846" stop-color="#ff0d86"/><stop offset="1" stop-color="#ff0067"/></linearGradient><linearGradient id="i315"><stop offset="0" stop-color="#0069ff"/><stop offset=".011" stop-color="#0168ff"/><stop offset=".282" stop-color="#7a55ff"/><stop offset=".412" stop-color="#ba4aff"/><stop offset=".537" stop-color="#ff3eff"/><stop offset=".627" stop-color="#ff2bd2"/><stop offset=".734" stop-color="#ff1aab"/><stop offset=".859" stop-color="#ff0b89"/><stop offset="1" stop-color="#ff006d"/></linearGradient><linearGradient id="i316"><stop offset="0" stop-color="#0066ff"/><stop offset=".012" stop-color="#0165ff"/><stop offset=".295" stop-color="#7b51ff"/><stop offset=".428" stop-color="#bb46ff"/><stop offset=".555" stop-color="#fe39ff"/><stop offset=".647" stop-color="#ff27d3"/><stop offset=".746" stop-color="#ff18af"/><stop offset=".861" stop-color="#ff0b8f"/><stop offset="1" stop-color="#ff0073"/></linearGradient><linearGradient id="i317"><stop offset="0" stop-color="#0062ff"/><stop offset=".012" stop-color="#0061ff"/><stop offset=".302" stop-color="#794dff"/><stop offset=".444" stop-color="#bb41ff"/><stop offset=".574" stop-color="#fe35ff"/><stop offset=".669" stop-color="#ff24d4"/><stop offset=".763" stop-color="#ff16b2"/><stop offset=".876" stop-color="#ff0993"/><stop offset="1" stop-color="#ff0079"/></linearGradient><linearGradient id="i318"><stop offset="0" stop-color="#005fff"/><stop offset=".012" stop-color="#005eff"/><stop offset=".303" stop-color="#744aff"/><stop offset=".442" stop-color="#b23fff"/><stop offset=".6" stop-color="#ff30fd"/><stop offset=".685" stop-color="#ff21d7"/><stop offset=".776" stop-color="#ff14b6"/><stop offset=".879" stop-color="#ff099a"/><stop offset="1" stop-color="#ff0080"/></linearGradient><linearGradient id="i319"><stop offset="0" stop-color="#005cff"/><stop offset=".019" stop-color="#025bff"/><stop offset=".312" stop-color="#7347ff"/><stop offset=".463" stop-color="#b33bff"/><stop offset=".625" stop-color="#ff2cfe"/><stop offset=".7" stop-color="#ff1fdc"/><stop offset=".787" stop-color="#ff13bd"/><stop offset=".887" stop-color="#ff08a1"/><stop offset="1" stop-color="#ff0088"/></linearGradient><linearGradient id="i320"><stop offset="0" stop-color="#0058ff"/><stop offset=".013" stop-color="#0157ff"/><stop offset=".335" stop-color="#7942ff"/><stop offset=".49" stop-color="#b936ff"/><stop offset=".645" stop-color="#ff27fe"/><stop offset=".723" stop-color="#ff1bdd"/><stop offset=".806" stop-color="#ff11c0"/><stop offset=".897" stop-color="#ff07a6"/><stop offset="1" stop-color="#ff008f"/></linearGradient><linearGradient id="i321"><stop offset="0" stop-color="#0055ff"/><stop offset=".013" stop-color="#0154ff"/><stop offset=".351" stop-color="#793eff"/><stop offset=".51" stop-color="#b932ff"/><stop offset=".669" stop-color="#ff23ff"/><stop offset=".742" stop-color="#ff19e0"/><stop offset=".821" stop-color="#ff0fc5"/><stop offset=".974" stop-color="#ff009c"/><stop offset="1" stop-color="#ff0097"/></linearGradient><linearGradient id="i322"><stop offset="0" stop-color="#0052ff"/><stop offset=".014" stop-color="#0051ff"/><stop offset=".361" stop-color="#783bff"/><stop offset=".531" stop-color="#b92eff"/><stop offset=".694" stop-color="#ff1fff"/><stop offset=".762" stop-color="#ff16e3"/><stop offset=".837" stop-color="#ff0dc9"/><stop offset=".966" stop-color="#ff00a6"/><stop offset="1" stop-color="#ff009f"/></linearGradient><linearGradient id="i323"><stop offset="0" stop-color="#004fff"/><stop offset=".014" stop-color="#004eff"/><stop offset=".378" stop-color="#7937ff"/><stop offset=".552" stop-color="#b92aff"/><stop offset=".72" stop-color="#fe1bff"/><stop offset=".853" stop-color="#ff0bce"/><stop offset=".965" stop-color="#ff00b0"/><stop offset="1" stop-color="#ff00a7"/></linearGradient><linearGradient id="i324"><stop offset="0" stop-color="#004cff"/><stop offset=".022" stop-color="#024bff"/><stop offset=".391" stop-color="#7734ff"/><stop offset=".58" stop-color="#ba26ff"/><stop offset=".754" stop-color="#fe17ff"/><stop offset=".877" stop-color="#ff09d4"/><stop offset="1" stop-color="#ff00b2"/></linearGradient><linearGradient id="i325"><stop offset="0" stop-color="#0049ff"/><stop offset=".015" stop-color="#0148ff"/><stop offset=".414" stop-color="#7a30ff"/><stop offset=".602" stop-color="#ba22ff"/><stop offset=".782" stop-color="#fe13ff"/><stop offset=".895" stop-color="#ff07d9"/><stop offset=".97" stop-color="#ff00c3"/><stop offset="1" stop-color="#ff00bc"/></linearGradient><linearGradient id="i326"><stop offset="0" stop-color="#0046ff"/><stop offset=".016" stop-color="#0145ff"/><stop offset=".434" stop-color="#7b2cff"/><stop offset=".628" stop-color="#ba1fff"/><stop offset=".814" stop-color="#fd0fff"/><stop offset=".961" stop-color="#ff01d0"/><stop offset="1" stop-color="#ff00c6"/></linearGradient><linearGradient id="i327"><stop offset="0" stop-color="#0043ff"/><stop offset=".016" stop-color="#0042ff"/><stop offset=".448" stop-color="#7929ff"/><stop offset=".656" stop-color="#ba1bff"/><stop offset=".848" stop-color="#fd0bff"/><stop offset=".96" stop-color="#ff00dc"/><stop offset="1" stop-color="#ff00d1"/></linearGradient><linearGradient id="i328"><stop offset="0" stop-color="#0040ff"/><stop offset=".017" stop-color="#003fff"/><stop offset=".463" stop-color="#7826ff"/><stop offset=".678" stop-color="#b818ff"/><stop offset=".884" stop-color="#fd07ff"/><stop offset=".893" stop-color="#ff07ff"/><stop offset=".959" stop-color="#ff00e9"/><stop offset="1" stop-color="#ff00dd"/></linearGradient><linearGradient id="i329"><stop offset="0" stop-color="#003dff"/><stop offset=".026" stop-color="#023cff"/><stop offset=".483" stop-color="#7624ff"/><stop offset=".716" stop-color="#b814ff"/><stop offset=".94" stop-color="#ff03ff"/><stop offset="1" stop-color="#ff00ec"/></linearGradient><linearGradient id="i330"><stop offset="0" stop-color="#003aff"/><stop offset=".018" stop-color="#0139ff"/><stop offset=".477" stop-color="#7022ff"/><stop offset=".739" stop-color="#b611ff"/><stop offset=".982" stop-color="#ff00ff"/><stop offset="1" stop-color="#ff00fa"/></linearGradient><linearGradient id="i331"><stop offset="0" stop-color="#0038ff"/><stop offset=".019" stop-color="#0137ff"/><stop offset=".533" stop-color="#771dff"/><stop offset=".776" stop-color="#b60eff"/><stop offset=".963" stop-color="#eb00ff"/><stop offset="1" stop-color="#f600ff"/></linearGradient><linearGradient id="i332"><stop offset="0" stop-color="#0035ff"/><stop offset=".019" stop-color="#0034ff"/><stop offset=".524" stop-color="#6f1cff"/><stop offset=".767" stop-color="#aa0dff"/><stop offset=".951" stop-color="#db00ff"/><stop offset="1" stop-color="#e800ff"/></linearGradient><linearGradient id="i333"><stop offset="0" stop-color="#0032ff"/><stop offset=".02" stop-color="#0032ff"/><stop offset=".51" stop-color="#651bff"/><stop offset=".765" stop-color="#9e0dff"/><stop offset="1" stop-color="#d800ff"/></linearGradient><linearGradient id="i334"><stop offset="0" stop-color="#0030ff"/><stop offset=".032" stop-color="#022fff"/><stop offset=".5" stop-color="#5d1aff"/><stop offset=".755" stop-color="#930dff"/><stop offset=".957" stop-color="#c100ff"/><stop offset="1" stop-color="#cb00ff"/></linearGradient><linearGradient id="i335"><stop offset="0" stop-color="#002dff"/><stop offset=".022" stop-color="#012cff"/><stop offset=".517" stop-color="#5c17ff"/><stop offset=".955" stop-color="#b500ff"/><stop offset="1" stop-color="#bf00ff"/></linearGradient><linearGradient id="i336"><stop offset="0" stop-color="#002aff"/><stop offset=".024" stop-color="#012aff"/><stop offset=".506" stop-color="#5416ff"/><stop offset=".953" stop-color="#a900ff"/><stop offset="1" stop-color="#b300ff"/></linearGradient><linearGradient id="i337"><stop offset="0" stop-color="#0028ff"/><stop offset=".025" stop-color="#0027ff"/><stop offset=".481" stop-color="#4b16ff"/><stop offset=".938" stop-color="#9b00ff"/><stop offset="1" stop-color="#a700ff"/></linearGradient><linearGradient id="i338"><stop offset="0" stop-color="#0026ff"/><stop offset=".026" stop-color="#0025ff"/><stop offset=".461" stop-color="#4215ff"/><stop offset="1" stop-color="#9900ff"/></linearGradient><linearGradient id="i339"><stop offset="0" stop-color="#0023ff"/><stop offset=".042" stop-color="#0122ff"/><stop offset=".417" stop-color="#3715ff"/><stop offset="1" stop-color="#8f00ff"/></linearGradient><linearGradient id="i340"><stop offset="0" stop-color="#0021ff"/><stop offset=".03" stop-color="#0120ff"/><stop offset=".463" stop-color="#3a12ff"/><stop offset=".94" stop-color="#7c00ff"/><stop offset="1" stop-color="#8400ff"/></linearGradient><linearGradient id="i341"><stop offset="0" stop-color="#001eff"/><stop offset=".032" stop-color="#011dff"/><stop offset="1" stop-color="#7a00ff"/></linearGradient><linearGradient id="i342"><stop offset="0" stop-color="#001cff"/><stop offset=".034" stop-color="#001bff"/><stop offset=".915" stop-color="#6600ff"/><stop offset="1" stop-color="#7000ff"/></linearGradient><linearGradient id="i343"><stop offset="0" stop-color="#001aff"/><stop offset=".056" stop-color="#0218ff"/><stop offset="1" stop-color="#6500ff"/></linearGradient><linearGradient id="i344"><stop offset="0" stop-color="#0017ff"/><stop offset=".06" stop-color="#0116ff"/><stop offset="1" stop-color="#5b00ff"/></linearGradient><linearGradient id="i345"><stop offset="0" stop-color="#0015ff"/><stop offset=".044" stop-color="#0114ff"/><stop offset="1" stop-color="#5200ff"/></linearGradient><linearGradient id="i346"><stop offset="0" stop-color="#0013ff"/><stop offset=".049" stop-color="#0012ff"/><stop offset="1" stop-color="#4a00ff"/></linearGradient><linearGradient id="i347"><stop offset="0" stop-color="#0010ff"/><stop offset=".054" stop-color="#0010ff"/><stop offset="1" stop-color="#4100ff"/></linearGradient><linearGradient id="i348"><stop offset="0" stop-color="#000eff"/><stop offset=".094" stop-color="#020dff"/><stop offset="1" stop-color="#3700ff"/></linearGradient><linearGradient id="i349"><stop offset="0" stop-color="#000cff"/><stop offset=".107" stop-color="#010bff"/><stop offset="1" stop-color="#2f00ff"/></linearGradient><linearGradient id="i350"><stop offset="0" stop-color="#000aff"/><stop offset=".087" stop-color="#0109ff"/><stop offset="1" stop-color="#2700ff"/></linearGradient><linearGradient id="i351"><stop offset="0" stop-color="#0008ff"/><stop offset=".105" stop-color="#0007ff"/><stop offset="1" stop-color="#1f00ff"/></linearGradient><linearGradient id="i352"><stop offset="0" stop-color="#0005ff"/><stop offset=".133" stop-color="#0004ff"/><stop offset="1" stop-color="#1800ff"/></linearGradient><linearGradient id="i353"><stop offset="0" stop-color="#0003ff"/><stop offset=".2" stop-color="#0002ff"/><stop offset="1" stop-color="#0e00ff"/></linearGradient><linearGradient id="i354"><stop offset="0" stop-color="#0001ff"/><stop offset="1" stop-color="#0600ff"/></linearGradient><linearGradient id="p355"><stop offset="0" stop-color="#569900"/><stop offset=".785" stop-color="#999900"/><stop offset="1" stop-color="#998700"/></linearGradient><linearGradient id="p356"><stop offset="0" stop-color="#579900"/><stop offset=".775" stop-color="#999900"/><stop offset="1" stop-color="#998600"/></linearGradient><linearGradient id="p357"><stop offset="0" stop-color="#589900"/><stop offset=".766" stop-color="#999900"/><stop offset="1" stop-color="#998500"/></linearGradient><linearGradient id="p358"><stop offset="0" stop-color="#589900"/><stop offset=".751" stop-color="#999900"/><stop offset="1" stop-color="#998500"/></linearGradient><linearGradient id="p359"><stop offset="0" stop-color="#599900"/><stop offset=".742" stop-color="#999900"/><stop offset="1" stop-color="#998400"/></linearGradient><linearGradient id="p360"><stop offset="0" stop-color="#5a9900"/><stop offset=".732" stop-color="#999900"/><stop offset="1" stop-color="#998300"/></linearGradient><linearGradient id="p361"><stop offset="0" stop-color="#5b9900"/><stop offset=".718" stop-color="#999900"/><stop offset="1" stop-color="#998200"/></linearGradient><linearGradient id="p362"><stop offset="0" stop-color="#5b9901"/><stop offset=".708" stop-color="#999900"/><stop offset="1" stop-color="#998100"/></linearGradient><linearGradient id="p363"><stop offset="0" stop-color="#5c9902"/><stop offset=".699" stop-color="#999900"/><stop offset="1" stop-color="#998000"/></linearGradient><linearGradient id="p364"><stop offset="0" stop-color="#5d9902"/><stop offset=".684" stop-color="#999900"/><stop offset="1" stop-color="#997f00"/></linearGradient><linearGradient id="p365"><stop offset="0" stop-color="#5e9903"/><stop offset=".675" stop-color="#999900"/><stop offset="1" stop-color="#997e00"/></linearGradient><linearGradient id="p366"><stop offset="0" stop-color="#5e9903"/><stop offset=".139" stop-color="#6a9900"/><stop offset=".665" stop-color="#999900"/><stop offset="1" stop-color="#997e00"/></linearGradient><linearGradient id="p367"><stop offset="0" stop-color="#5f9904"/><stop offset=".163" stop-color="#6d9900"/><stop offset=".651" stop-color="#999900"/><stop offset="1" stop-color="#997d00"/></linearGradient><linearGradient id="p368"><stop offset="0" stop-color="#609904"/><stop offset=".182" stop-color="#6f9900"/><stop offset=".641" stop-color="#999900"/><stop offset="1" stop-color="#997c00"/></linearGradient><linearGradient id="p369"><stop offset="0" stop-color="#619905"/><stop offset=".206" stop-color="#729900"/><stop offset=".632" stop-color="#999900"/><stop offset="1" stop-color="#997b00"/></linearGradient><linearGradient id="p370"><stop offset="0" stop-color="#619905"/><stop offset=".23" stop-color="#759900"/><stop offset=".617" stop-color="#999900"/><stop offset="1" stop-color="#997a00"/></linearGradient><linearGradient id="p371"><stop offset="0" stop-color="#629906"/><stop offset=".254" stop-color="#789900"/><stop offset=".608" stop-color="#999900"/><stop offset="1" stop-color="#997900"/></linearGradient><linearGradient id="p372"><stop offset="0" stop-color="#639906"/><stop offset=".278" stop-color="#7b9900"/><stop offset=".598" stop-color="#999900"/><stop offset="1" stop-color="#997800"/></linearGradient><linearGradient id="p373"><stop offset="0" stop-color="#649907"/><stop offset=".301" stop-color="#7e9900"/><stop offset=".584" stop-color="#999900"/><stop offset="1" stop-color="#997800"/></linearGradient><linearGradient id="p374"><stop offset="0" stop-color="#649908"/><stop offset=".321" stop-color="#819900"/><stop offset=".574" stop-color="#999900"/><stop offset="1" stop-color="#997700"/></linearGradient><linearGradient id="p375"><stop offset="0" stop-color="#659908"/><stop offset=".344" stop-color="#849900"/><stop offset=".565" stop-color="#999900"/><stop offset="1" stop-color="#997600"/></linearGradient><linearGradient id="p376"><stop offset="0" stop-color="#669909"/><stop offset=".368" stop-color="#879900"/><stop offset=".55" stop-color="#999900"/><stop offset="1" stop-color="#997500"/></linearGradient><linearGradient id="p377"><stop offset="0" stop-color="#679909"/><stop offset=".392" stop-color="#8b9900"/><stop offset=".541" stop-color="#999900"/><stop offset="1" stop-color="#997400"/></linearGradient><linearGradient id="p378"><stop offset="0" stop-color="#68990a"/><stop offset=".531" stop-color="#999900"/><stop offset="1" stop-color="#997400"/></linearGradient><linearGradient id="p379"><stop offset="0" stop-color="#69990a"/><stop offset=".517" stop-color="#999900"/><stop offset="1" stop-color="#997300"/></linearGradient><linearGradient id="p380"><stop offset="0" stop-color="#69990b"/><stop offset=".507" stop-color="#999900"/><stop offset="1" stop-color="#997200"/></linearGradient><linearGradient id="p381"><stop offset="0" stop-color="#6a990c"/><stop offset=".498" stop-color="#999900"/><stop offset="1" stop-color="#997100"/></linearGradient><linearGradient id="p382"><stop offset="0" stop-color="#6b990c"/><stop offset=".483" stop-color="#999901"/><stop offset="1" stop-color="#997000"/></linearGradient><linearGradient id="p383"><stop offset="0" stop-color="#6c990d"/><stop offset=".474" stop-color="#999902"/><stop offset=".722" stop-color="#998300"/><stop offset="1" stop-color="#996f00"/></linearGradient><linearGradient id="p384"><stop offset="0" stop-color="#6d990d"/><stop offset=".464" stop-color="#999903"/><stop offset=".713" stop-color="#998300"/><stop offset="1" stop-color="#996f00"/></linearGradient><linearGradient id="p385"><stop offset="0" stop-color="#6e990e"/><stop offset=".45" stop-color="#999904"/><stop offset=".579" stop-color="#998d00"/><stop offset="1" stop-color="#996e00"/></linearGradient><linearGradient id="p386"><stop offset="0" stop-color="#6f990e"/><stop offset=".44" stop-color="#999904"/><stop offset=".603" stop-color="#998a00"/><stop offset="1" stop-color="#996d00"/></linearGradient><linearGradient id="p387"><stop offset="0" stop-color="#6f990f"/><stop offset=".431" stop-color="#999905"/><stop offset=".627" stop-color="#998700"/><stop offset="1" stop-color="#996c00"/></linearGradient><linearGradient id="p388"><stop offset="0" stop-color="#709910"/><stop offset=".416" stop-color="#999906"/><stop offset=".651" stop-color="#998400"/><stop offset="1" stop-color="#996c00"/></linearGradient><linearGradient id="p389"><stop offset="0" stop-color="#719910"/><stop offset=".407" stop-color="#999907"/><stop offset=".675" stop-color="#998100"/><stop offset="1" stop-color="#996b00"/></linearGradient><linearGradient id="p390"><stop offset="0" stop-color="#729911"/><stop offset=".397" stop-color="#999908"/><stop offset=".694" stop-color="#997f00"/><stop offset="1" stop-color="#996a00"/></linearGradient><linearGradient id="p391"><stop offset="0" stop-color="#739911"/><stop offset=".388" stop-color="#999909"/><stop offset=".718" stop-color="#997c00"/><stop offset="1" stop-color="#996900"/></linearGradient><linearGradient id="p392"><stop offset="0" stop-color="#749912"/><stop offset=".373" stop-color="#99990a"/><stop offset=".742" stop-color="#997900"/><stop offset="1" stop-color="#996800"/></linearGradient><linearGradient id="p393"><stop offset="0" stop-color="#759913"/><stop offset=".364" stop-color="#99990b"/><stop offset=".766" stop-color="#997700"/><stop offset="1" stop-color="#996800"/></linearGradient><linearGradient id="p394"><stop offset="0" stop-color="#769913"/><stop offset=".354" stop-color="#99990c"/><stop offset=".789" stop-color="#997400"/><stop offset="1" stop-color="#996700"/></linearGradient><linearGradient id="p395"><stop offset="0" stop-color="#779914"/><stop offset=".34" stop-color="#99990d"/><stop offset=".646" stop-color="#997d04"/><stop offset="1" stop-color="#996600"/></linearGradient><linearGradient id="p396"><stop offset="0" stop-color="#789915"/><stop offset=".33" stop-color="#99990d"/><stop offset=".636" stop-color="#997d05"/><stop offset="1" stop-color="#996500"/></linearGradient><linearGradient id="p397"><stop offset="0" stop-color="#799915"/><stop offset=".321" stop-color="#99990e"/><stop offset=".632" stop-color="#997d05"/><stop offset="1" stop-color="#996500"/></linearGradient><linearGradient id="p398"><stop offset="0" stop-color="#7a9916"/><stop offset=".306" stop-color="#99990f"/><stop offset=".627" stop-color="#997c06"/><stop offset="1" stop-color="#996400"/></linearGradient><linearGradient id="p399"><stop offset="0" stop-color="#7b9917"/><stop offset=".297" stop-color="#999910"/><stop offset=".617" stop-color="#997c07"/><stop offset="1" stop-color="#996300"/></linearGradient><linearGradient id="p400"><stop offset="0" stop-color="#7c9917"/><stop offset=".287" stop-color="#999911"/><stop offset=".612" stop-color="#997b07"/><stop offset="1" stop-color="#996200"/></linearGradient><linearGradient id="p401"><stop offset="0" stop-color="#7d9918"/><stop offset=".273" stop-color="#999912"/><stop offset=".603" stop-color="#997b08"/><stop offset="1" stop-color="#996200"/></linearGradient><linearGradient id="p402"><stop offset="0" stop-color="#7e9919"/><stop offset=".263" stop-color="#999913"/><stop offset=".598" stop-color="#997b09"/><stop offset="1" stop-color="#996100"/></linearGradient><linearGradient id="p403"><stop offset="0" stop-color="#7f9919"/><stop offset=".254" stop-color="#999914"/><stop offset=".593" stop-color="#997a09"/><stop offset="1" stop-color="#996000"/></linearGradient><linearGradient id="p404"><stop offset="0" stop-color="#80991a"/><stop offset=".239" stop-color="#999915"/><stop offset=".584" stop-color="#997a0a"/><stop offset="1" stop-color="#995f00"/></linearGradient><linearGradient id="p405"><stop offset="0" stop-color="#81991b"/><stop offset=".23" stop-color="#999916"/><stop offset=".579" stop-color="#99790b"/><stop offset="1" stop-color="#995f01"/></linearGradient><linearGradient id="p406"><stop offset="0" stop-color="#82991b"/><stop offset=".22" stop-color="#999917"/><stop offset=".574" stop-color="#99790b"/><stop offset="1" stop-color="#995e01"/></linearGradient><linearGradient id="p407"><stop offset="0" stop-color="#83991c"/><stop offset=".206" stop-color="#999918"/><stop offset=".565" stop-color="#99780c"/><stop offset="1" stop-color="#995d02"/></linearGradient><linearGradient id="p408"><stop offset="0" stop-color="#84991d"/><stop offset=".196" stop-color="#999919"/><stop offset=".56" stop-color="#99780d"/><stop offset="1" stop-color="#995d02"/></linearGradient><linearGradient id="q409"><stop offset="0" stop-color="#96ff00"/><stop offset="1" stop-color="#98ff00"/></linearGradient><linearGradient id="q410"><stop offset="0" stop-color="#97ff01"/><stop offset="1" stop-color="#9cff00"/></linearGradient><linearGradient id="q411"><stop offset="0" stop-color="#98ff02"/><stop offset="1" stop-color="#a1ff00"/></linearGradient><linearGradient id="q412"><stop offset="0" stop-color="#99ff03"/><stop offset="1" stop-color="#a5ff00"/></linearGradient><linearGradient id="q413"><stop offset="0" stop-color="#9bff04"/><stop offset="1" stop-color="#aaff00"/></linearGradient><linearGradient id="q414"><stop offset="0" stop-color="#9cff04"/><stop offset="1" stop-color="#aeff00"/></linearGradient><linearGradient id="q415"><stop offset="0" stop-color="#9dff05"/><stop offset="1" stop-color="#b2ff00"/></linearGradient><linearGradient id="q416"><stop offset="0" stop-color="#9eff06"/><stop offset="1" stop-color="#b7ff00"/></linearGradient><linearGradient id="q417"><stop offset="0" stop-color="#a0ff07"/><stop offset="1" stop-color="#bcff00"/></linearGradient><linearGradient id="q418"><stop offset="0" stop-color="#a1ff08"/><stop offset="1" stop-color="#c1ff00"/></linearGradient><linearGradient id="q419"><stop offset="0" stop-color="#a2ff09"/><stop offset="1" stop-color="#c6ff00"/></linearGradient><linearGradient id="q420"><stop offset="0" stop-color="#a4ff0a"/><stop offset="1" stop-color="#cbff00"/></linearGradient><linearGradient id="q421"><stop offset="0" stop-color="#a5ff0b"/><stop offset="1" stop-color="#d0ff00"/></linearGradient><linearGradient id="q422"><stop offset="0" stop-color="#a6ff0c"/><stop offset="1" stop-color="#d4ff00"/></linearGradient><linearGradient id="q423"><stop offset="0" stop-color="#a7ff0d"/><stop offset="1" stop-color="#daff00"/></linearGradient><linearGradient id="q424"><stop offset="0" stop-color="#a9ff0e"/><stop offset="1" stop-color="#dfff00"/></linearGradient><linearGradient id="q425"><stop offset="0" stop-color="#aaff0e"/><stop offset="1" stop-color="#e4ff00"/></linearGradient><linearGradient id="q426"><stop offset="0" stop-color="#acff0f"/><stop offset="1" stop-color="#eaff00"/></linearGradient><linearGradient id="q427"><stop offset="0" stop-color="#adff10"/><stop offset="1" stop-color="#f0ff00"/></linearGradient><linearGradient id="q428"><stop offset="0" stop-color="#aeff11"/><stop offset="1" stop-color="#f5ff00"/></linearGradient><linearGradient id="q429"><stop offset="0" stop-color="#b0ff12"/><stop offset="1" stop-color="#fbff00"/></linearGradient><linearGradient id="q430"><stop offset="0" stop-color="#b1ff13"/><stop offset="1" stop-color="#fffe00"/></linearGradient><linearGradient id="q431"><stop offset="0" stop-color="#b2ff14"/><stop offset=".918" stop-color="#ffff01"/><stop offset="1" stop-color="#fff800"/></linearGradient><linearGradient id="q432"><stop offset="0" stop-color="#b4ff15"/><stop offset=".861" stop-color="#ffff03"/><stop offset="1" stop-color="#fff300"/></linearGradient><linearGradient id="q433"><stop offset="0" stop-color="#b5ff16"/><stop offset=".8" stop-color="#feff04"/><stop offset="1" stop-color="#ffed00"/></linearGradient><linearGradient id="q434"><stop offset="0" stop-color="#b7ff17"/><stop offset=".752" stop-color="#ffff06"/><stop offset="1" stop-color="#ffe800"/></linearGradient><linearGradient id="q435"><stop offset="0" stop-color="#b8ff18"/><stop offset=".708" stop-color="#ffff07"/><stop offset="1" stop-color="#ffe300"/></linearGradient><linearGradient id="q436"><stop offset="0" stop-color="#baff19"/><stop offset=".667" stop-color="#ffff09"/><stop offset="1" stop-color="#ffde00"/></linearGradient><linearGradient id="q437"><stop offset="0" stop-color="#bbff1a"/><stop offset=".626" stop-color="#ffff0a"/><stop offset="1" stop-color="#ffda00"/></linearGradient><linearGradient id="q438"><stop offset="0" stop-color="#bdff1b"/><stop offset=".59" stop-color="#ffff0c"/><stop offset="1" stop-color="#ffd500"/></linearGradient><linearGradient id="q439"><stop offset="0" stop-color="#beff1c"/><stop offset=".557" stop-color="#ffff0d"/><stop offset="1" stop-color="#ffd000"/></linearGradient><linearGradient id="q440"><stop offset="0" stop-color="#c0ff1d"/><stop offset=".519" stop-color="#ffff0f"/><stop offset="1" stop-color="#ffcc00"/></linearGradient><linearGradient id="q441"><stop offset="0" stop-color="#c1ff1e"/><stop offset=".491" stop-color="#ffff10"/><stop offset=".736" stop-color="#ffe208"/><stop offset="1" stop-color="#ffc800"/></linearGradient><linearGradient id="q442"><stop offset="0" stop-color="#c3ff1f"/><stop offset=".463" stop-color="#ffff12"/><stop offset=".72" stop-color="#ffdf08"/><stop offset="1" stop-color="#ffc300"/></linearGradient><linearGradient id="q443"><stop offset="0" stop-color="#c5ff20"/><stop offset=".432" stop-color="#ffff13"/><stop offset=".704" stop-color="#ffdd09"/><stop offset="1" stop-color="#ffbf00"/></linearGradient><linearGradient id="q444"><stop offset="0" stop-color="#c6ff21"/><stop offset=".408" stop-color="#ffff15"/><stop offset=".684" stop-color="#ffdb0a"/><stop offset="1" stop-color="#ffbb00"/></linearGradient><linearGradient id="q445"><stop offset="0" stop-color="#c8ff22"/><stop offset=".388" stop-color="#ffff16"/><stop offset=".674" stop-color="#ffd90b"/><stop offset="1" stop-color="#ffb800"/></linearGradient><linearGradient id="q446"><stop offset="0" stop-color="#c9ff23"/><stop offset=".361" stop-color="#ffff18"/><stop offset=".661" stop-color="#ffd70b"/><stop offset="1" stop-color="#ffb400"/></linearGradient><linearGradient id="q447"><stop offset="0" stop-color="#cbff25"/><stop offset=".34" stop-color="#ffff19"/><stop offset=".649" stop-color="#ffd40c"/><stop offset="1" stop-color="#ffb000"/></linearGradient><linearGradient id="q448"><stop offset="0" stop-color="#cdff26"/><stop offset=".321" stop-color="#ffff1b"/><stop offset=".637" stop-color="#ffd20c"/><stop offset="1" stop-color="#ffac00"/></linearGradient><linearGradient id="q449"><stop offset="0" stop-color="#ceff27"/><stop offset=".303" stop-color="#fffe1c"/><stop offset=".626" stop-color="#ffd00d"/><stop offset="1" stop-color="#ffa900"/></linearGradient><linearGradient id="q450"><stop offset="0" stop-color="#d0ff28"/><stop offset=".281" stop-color="#ffff1e"/><stop offset=".611" stop-color="#ffce0e"/><stop offset="1" stop-color="#ffa500"/></linearGradient><linearGradient id="q451"><stop offset="0" stop-color="#d2ff29"/><stop offset=".264" stop-color="#ffff20"/><stop offset=".601" stop-color="#ffcc0f"/><stop offset="1" stop-color="#ffa200"/></linearGradient><linearGradient id="q452"><stop offset="0" stop-color="#d4ff2a"/><stop offset=".254" stop-color="#fffe21"/><stop offset=".593" stop-color="#ffcb10"/><stop offset="1" stop-color="#ffa000"/></linearGradient><linearGradient id="q453"><stop offset="0" stop-color="#d5ff2b"/><stop offset=".239" stop-color="#ffff23"/><stop offset=".584" stop-color="#ffcb11"/><stop offset="1" stop-color="#ff9f01"/></linearGradient><linearGradient id="q454"><stop offset="0" stop-color="#d7ff2c"/><stop offset=".23" stop-color="#ffff24"/><stop offset=".579" stop-color="#ffca12"/><stop offset="1" stop-color="#ff9e02"/></linearGradient><linearGradient id="q455"><stop offset="0" stop-color="#d9ff2e"/><stop offset=".22" stop-color="#fffe26"/><stop offset=".574" stop-color="#ffc913"/><stop offset="1" stop-color="#ff9c02"/></linearGradient><linearGradient id="q456"><stop offset="0" stop-color="#dbff2f"/><stop offset=".206" stop-color="#ffff28"/><stop offset=".378" stop-color="#ffe21d"/><stop offset=".565" stop-color="#ffc914"/><stop offset="1" stop-color="#ff9b03"/></linearGradient><linearGradient id="q457"><stop offset="0" stop-color="#dcff30"/><stop offset=".196" stop-color="#ffff29"/><stop offset=".368" stop-color="#ffe21f"/><stop offset=".56" stop-color="#ffc815"/><stop offset="1" stop-color="#ff9a04"/></linearGradient><clipPath id="cl"><polygon points="1096.3,558.2 1096.3,558.2 1096.3,558.2 1096.3,558.2 1096.3,558.2 1096.3,558.2 1096.2,558.2 1096.2,558.2 1096.2,558.2 1096.2,558.2 1096.2,558.3 1096.1,558.3 1096.1,558.3 1096.1,558.3 1096.1,558.3 1096.0,558.3 1096.0,558.3 1096.0,558.3 1096.0,558.3 1095.9,558.3 1095.9,558.3 1095.8,558.3 1095.8,558.3 1095.8,558.3 1095.7,558.3 1095.7,558.3 1095.7,558.3 1095.6,558.3 1095.6,558.3 1095.5,558.3 1095.5,558.3 1095.5,558.3 1095.4,558.3 1095.4,558.3 1095.3,558.3 1095.3,558.3 1095.2,558.3 1095.2,558.3 1095.1,558.3 1095.0,558.3 1095.0,558.3 1094.9,558.3 1094.8,558.3 1094.8,558.3 1094.7,558.3 1094.6,558.3 1094.5,558.2 1094.4,558.2 1094.3,558.2 1094.2,558.1 1094.1,558.1 1093.9,558.0 1093.8,557.9 1093.7,557.9 1093.5,557.8 1093.4,557.7 1093.2,557.6 1093.0,557.6 1092.9,557.5 1092.7,557.4 1092.5,557.2 1092.3,557.1 1092.0,557.0 1091.8,556.8 1091.5,556.7 1091.3,556.5 1091.0,556.4 1090.7,556.2 1090.4,556.0 1090.1,555.8 1089.8,555.6 1089.5,555.4 1089.1,555.2 1088.8,554.9 1088.4,554.7 1088.0,554.5 1087.6,554.2 1087.2,554.0 1086.7,553.7 1086.2,553.4 1085.7,553.1 1085.1,552.7 1084.6,552.4 1084.0,552.0 1083.4,551.7 1082.7,551.3 1082.1,550.9 1081.4,550.5 1080.7,550.0 1080.0,549.6 1079.2,549.1 1078.4,548.6 1077.6,548.0 1076.8,547.4 1075.9,546.8 1075.0,546.2 1074.0,545.5 1073.1,544.7 1072.1,544.0 1071.1,543.2 1070.0,542.3 1068.9,541.3 1067.7,540.2 1066.5,539.0 1065.2,537.6 1063.8,536.2 1062.4,534.6 1060.9,532.9 1059.3,531.0 1057.7,528.9 1056.0,526.7 1054.2,524.4 1052.4,521.8 1050.5,519.1 1048.6,516.0 1046.5,512.7 1044.4,509.2 1042.2,505.4 1039.9,501.4 1037.5,497.0 1035.0,492.3 1032.4,487.3 1029.7,481.9 1026.9,476.3 1024.0,470.3 1021.1,464.0 1018.3,457.2 1015.4,450.0 1012.5,442.4 1009.6,434.5 1006.7,426.1 1003.8,417.5 1001.0,408.5 998.2,399.1 995.4,389.3 992.5,379.2 989.8,368.8 987.2,358.3 984.8,347.8 982.5,337.1 980.4,326.3 978.3,315.3 976.5,304.3 974.8,293.5 973.5,282.9 972.3,272.5 971.4,262.1 970.7,251.9 970.3,241.8 970.1,232.1 970.3,222.8 970.8,213.8 971.6,204.9 972.6,196.4 974.0,188.3 975.7,180.6 977.7,173.5 980.0,167.0 982.8,160.9 985.8,155.2 989.1,150.1 992.5,145.6 996.2,141.6 1000.1,138.4 1004.2,135.8 1008.6,133.8 1013.1,132.3 1017.8,131.2 1022.4,130.4 1027.1,130.1 1032.0,130.3 1037.0,131.0 1042.0,132.0 1047.0,133.1 1052.0,134.3 1057.0,135.7 1062.0,137.2 1067.0,139.0 1072.1,140.9 1077.1,142.9 1082.0,144.8 1086.8,146.7 1091.6,148.8 1096.3,150.8 1101.0,153.0 1105.6,155.1 1110.2,157.3 1114.8,159.6 1119.4,161.9 1123.9,164.2 1128.4,166.6 1132.9,169.0 1137.4,171.4 1141.9,173.9 1146.4,176.5 1150.9,179.0 1155.3,181.6 1159.8,184.3 1164.2,186.9 1168.7,189.6 1173.1,192.3 1177.5,195.1 1181.9,197.8 1186.3,200.6 1190.7,203.4 1195.1,206.3 1199.5,209.1 1204.0,212.0 1208.4,214.9 1212.8,217.8 1217.2,220.7 1221.6,223.6 1226.0,226.5 1230.4,229.5 1234.9,232.5 1239.3,235.5 1243.7,238.4 1248.1,241.4 1252.5,244.4 1256.9,247.4 1261.3,250.4 1265.7,253.4 1270.0,256.4 1274.4,259.5 1278.8,262.5 1283.2,265.5 1287.6,268.5 1291.9,271.5 1296.3,274.5 1300.6,277.4 1304.9,280.4 1309.2,283.4 1313.5,286.4 1317.7,289.3 1322.0,292.3 1326.2,295.2 1330.4,298.1 1334.5,301.0 1338.7,303.9 1342.8,306.8 1346.9,309.6 1351.0,312.4 1355.0,315.2 1359.0,318.0 1363.0,320.8 1366.9,323.5 1370.8,326.2 1374.7,328.9 1378.5,331.6 1382.3,334.2 1386.0,336.8 1389.7,339.3 1393.3,341.8 1396.9,344.3 1400.4,346.8 1403.9,349.2 1407.3,351.5 1410.6,353.9 1413.8,356.1 1417.0,358.3 1420.1,360.5 1423.1,362.5 1426.0,364.6 1428.9,366.6 1431.7,368.5 1434.5,370.4 1437.2,372.3 1439.8,374.2 1442.4,376.0 1445.0,377.7 1447.4,379.4 1449.7,381.0 1452.0,382.6 1454.2,384.1 1456.4,385.6 1458.4,387.0 1460.4,388.4 1462.4,389.7 1464.2,391.0 1466.0,392.3 1467.7,393.5 1469.4,394.6 1471.0,395.8 1472.6,396.9 1474.1,397.9 1475.5,398.9 1476.8,399.8 1478.2,400.8 1479.5,401.7 1480.7,402.5 1481.9,403.3 1483.0,404.1 1484.1,404.9 1485.2,405.6 1486.2,406.3 1487.2,407.0 1488.1,407.6 1489.0,408.3 1489.9,408.9 1490.8,409.5 1491.6,410.1 1492.4,410.6 1493.2,411.2 1494.0,411.7 1494.7,412.2 1495.4,412.7 1496.1,413.2 1496.8,413.7 1497.4,414.1 1498.1,414.6 1498.7,415.0 1499.3,415.4 1499.8,415.8 1500.4,416.2 1500.9,416.5 1501.4,416.9 1501.9,417.2 1502.3,417.5 1502.8,417.8 1503.2,418.1 1503.6,418.4 1504.0,418.6 1504.3,418.9 1504.7,419.1 1505.0,419.4 1505.3,419.6 1505.6,419.8 1505.9,420.0 1506.2,420.2 1506.5,420.4 1506.7,420.5 1506.9,420.7 1507.2,420.9 1507.4,421.0 1507.6,421.2 1507.8,421.3 1508.0,421.4 1508.1,421.5 1508.3,421.6 1508.4,421.7 1508.5,421.8 1508.7,421.9 1508.8,422.0 1508.9,422.1 1509.0,422.2 1509.1,422.2 1509.2,422.3 1509.3,422.4 1509.4,422.5 1509.5,422.5 1509.6,422.6 1509.7,422.6 1509.8,422.7 1509.9,422.8 1510.0,422.8 1510.1,422.9 1510.1,422.9 1510.2,423.0 1510.3,423.1 1510.4,423.1 1510.5,423.2 1510.6,423.2 1510.6,423.3 1510.7,423.3 1510.8,423.4 1510.9,423.4 1510.9,423.5 1511.0,423.5 1511.0,423.6 1511.1,423.6 1511.1,423.6 1511.2,423.7 1511.2,423.7 1511.3,423.7 1511.3,423.7 1511.3,423.8 1511.3,423.8 1511.4,423.8 1511.4,423.8 1511.4,423.8 1511.4,423.8 1511.4,423.8 1511.4,423.8 1511.4,423.8 1511.4,423.9"/></clipPath><clipPath id="ct"><polygon points="1441.3,390.5 1189.5,251.1 1078.5,529.8"/></clipPath><clipPath id="ci"><rect x="1374" y="134" width="209" height="161"/></clipPath><clipPath id="cil" clip-path="url(#ci)"><polygon points="828.8,1239.6 828.7,1239.6 828.7,1239.6 828.7,1239.6 828.6,1239.6 828.6,1239.6 828.5,1239.6 828.4,1239.7 828.3,1239.7 828.3,1239.7 828.2,1239.8 828.1,1239.8 828.0,1239.8 827.9,1239.8 827.8,1239.8 827.7,1239.8 827.6,1239.8 827.5,1239.8 827.4,1239.8 827.3,1239.9 827.2,1239.9 827.1,1239.9 826.9,1240.0 826.8,1240.0 826.6,1240.0 826.5,1240.1 826.4,1240.1 826.3,1240.1 826.1,1240.0 826.0,1240.0 825.9,1240.0 825.7,1240.0 825.5,1240.0 825.4,1240.0 825.2,1240.0 825.0,1240.0 824.8,1240.0 824.6,1240.0 824.4,1240.1 824.2,1240.1 824.0,1240.1 823.7,1240.1 823.5,1240.0 823.2,1240.0 822.9,1239.9 822.6,1239.8 822.3,1239.7 822.0,1239.6 821.6,1239.4 821.2,1239.2 820.8,1239.0 820.3,1238.8 819.8,1238.6 819.3,1238.3 818.7,1238.0 818.2,1237.7 817.6,1237.3 817.0,1237.0 816.4,1236.6 815.7,1236.2 815.0,1235.7 814.2,1235.2 813.4,1234.7 812.6,1234.1 811.6,1233.5 810.7,1232.9 809.7,1232.3 808.7,1231.6 807.7,1230.8 806.6,1230.0 805.5,1229.2 804.4,1228.4 803.1,1227.5 801.8,1226.6 800.5,1225.7 799.1,1224.8 797.6,1223.8 796.1,1222.7 794.4,1221.6 792.6,1220.4 790.8,1219.2 788.8,1217.9 786.8,1216.5 784.7,1215.1 782.5,1213.6 780.2,1212.1 777.9,1210.5 775.5,1208.9 773.0,1207.2 770.4,1205.3 767.7,1203.4 764.9,1201.3 761.9,1199.1 758.9,1196.9 755.8,1194.4 752.5,1191.8 749.2,1189.0 745.8,1186.1 742.3,1183.1 738.7,1180.0 734.9,1176.5 731.0,1172.6 726.7,1168.1 722.2,1163.2 717.5,1157.9 712.6,1152.2 707.5,1145.9 702.2,1139.0 696.6,1131.4 690.8,1123.2 684.8,1114.6 678.6,1105.3 672.1,1095.2 665.3,1084.2 658.3,1072.0 650.9,1058.8 643.3,1044.9 635.4,1030.0 627.2,1013.9 618.7,996.6 609.9,977.9 600.6,958.0 590.9,936.8 580.8,914.5 570.6,890.7 560.3,865.4 550.1,838.6 539.9,810.0 529.6,779.9 519.2,748.3 508.9,715.3 498.6,680.9 488.5,645.3 478.5,608.1 468.3,569.1 458.3,528.7 448.5,487.5 439.2,445.8 430.6,404.1 422.6,361.9 414.8,318.8 407.5,275.2 400.9,231.6 395.0,188.5 390.2,146.5 386.2,105.2 382.8,64.0 380.3,23.4 378.7,-16.4 378.2,-55.0 378.8,-92.0 380.6,-127.9 383.4,-162.9 387.2,-196.8 392.1,-229.0 398.1,-259.4 405.3,-287.5 413.7,-313.6 423.3,-337.9 434.1,-360.3 445.8,-380.6 458.3,-398.6 471.4,-414.2 485.2,-427.1 500.1,-437.4 515.7,-445.4 531.8,-451.4 548.3,-455.8 564.9,-458.8 581.8,-460.0 599.2,-459.1 616.8,-456.4 634.7,-452.6 652.6,-448.1 670.4,-443.3 688.2,-437.9 706.2,-431.6 724.2,-424.6 742.2,-417.1 760.0,-409.4 777.5,-401.7 794.7,-393.9 811.7,-385.9 828.6,-377.7 845.3,-369.2 861.9,-360.6 878.5,-351.9 894.9,-343.0 911.1,-333.9 927.3,-324.6 943.4,-315.2 959.4,-305.6 975.5,-295.9 991.5,-286.0 1007.5,-276.0 1023.5,-265.8 1039.4,-255.4 1055.3,-245.0 1071.2,-234.4 1087.0,-223.8 1102.8,-213.0 1118.6,-202.1 1134.3,-191.1 1150.1,-180.0 1165.8,-168.9 1181.6,-157.6 1197.3,-146.3 1213.0,-134.9 1228.7,-123.5 1244.5,-112.0 1260.2,-100.4 1276.0,-88.8 1291.7,-77.1 1307.5,-65.4 1323.3,-53.6 1339.1,-41.8 1354.8,-29.9 1370.6,-18.1 1386.3,-6.2 1402.0,5.8 1417.6,17.7 1433.3,29.7 1448.9,41.6 1464.6,53.5 1480.3,65.5 1495.9,77.4 1511.5,89.3 1527.0,101.2 1542.5,113.1 1558.0,125.0 1573.3,136.8 1588.7,148.6 1604.0,160.4 1619.1,172.2 1634.3,183.8 1649.3,195.4 1664.3,207.0 1679.2,218.5 1694.0,230.0 1708.7,241.4 1723.4,252.7 1737.9,263.9 1752.3,275.0 1766.6,286.1 1780.8,297.1 1794.8,307.9 1808.7,318.7 1822.5,329.3 1836.2,339.8 1849.7,350.2 1863.0,360.5 1876.2,370.6 1889.1,380.6 1901.8,390.4 1914.4,400.1 1926.8,409.7 1938.9,419.2 1950.8,428.4 1962.3,437.3 1973.6,446.0 1984.6,454.5 1995.3,462.8 2005.7,470.8 2016.0,478.7 2026.0,486.5 2035.9,494.1 2045.6,501.6 2055.1,509.0 2064.4,516.1 2073.4,523.0 2082.1,529.7 2090.5,536.2 2098.6,542.4 2106.5,548.4 2114.1,554.3 2121.5,559.9 2128.6,565.4 2135.5,570.7 2142.1,575.9 2148.5,580.8 2154.7,585.6 2160.7,590.2 2166.4,594.7 2172.0,599.0 2177.3,603.1 2182.3,607.1 2187.2,610.9 2192.0,614.5 2196.6,618.1 2201.0,621.5 2205.2,624.7 2209.3,627.8 2213.2,630.8 2216.9,633.7 2220.6,636.5 2224.1,639.2 2227.5,641.9 2230.8,644.4 2233.9,646.8 2236.9,649.2 2239.9,651.5 2242.8,653.7 2245.6,655.9 2248.4,658.0 2251.0,660.1 2253.6,662.1 2256.0,664.0 2258.4,665.8 2260.8,667.6 2263.0,669.4 2265.2,671.1 2267.2,672.7 2269.3,674.2 2271.2,675.7 2273.1,677.1 2274.9,678.5 2276.6,679.8 2278.2,681.0 2279.8,682.2 2281.3,683.4 2282.7,684.5 2284.1,685.5 2285.3,686.5 2286.6,687.4 2287.8,688.4 2288.9,689.2 2290.0,690.1 2291.0,690.9 2292.0,691.7 2292.9,692.4 2293.8,693.1 2294.7,693.7 2295.5,694.4 2296.3,695.0 2297.0,695.5 2297.7,696.1 2298.3,696.6 2298.9,697.0 2299.4,697.4 2299.9,697.8 2300.4,698.1 2300.8,698.5 2301.2,698.8 2301.7,699.2 2302.1,699.5 2302.5,699.8 2302.9,700.1 2303.3,700.4 2303.6,700.7 2304.0,700.9 2304.3,701.2 2304.6,701.4 2304.9,701.6 2305.2,701.9 2305.5,702.1 2305.8,702.3 2306.1,702.6 2306.4,702.8 2306.7,703.1 2307.0,703.3 2307.3,703.5 2307.6,703.8 2307.9,704.0 2308.2,704.2 2308.4,704.4 2308.7,704.6 2308.9,704.8 2309.1,704.9 2309.3,705.1 2309.5,705.2 2309.7,705.4 2309.8,705.5 2310.0,705.6 2310.1,705.7 2310.2,705.8 2310.3,705.8 2310.4,705.9 2310.4,705.9 2310.5,706.0 2310.6,706.0 2310.6,706.1 2310.7,706.1 2310.7,706.1 2310.7,706.2 2310.8,706.2"/></clipPath><clipPath id="cit" clip-path="url(#ci)"><polygon points="2060.4,573.6 1161.6,20.3 765.1,1126.9"/></clipPath></defs><rect x="968" y="127" width="622" height="435" fill="#242424"/><g clip-path="url(#cl)"><rect x="1013" y="130" width="31" height="2" fill="url(#o0)"/><rect x="1007" y="132" width="45" height="2" fill="url(#o1)"/><rect x="1002" y="134" width="58" height="2" fill="url(#o2)"/><rect x="999" y="136" width="67" height="2" fill="url(#o3)"/><rect x="997" y="138" width="74" height="2" fill="url(#o4)"/><rect x="994" y="140" width="82" height="2" fill="url(#o5)"/><rect x="993" y="142" width="88" height="2" fill="url(#o6)"/><rect x="991" y="144" width="95" height="2" fill="url(#o7)"/><rect x="989" y="146" width="102" height="2" fill="url(#o8)"/><rect x="988" y="148" width="108" height="2" fill="url(#o9)"/><rect x="986" y="150" width="114" height="2" fill="url(#o10)"/><rect x="985" y="152" width="120" height="2" fill="url(#o11)"/><rect x="984" y="154" width="125" height="2" fill="url(#o12)"/><rect x="983" y="156" width="130" height="2" fill="url(#o13)"/><rect x="982" y="158" width="135" height="2" fill="url(#o14)"/><rect x="981" y="160" width="140" height="2" fill="url(#o15)"/><rect x="980" y="162" width="145" height="2" fill="url(#o16)"/><rect x="979" y="164" width="150" height="2" fill="url(#o17)"/><rect x="978" y="166" width="155" height="2" fill="url(#o18)"/><rect x="977" y="168" width="159" height="2" fill="url(#o19)"/><rect x="977" y="170" width="163" height="2" fill="url(#o20)"/><rect x="976" y="172" width="168" height="2" fill="url(#o21)"/><rect x="975" y="174" width="172" height="2" fill="url(#o22)"/><rect x="975" y="176" width="176" height="2" fill="url(#o23)"/><rect x="974" y="178" width="180" height="2" fill="url(#o24)"/><rect x="974" y="180" width="183" height="2" fill="url(#o25)"/><rect x="973" y="182" width="188" height="2" fill="url(#o26)"/><rect x="973" y="184" width="191" height="2" fill="url(#o27)"/><rect x="973" y="186" width="195" height="2" fill="url(#o28)"/><rect x="972" y="188" width="199" height="2" fill="url(#o29)"/><rect x="972" y="190" width="202" height="2" fill="url(#o30)"/><rect x="972" y="192" width="205" height="2" fill="url(#o31)"/><rect x="971" y="194" width="209" height="2" fill="url(#o32)"/><rect x="971" y="196" width="213" height="2" fill="url(#o33)"/><rect x="971" y="198" width="216" height="2" fill="url(#o34)"/><rect x="970" y="200" width="220" height="2" fill="url(#o35)"/><rect x="970" y="202" width="223" height="2" fill="url(#o36)"/><rect x="970" y="204" width="226" height="2" fill="url(#o37)"/><rect x="970" y="206" width="229" height="2" fill="url(#o38)"/><rect x="970" y="208" width="232" height="2" fill="url(#o39)"/><rect x="969" y="210" width="236" height="2" fill="url(#o40)"/><rect x="969" y="212" width="240" height="2" fill="url(#o41)"/><rect x="969" y="214" width="243" height="2" fill="url(#o42)"/><rect x="969" y="216" width="246" height="2" fill="url(#o43)"/><rect x="969" y="218" width="249" height="2" fill="url(#o44)"/><rect x="969" y="220" width="252" height="2" fill="url(#o45)"/><rect x="969" y="222" width="255" height="2" fill="url(#o46)"/><rect x="969" y="224" width="258" height="2" fill="url(#o47)"/><rect x="969" y="226" width="261" height="2" fill="url(#o48)"/><rect x="969" y="228" width="264" height="2" fill="url(#o49)"/><rect x="969" y="230" width="267" height="2" fill="url(#o50)"/><rect x="969" y="232" width="270" height="2" fill="url(#o51)"/><rect x="969" y="234" width="273" height="2" fill="url(#o52)"/><rect x="969" y="236" width="276" height="2" fill="url(#o53)"/><rect x="969" y="238" width="278" height="2" fill="url(#o54)"/><rect x="969" y="240" width="281" height="2" fill="url(#o55)"/><rect x="969" y="242" width="284" height="2" fill="url(#o56)"/><rect x="969" y="244" width="287" height="2" fill="url(#o57)"/><rect x="969" y="246" width="290" height="2" fill="url(#o58)"/><rect x="969" y="248" width="293" height="2" fill="url(#o59)"/><rect x="969" y="250" width="296" height="2" fill="url(#o60)"/><rect x="969" y="252" width="299" height="2" fill="url(#o61)"/><rect x="969" y="254" width="302" height="2" fill="url(#o62)"/><rect x="969" y="256" width="305" height="2" fill="url(#o63)"/><rect x="970" y="258" width="307" height="2" fill="url(#o64)"/><rect x="970" y="260" width="310" height="2" fill="url(#o65)"/><rect x="970" y="262" width="313" height="2" fill="url(#o66)"/><rect x="970" y="264" width="315" height="2" fill="url(#o67)"/><rect x="970" y="266" width="318" height="2" fill="url(#o68)"/><rect x="970" y="268" width="321" height="2" fill="url(#o69)"/><rect x="971" y="270" width="323" height="2" fill="url(#o70)"/><rect x="971" y="272" width="326" height="2" fill="url(#o71)"/><rect x="971" y="274" width="329" height="2" fill="url(#o72)"/><rect x="971" y="276" width="332" height="2" fill="url(#o73)"/><rect x="971" y="278" width="335" height="2" fill="url(#o74)"/><rect x="972" y="280" width="337" height="2" fill="url(#o75)"/><rect x="972" y="282" width="340" height="2" fill="url(#o76)"/><rect x="972" y="284" width="342" height="2" fill="url(#o77)"/><rect x="972" y="286" width="345" height="2" fill="url(#o78)"/><rect x="973" y="288" width="347" height="2" fill="url(#o79)"/><rect x="973" y="290" width="350" height="2" fill="url(#o80)"/><rect x="973" y="292" width="353" height="2" fill="url(#o81)"/><rect x="973" y="294" width="356" height="2" fill="url(#o82)"/><rect x="974" y="296" width="358" height="2" fill="url(#o83)"/><rect x="974" y="298" width="361" height="2" fill="url(#o84)"/><rect x="974" y="300" width="363" height="2" fill="url(#o85)"/><rect x="975" y="302" width="365" height="2" fill="url(#o86)"/><rect x="975" y="304" width="368" height="2" fill="url(#o87)"/><rect x="975" y="306" width="371" height="2" fill="url(#o88)"/><rect x="976" y="308" width="373" height="2" fill="url(#o89)"/><rect x="976" y="310" width="376" height="2" fill="url(#o90)"/><rect x="976" y="312" width="379" height="2" fill="url(#o91)"/><rect x="977" y="314" width="381" height="2" fill="url(#o92)"/><rect x="977" y="316" width="383" height="2" fill="url(#o93)"/><rect x="977" y="318" width="386" height="2" fill="url(#o94)"/><rect x="978" y="320" width="388" height="2" fill="url(#o95)"/><rect x="978" y="322" width="391" height="2" fill="url(#o96)"/><rect x="978" y="324" width="394" height="2" fill="url(#o97)"/><rect x="979" y="326" width="396" height="2" fill="url(#o98)"/><rect x="979" y="328" width="399" height="2" fill="url(#o99)"/><rect x="980" y="330" width="401" height="2" fill="url(#o100)"/><rect x="980" y="332" width="404" height="2" fill="url(#o101)"/><rect x="980" y="334" width="406" height="2" fill="url(#o102)"/><rect x="981" y="336" width="408" height="2" fill="url(#o103)"/><rect x="981" y="338" width="411" height="2" fill="url(#o104)"/><rect x="982" y="340" width="413" height="2" fill="url(#o105)"/><rect x="982" y="342" width="416" height="2" fill="url(#o106)"/><rect x="982" y="344" width="419" height="2" fill="url(#o107)"/><rect x="983" y="346" width="421" height="2" fill="url(#o108)"/><rect x="983" y="348" width="424" height="2" fill="url(#o109)"/><rect x="984" y="350" width="425" height="2" fill="url(#o110)"/><rect x="984" y="352" width="428" height="2" fill="url(#o111)"/><rect x="985" y="354" width="430" height="2" fill="url(#o112)"/><rect x="985" y="356" width="433" height="2" fill="url(#o113)"/><rect x="986" y="358" width="435" height="2" fill="url(#o114)"/><rect x="986" y="360" width="438" height="2" fill="url(#o115)"/><rect x="987" y="362" width="440" height="2" fill="url(#o116)"/><rect x="987" y="364" width="443" height="2" fill="url(#o117)"/><rect x="988" y="366" width="444" height="2" fill="url(#o118)"/><rect x="988" y="368" width="447" height="2" fill="url(#o119)"/><rect x="989" y="370" width="449" height="2" fill="url(#o120)"/><rect x="989" y="372" width="452" height="2" fill="url(#o121)"/><rect x="990" y="374" width="454" height="2" fill="url(#o122)"/><rect x="990" y="376" width="457" height="2" fill="url(#o123)"/><rect x="991" y="378" width="459" height="2" fill="url(#o124)"/><rect x="991" y="380" width="462" height="2" fill="url(#o125)"/><rect x="992" y="382" width="464" height="2" fill="url(#o126)"/><rect x="992" y="384" width="466" height="2" fill="url(#o127)"/><rect x="993" y="386" width="468" height="2" fill="url(#o128)"/><rect x="993" y="388" width="471" height="2" fill="url(#o129)"/><rect x="994" y="390" width="473" height="2" fill="url(#o130)"/><rect x="995" y="392" width="475" height="2" fill="url(#o131)"/><rect x="995" y="394" width="478" height="2" fill="url(#o132)"/><rect x="996" y="396" width="480" height="2" fill="url(#o133)"/><rect x="996" y="398" width="483" height="2" fill="url(#o134)"/><rect x="997" y="400" width="484" height="2" fill="url(#o135)"/><rect x="998" y="402" width="486" height="2" fill="url(#o136)"/><rect x="998" y="404" width="489" height="2" fill="url(#o137)"/><rect x="999" y="406" width="491" height="2" fill="url(#o138)"/><rect x="999" y="408" width="494" height="2" fill="url(#o139)"/><rect x="1000" y="410" width="496" height="2" fill="url(#o140)"/><rect x="1001" y="412" width="498" height="2" fill="url(#o141)"/><rect x="1001" y="414" width="501" height="2" fill="url(#o142)"/><rect x="1002" y="416" width="503" height="2" fill="url(#o143)"/><rect x="1003" y="418" width="504" height="2" fill="url(#o144)"/><rect x="1003" y="420" width="507" height="2" fill="url(#o145)"/><rect x="1004" y="422" width="509" height="2" fill="url(#o146)"/><rect x="1005" y="424" width="507" height="2" fill="url(#o147)"/><rect x="1005" y="426" width="501" height="2" fill="url(#o148)"/><rect x="1006" y="428" width="494" height="2" fill="url(#o149)"/><rect x="1007" y="430" width="487" height="2" fill="url(#o150)"/><rect x="1007" y="432" width="481" height="2" fill="url(#o151)"/><rect x="1008" y="434" width="474" height="2" fill="url(#o152)"/><rect x="1009" y="436" width="466" height="2" fill="url(#o153)"/><rect x="1009" y="438" width="460" height="2" fill="url(#o154)"/><rect x="1010" y="440" width="453" height="2" fill="url(#o155)"/><rect x="1011" y="442" width="446" height="2" fill="url(#o156)"/><rect x="1012" y="444" width="439" height="2" fill="url(#o157)"/><rect x="1012" y="446" width="433" height="2" fill="url(#o158)"/><rect x="1013" y="448" width="425" height="2" fill="url(#o159)"/><rect x="1014" y="450" width="418" height="2" fill="url(#o160)"/><rect x="1015" y="452" width="411" height="2" fill="url(#o161)"/><rect x="1016" y="454" width="404" height="2" fill="url(#o162)"/><rect x="1016" y="456" width="398" height="2" fill="url(#o163)"/><rect x="1017" y="458" width="390" height="2" fill="url(#o164)"/><rect x="1018" y="460" width="383" height="2" fill="url(#o165)"/><rect x="1019" y="462" width="376" height="2" fill="url(#o166)"/><rect x="1020" y="464" width="369" height="2" fill="url(#o167)"/><rect x="1021" y="466" width="362" height="2" fill="url(#o168)"/><rect x="1021" y="468" width="356" height="2" fill="url(#o169)"/><rect x="1022" y="470" width="348" height="2" fill="url(#o170)"/><rect x="1023" y="472" width="341" height="2" fill="url(#o171)"/><rect x="1024" y="474" width="334" height="2" fill="url(#o172)"/><rect x="1025" y="476" width="327" height="2" fill="url(#o173)"/><rect x="1026" y="478" width="320" height="2" fill="url(#o174)"/><rect x="1027" y="480" width="312" height="2" fill="url(#o175)"/><rect x="1028" y="482" width="305" height="2" fill="url(#o176)"/><rect x="1029" y="484" width="298" height="2" fill="url(#o177)"/><rect x="1030" y="486" width="291" height="2" fill="url(#o178)"/><rect x="1031" y="488" width="284" height="2" fill="url(#o179)"/><rect x="1032" y="490" width="277" height="2" fill="url(#o180)"/><rect x="1033" y="492" width="269" height="2" fill="url(#o181)"/><rect x="1034" y="494" width="262" height="2" fill="url(#o182)"/><rect x="1035" y="496" width="255" height="2" fill="url(#o183)"/><rect x="1037" y="498" width="247" height="2" fill="url(#o184)"/><rect x="1038" y="500" width="240" height="2" fill="url(#o185)"/><rect x="1039" y="502" width="233" height="2" fill="url(#o186)"/><rect x="1040" y="504" width="225" height="2" fill="url(#o187)"/><rect x="1041" y="506" width="218" height="2" fill="url(#o188)"/><rect x="1042" y="508" width="211" height="2" fill="url(#o189)"/><rect x="1043" y="510" width="204" height="2" fill="url(#o190)"/><rect x="1045" y="512" width="196" height="2" fill="url(#o191)"/><rect x="1046" y="514" width="188" height="2" fill="url(#o192)"/><rect x="1047" y="516" width="181" height="2" fill="url(#o193)"/><rect x="1048" y="518" width="174" height="2" fill="url(#o194)"/><rect x="1050" y="520" width="166" height="2" fill="url(#o195)"/><rect x="1051" y="522" width="159" height="2" fill="url(#o196)"/><rect x="1052" y="524" width="152" height="2" fill="url(#o197)"/><rect x="1054" y="526" width="143" height="2" fill="url(#o198)"/><rect x="1055" y="528" width="136" height="2" fill="url(#o199)"/><rect x="1057" y="530" width="128" height="2" fill="url(#o200)"/><rect x="1059" y="532" width="120" height="2" fill="url(#o201)"/><rect x="1060" y="534" width="113" height="2" fill="url(#o202)"/><rect x="1062" y="536" width="104" height="2" fill="url(#o203)"/><rect x="1064" y="538" width="96" height="2" fill="url(#o204)"/><rect x="1066" y="540" width="88" height="2" fill="url(#o205)"/><rect x="1068" y="542" width="80" height="2" fill="url(#o206)"/><rect x="1071" y="544" width="71" height="2" fill="url(#o207)"/><rect x="1073" y="546" width="63" height="2" fill="url(#o208)"/><rect x="1076" y="548" width="53" height="2" fill="url(#o209)"/><rect x="1079" y="550" width="44" height="2" fill="url(#o210)"/><rect x="1082" y="552" width="35" height="2" fill="url(#o211)"/><rect x="1086" y="554" width="25" height="2" fill="url(#o212)"/><rect x="1089" y="556" width="16" height="2" fill="url(#o213)"/><rect x="1092" y="558" width="6" height="2" fill="url(#o214)"/></g><g clip-path="url(#ct)"><rect x="1187" y="251" width="8" height="2" fill="url(#i215)"/><rect x="1186" y="253" width="12" height="2" fill="url(#i216)"/><rect x="1186" y="255" width="16" height="2" fill="url(#i217)"/><rect x="1185" y="257" width="20" height="2" fill="url(#i218)"/><rect x="1184" y="259" width="25" height="2" fill="url(#i219)"/><rect x="1183" y="261" width="30" height="2" fill="url(#i220)"/><rect x="1183" y="263" width="33" height="2" fill="url(#i221)"/><rect x="1182" y="265" width="38" height="2" fill="url(#i222)"/><rect x="1181" y="267" width="42" height="2" fill="url(#i223)"/><rect x="1180" y="269" width="47" height="2" fill="url(#i224)"/><rect x="1179" y="271" width="52" height="2" fill="url(#i225)"/><rect x="1179" y="273" width="55" height="2" fill="url(#i226)"/><rect x="1178" y="275" width="60" height="2" fill="url(#i227)"/><rect x="1177" y="277" width="64" height="2" fill="url(#i228)"/><rect x="1176" y="279" width="69" height="2" fill="url(#i229)"/><rect x="1175" y="281" width="74" height="2" fill="url(#i230)"/><rect x="1175" y="283" width="77" height="2" fill="url(#i231)"/><rect x="1174" y="285" width="82" height="2" fill="url(#i232)"/><rect x="1173" y="287" width="87" height="2" fill="url(#i233)"/><rect x="1172" y="289" width="91" height="2" fill="url(#i234)"/><rect x="1171" y="291" width="96" height="2" fill="url(#i235)"/><rect x="1171" y="293" width="99" height="2" fill="url(#i236)"/><rect x="1170" y="295" width="104" height="2" fill="url(#i237)"/><rect x="1169" y="297" width="109" height="2" fill="url(#i238)"/><rect x="1168" y="299" width="113" height="2" fill="url(#i239)"/><rect x="1167" y="301" width="118" height="2" fill="url(#i240)"/><rect x="1167" y="303" width="121" height="2" fill="url(#i241)"/><rect x="1166" y="305" width="126" height="2" fill="url(#i242)"/><rect x="1165" y="307" width="131" height="2" fill="url(#i243)"/><rect x="1164" y="309" width="135" height="2" fill="url(#i244)"/><rect x="1163" y="311" width="140" height="2" fill="url(#i245)"/><rect x="1163" y="313" width="144" height="2" fill="url(#i246)"/><rect x="1162" y="315" width="148" height="2" fill="url(#i247)"/><rect x="1161" y="317" width="153" height="2" fill="url(#i248)"/><rect x="1160" y="319" width="157" height="2" fill="url(#i249)"/><rect x="1159" y="321" width="162" height="2" fill="url(#i250)"/><rect x="1159" y="323" width="166" height="2" fill="url(#i251)"/><rect x="1158" y="325" width="170" height="2" fill="url(#i252)"/><rect x="1157" y="327" width="175" height="2" fill="url(#i253)"/><rect x="1156" y="329" width="179" height="2" fill="url(#i254)"/><rect x="1155" y="331" width="184" height="2" fill="url(#i255)"/><rect x="1155" y="333" width="188" height="2" fill="url(#i256)"/><rect x="1154" y="335" width="192" height="2" fill="url(#i257)"/><rect x="1153" y="337" width="197" height="2" fill="url(#i258)"/><rect x="1152" y="339" width="201" height="2" fill="url(#i259)"/><rect x="1151" y="341" width="206" height="2" fill="url(#i260)"/><rect x="1151" y="343" width="210" height="2" fill="url(#i261)"/><rect x="1150" y="345" width="214" height="2" fill="url(#i262)"/><rect x="1149" y="347" width="219" height="2" fill="url(#i263)"/><rect x="1148" y="349" width="224" height="2" fill="url(#i264)"/><rect x="1147" y="351" width="228" height="2" fill="url(#i265)"/><rect x="1147" y="353" width="232" height="2" fill="url(#i266)"/><rect x="1146" y="355" width="236" height="2" fill="url(#i267)"/><rect x="1145" y="357" width="241" height="2" fill="url(#i268)"/><rect x="1144" y="359" width="246" height="2" fill="url(#i269)"/><rect x="1143" y="361" width="250" height="2" fill="url(#i270)"/><rect x="1143" y="363" width="254" height="2" fill="url(#i271)"/><rect x="1142" y="365" width="258" height="2" fill="url(#i272)"/><rect x="1141" y="367" width="263" height="2" fill="url(#i273)"/><rect x="1140" y="369" width="268" height="2" fill="url(#i274)"/><rect x="1139" y="371" width="272" height="2" fill="url(#i275)"/><rect x="1139" y="373" width="276" height="2" fill="url(#i276)"/><rect x="1138" y="375" width="281" height="2" fill="url(#i277)"/><rect x="1137" y="377" width="285" height="2" fill="url(#i278)"/><rect x="1136" y="379" width="290" height="2" fill="url(#i279)"/><rect x="1135" y="381" width="294" height="2" fill="url(#i280)"/><rect x="1135" y="383" width="298" height="2" fill="url(#i281)"/><rect x="1134" y="385" width="303" height="2" fill="url(#i282)"/><rect x="1133" y="387" width="307" height="2" fill="url(#i283)"/><rect x="1132" y="389" width="311" height="2" fill="url(#i284)"/><rect x="1131" y="391" width="310" height="2" fill="url(#i285)"/><rect x="1131" y="393" width="305" height="2" fill="url(#i286)"/><rect x="1130" y="395" width="301" height="2" fill="url(#i287)"/><rect x="1129" y="397" width="297" height="2" fill="url(#i288)"/><rect x="1128" y="399" width="293" height="2" fill="url(#i289)"/><rect x="1128" y="401" width="287" height="2" fill="url(#i290)"/><rect x="1127" y="403" width="283" height="2" fill="url(#i291)"/><rect x="1126" y="405" width="279" height="2" fill="url(#i292)"/><rect x="1125" y="407" width="275" height="2" fill="url(#i293)"/><rect x="1124" y="409" width="271" height="2" fill="url(#i294)"/><rect x="1124" y="411" width="265" height="2" fill="url(#i295)"/><rect x="1123" y="413" width="261" height="2" fill="url(#i296)"/><rect x="1122" y="415" width="257" height="2" fill="url(#i297)"/><rect x="1121" y="417" width="253" height="2" fill="url(#i298)"/><rect x="1120" y="419" width="249" height="2" fill="url(#i299)"/><rect x="1120" y="421" width="243" height="2" fill="url(#i300)"/><rect x="1119" y="423" width="239" height="2" fill="url(#i301)"/><rect x="1118" y="425" width="235" height="2" fill="url(#i302)"/><rect x="1117" y="427" width="231" height="2" fill="url(#i303)"/><rect x="1116" y="429" width="226" height="2" fill="url(#i304)"/><rect x="1116" y="431" width="221" height="2" fill="url(#i305)"/><rect x="1115" y="433" width="217" height="2" fill="url(#i306)"/><rect x="1114" y="435" width="213" height="2" fill="url(#i307)"/><rect x="1113" y="437" width="209" height="2" fill="url(#i308)"/><rect x="1112" y="439" width="204" height="2" fill="url(#i309)"/><rect x="1112" y="441" width="199" height="2" fill="url(#i310)"/><rect x="1111" y="443" width="195" height="2" fill="url(#i311)"/><rect x="1110" y="445" width="191" height="2" fill="url(#i312)"/><rect x="1109" y="447" width="187" height="2" fill="url(#i313)"/><rect x="1108" y="449" width="182" height="2" fill="url(#i314)"/><rect x="1108" y="451" width="177" height="2" fill="url(#i315)"/><rect x="1107" y="453" width="173" height="2" fill="url(#i316)"/><rect x="1106" y="455" width="169" height="2" fill="url(#i317)"/><rect x="1105" y="457" width="165" height="2" fill="url(#i318)"/><rect x="1104" y="459" width="160" height="2" fill="url(#i319)"/><rect x="1104" y="461" width="155" height="2" fill="url(#i320)"/><rect x="1103" y="463" width="151" height="2" fill="url(#i321)"/><rect x="1102" y="465" width="147" height="2" fill="url(#i322)"/><rect x="1101" y="467" width="143" height="2" fill="url(#i323)"/><rect x="1100" y="469" width="138" height="2" fill="url(#i324)"/><rect x="1100" y="471" width="133" height="2" fill="url(#i325)"/><rect x="1099" y="473" width="129" height="2" fill="url(#i326)"/><rect x="1098" y="475" width="125" height="2" fill="url(#i327)"/><rect x="1097" y="477" width="121" height="2" fill="url(#i328)"/><rect x="1096" y="479" width="116" height="2" fill="url(#i329)"/><rect x="1096" y="481" width="111" height="2" fill="url(#i330)"/><rect x="1095" y="483" width="107" height="2" fill="url(#i331)"/><rect x="1094" y="485" width="103" height="2" fill="url(#i332)"/><rect x="1093" y="487" width="98" height="2" fill="url(#i333)"/><rect x="1092" y="489" width="94" height="2" fill="url(#i334)"/><rect x="1092" y="491" width="89" height="2" fill="url(#i335)"/><rect x="1091" y="493" width="85" height="2" fill="url(#i336)"/><rect x="1090" y="495" width="81" height="2" fill="url(#i337)"/><rect x="1089" y="497" width="76" height="2" fill="url(#i338)"/><rect x="1088" y="499" width="72" height="2" fill="url(#i339)"/><rect x="1088" y="501" width="67" height="2" fill="url(#i340)"/><rect x="1087" y="503" width="63" height="2" fill="url(#i341)"/><rect x="1086" y="505" width="59" height="2" fill="url(#i342)"/><rect x="1085" y="507" width="54" height="2" fill="url(#i343)"/><rect x="1084" y="509" width="50" height="2" fill="url(#i344)"/><rect x="1084" y="511" width="45" height="2" fill="url(#i345)"/><rect x="1083" y="513" width="41" height="2" fill="url(#i346)"/><rect x="1082" y="515" width="37" height="2" fill="url(#i347)"/><rect x="1081" y="517" width="32" height="2" fill="url(#i348)"/><rect x="1080" y="519" width="28" height="2" fill="url(#i349)"/><rect x="1080" y="521" width="23" height="2" fill="url(#i350)"/><rect x="1079" y="523" width="19" height="2" fill="url(#i351)"/><rect x="1078" y="525" width="15" height="2" fill="url(#i352)"/><rect x="1077" y="527" width="10" height="2" fill="url(#i353)"/><rect x="1077" y="529" width="5" height="1" fill="url(#i354)"/></g><rect x="968.5" y="127.5" width="621.8" height="434.3" fill="none" stroke="#a6a6a6" stroke-width="1.3"/><rect x="966.7" y="562" width="1.5" height="4.5" fill="#c8c8c8"/><rect x="963" y="560.1" width="5" height="1.5" fill="#c8c8c8"/><rect x="1040.8" y="562" width="1.5" height="4.5" fill="#c8c8c8"/><rect x="963" y="508.6" width="5" height="1.5" fill="#c8c8c8"/><rect x="1114.8" y="562" width="1.5" height="4.5" fill="#c8c8c8"/><rect x="963" y="457.1" width="5" height="1.5" fill="#c8c8c8"/><rect x="1188.8" y="562" width="1.5" height="4.5" fill="#c8c8c8"/><rect x="963" y="405.6" width="5" height="1.5" fill="#c8c8c8"/><rect x="1262.9" y="562" width="1.5" height="4.5" fill="#c8c8c8"/><rect x="963" y="354.1" width="5" height="1.5" fill="#c8c8c8"/><rect x="1337.0" y="562" width="1.5" height="4.5" fill="#c8c8c8"/><rect x="963" y="302.6" width="5" height="1.5" fill="#c8c8c8"/><rect x="1411.0" y="562" width="1.5" height="4.5" fill="#c8c8c8"/><rect x="963" y="251.1" width="5" height="1.5" fill="#c8c8c8"/><rect x="1485.0" y="562" width="1.5" height="4.5" fill="#c8c8c8"/><rect x="963" y="199.6" width="5" height="1.5" fill="#c8c8c8"/><rect x="1559.1" y="562" width="1.5" height="4.5" fill="#c8c8c8"/><rect x="963" y="148.1" width="5" height="1.5" fill="#c8c8c8"/><rect x="1182.7" y="244.7" width="12.6" height="12.6" fill="none" stroke="#fff" stroke-width="1.5"/><rect x="1186.5" y="301.3" width="12.6" height="12.6" fill="none" stroke="#fff" stroke-width="1.5"/><rect x="1238.5" y="299.6" width="12.6" height="12.6" fill="none" stroke="#fff" stroke-width="1.5"/><rect x="1271.6" y="293.7" width="12.6" height="12.6" fill="none" stroke="#fff" stroke-width="1.5"/><rect x="1292.0" y="308.9" width="12.6" height="12.6" fill="none" stroke="#fff" stroke-width="1.5"/><rect x="1311.6" y="327.1" width="12.6" height="12.6" fill="none" stroke="#fff" stroke-width="1.5"/><rect x="1340.6" y="344.4" width="12.6" height="12.6" fill="none" stroke="#fff" stroke-width="1.5"/><rect x="1212.7" y="333.0" width="12.6" height="12.6" fill="none" stroke="#fff" stroke-width="1.5"/><rect x="1155.1" y="368.2" width="12.6" height="12.6" fill="none" stroke="#fff" stroke-width="1.5"/><rect x="1241.6" y="369.9" width="12.6" height="12.6" fill="none" stroke="#fff" stroke-width="1.5"/><rect x="1257.1" y="365.4" width="12.6" height="12.6" fill="none" stroke="#fff" stroke-width="1.5"/><rect x="1127.5" y="385.1" width="12.6" height="12.6" fill="none" stroke="#fff" stroke-width="1.5"/><rect x="1302.3" y="393.0" width="12.6" height="12.6" fill="none" stroke="#fff" stroke-width="1.5"/><rect x="1358.5" y="390.9" width="12.6" height="12.6" fill="none" stroke="#fff" stroke-width="1.5"/><rect x="1434.4" y="383.7" width="12.6" height="12.6" fill="none" stroke="#fff" stroke-width="1.5"/><rect x="1114.4" y="415.1" width="12.6" height="12.6" fill="none" stroke="#fff" stroke-width="1.5"/><rect x="1145.8" y="417.1" width="12.6" height="12.6" fill="none" stroke="#fff" stroke-width="1.5"/><rect x="1159.2" y="423.0" width="12.6" height="12.6" fill="none" stroke="#fff" stroke-width="1.5"/><rect x="1176.1" y="440.3" width="12.6" height="12.6" fill="none" stroke="#fff" stroke-width="1.5"/><rect x="1237.5" y="427.1" width="12.6" height="12.6" fill="none" stroke="#fff" stroke-width="1.5"/><rect x="1121.6" y="455.1" width="12.6" height="12.6" fill="none" stroke="#fff" stroke-width="1.5"/><rect x="1197.8" y="474.7" width="12.6" height="12.6" fill="none" stroke="#fff" stroke-width="1.5"/><rect x="1103.0" y="482.0" width="12.6" height="12.6" fill="none" stroke="#fff" stroke-width="1.5"/><rect x="1071.6" y="522.7" width="12.6" height="12.6" fill="none" stroke="#fff" stroke-width="1.5"/><rect x="1193.2" y="384.9" width="13" height="13" fill="none" stroke="#000" stroke-width="2.2"/><rect x="1194.7" y="386.4" width="10" height="10" fill="#333" stroke="#fff" stroke-width="1"/><ellipse cx="1198.7" cy="394.4" rx="4.4" ry="3.6" fill="#c8c8c8" stroke="#111" stroke-width="1"/><ellipse cx="1200.7" cy="393.4" rx="4.4" ry="3.6" fill="#aaa" stroke="#111" stroke-width="1"/><ellipse cx="1200.2" cy="390.9" rx="4.4" ry="3.6" fill="#999" stroke="#111" stroke-width="1"/><ellipse cx="1215.5" cy="235.5" rx="4.2" ry="3.8" fill="#00ff00" stroke="#000" stroke-width="1.1"/><ellipse cx="1209.3" cy="301.0" rx="4.2" ry="3.8" fill="#469449" stroke="#000" stroke-width="1.1"/><ellipse cx="1258.3" cy="293.8" rx="4.2" ry="3.8" fill="#9dbc40" stroke="#000" stroke-width="1.1"/><ellipse cx="1288.3" cy="282.1" rx="4.2" ry="3.8" fill="#ffff00" stroke="#000" stroke-width="1.1"/><ellipse cx="1305.2" cy="296.6" rx="4.2" ry="3.8" fill="#e7c71f" stroke="#000" stroke-width="1.1"/><ellipse cx="1320.3" cy="314.1" rx="4.2" ry="3.8" fill="#e0a32e" stroke="#000" stroke-width="1.1"/><ellipse cx="1346.2" cy="332.4" rx="4.2" ry="3.8" fill="#d67e2c" stroke="#000" stroke-width="1.1"/><ellipse cx="1228.3" cy="334.8" rx="4.2" ry="3.8" fill="#576c43" stroke="#000" stroke-width="1.1"/><ellipse cx="1171.7" cy="376.9" rx="4.2" ry="3.8" fill="#67bdaa" stroke="#000" stroke-width="1.1"/><ellipse cx="1246.2" cy="372.8" rx="4.2" ry="3.8" fill="#c29682" stroke="#000" stroke-width="1.1"/><ellipse cx="1263.4" cy="368.3" rx="4.2" ry="3.8" fill="#735244" stroke="#000" stroke-width="1.1"/><ellipse cx="1144.1" cy="396.9" rx="4.2" ry="3.8" fill="#00ffff" stroke="#000" stroke-width="1.1"/><ellipse cx="1295.5" cy="396.9" rx="4.2" ry="3.8" fill="#c15a63" stroke="#000" stroke-width="1.1"/><ellipse cx="1362.4" cy="393.4" rx="4.2" ry="3.8" fill="#af363c" stroke="#000" stroke-width="1.1"/><ellipse cx="1439.3" cy="379.0" rx="4.2" ry="3.8" fill="#ff0000" stroke="#000" stroke-width="1.1"/><ellipse cx="1131.4" cy="428.3" rx="4.2" ry="3.8" fill="#0885a1" stroke="#000" stroke-width="1.1"/><ellipse cx="1157.2" cy="426.9" rx="4.2" ry="3.8" fill="#627a9d" stroke="#000" stroke-width="1.1"/><ellipse cx="1166.6" cy="433.8" rx="4.2" ry="3.8" fill="#8580b1" stroke="#000" stroke-width="1.1"/><ellipse cx="1168.3" cy="427.6" rx="4.2" ry="3.8" fill="#000000" stroke="#000" stroke-width="1.1"/><ellipse cx="1165.5" cy="457.9" rx="4.2" ry="3.8" fill="#5e3c6c" stroke="#000" stroke-width="1.1"/><ellipse cx="1231.7" cy="436.9" rx="4.2" ry="3.8" fill="#bb5695" stroke="#000" stroke-width="1.1"/><ellipse cx="1131.4" cy="466.2" rx="4.2" ry="3.8" fill="#505ba6" stroke="#000" stroke-width="1.1"/><ellipse cx="1187.2" cy="489.3" rx="4.2" ry="3.8" fill="#ff00ff" stroke="#000" stroke-width="1.1"/><ellipse cx="1110.3" cy="497.9" rx="4.2" ry="3.8" fill="#383d96" stroke="#000" stroke-width="1.1"/><ellipse cx="1083.4" cy="535.0" rx="4.2" ry="3.8" fill="#0000ff" stroke="#000" stroke-width="1.1"/><rect x="1371.5" y="131.5" width="213.500" height="166" fill="#242424" stroke="#3a3a3a" stroke-width="1.5"/><g clip-path="url(#cil)"><rect x="1374" y="134" width="209" height="3" fill="url(#p355)"/><rect x="1374" y="137" width="209" height="3" fill="url(#p356)"/><rect x="1374" y="140" width="209" height="3" fill="url(#p357)"/><rect x="1374" y="143" width="209" height="3" fill="url(#p358)"/><rect x="1374" y="146" width="209" height="3" fill="url(#p359)"/><rect x="1374" y="149" width="209" height="3" fill="url(#p360)"/><rect x="1374" y="152" width="209" height="3" fill="url(#p361)"/><rect x="1374" y="155" width="209" height="3" fill="url(#p362)"/><rect x="1374" y="158" width="209" height="3" fill="url(#p363)"/><rect x="1374" y="161" width="209" height="3" fill="url(#p364)"/><rect x="1374" y="164" width="209" height="3" fill="url(#p365)"/><rect x="1374" y="167" width="209" height="3" fill="url(#p366)"/><rect x="1374" y="170" width="209" height="3" fill="url(#p367)"/><rect x="1374" y="173" width="209" height="3" fill="url(#p368)"/><rect x="1374" y="176" width="209" height="3" fill="url(#p369)"/><rect x="1374" y="179" width="209" height="3" fill="url(#p370)"/><rect x="1374" y="182" width="209" height="3" fill="url(#p371)"/><rect x="1374" y="185" width="209" height="3" fill="url(#p372)"/><rect x="1374" y="188" width="209" height="3" fill="url(#p373)"/><rect x="1374" y="191" width="209" height="3" fill="url(#p374)"/><rect x="1374" y="194" width="209" height="3" fill="url(#p375)"/><rect x="1374" y="197" width="209" height="3" fill="url(#p376)"/><rect x="1374" y="200" width="209" height="3" fill="url(#p377)"/><rect x="1374" y="203" width="209" height="3" fill="url(#p378)"/><rect x="1374" y="206" width="209" height="3" fill="url(#p379)"/><rect x="1374" y="209" width="209" height="3" fill="url(#p380)"/><rect x="1374" y="212" width="209" height="3" fill="url(#p381)"/><rect x="1374" y="215" width="209" height="3" fill="url(#p382)"/><rect x="1374" y="218" width="209" height="3" fill="url(#p383)"/><rect x="1374" y="221" width="209" height="3" fill="url(#p384)"/><rect x="1374" y="224" width="209" height="3" fill="url(#p385)"/><rect x="1374" y="227" width="209" height="3" fill="url(#p386)"/><rect x="1374" y="230" width="209" height="3" fill="url(#p387)"/><rect x="1374" y="233" width="209" height="3" fill="url(#p388)"/><rect x="1374" y="236" width="209" height="3" fill="url(#p389)"/><rect x="1374" y="239" width="209" height="3" fill="url(#p390)"/><rect x="1374" y="242" width="209" height="3" fill="url(#p391)"/><rect x="1374" y="245" width="209" height="3" fill="url(#p392)"/><rect x="1374" y="248" width="209" height="3" fill="url(#p393)"/><rect x="1374" y="251" width="209" height="3" fill="url(#p394)"/><rect x="1374" y="254" width="209" height="3" fill="url(#p395)"/><rect x="1374" y="257" width="209" height="3" fill="url(#p396)"/><rect x="1374" y="260" width="209" height="3" fill="url(#p397)"/><rect x="1374" y="263" width="209" height="3" fill="url(#p398)"/><rect x="1374" y="266" width="209" height="3" fill="url(#p399)"/><rect x="1374" y="269" width="209" height="3" fill="url(#p400)"/><rect x="1374" y="272" width="209" height="3" fill="url(#p401)"/><rect x="1374" y="275" width="209" height="3" fill="url(#p402)"/><rect x="1374" y="278" width="209" height="3" fill="url(#p403)"/><rect x="1374" y="281" width="209" height="3" fill="url(#p404)"/><rect x="1374" y="284" width="209" height="3" fill="url(#p405)"/><rect x="1374" y="287" width="209" height="3" fill="url(#p406)"/><rect x="1374" y="290" width="209" height="3" fill="url(#p407)"/><rect x="1374" y="293" width="209" height="2" fill="url(#p408)"/></g><g clip-path="url(#cit)"><rect x="1374" y="149" width="3" height="3" fill="url(#q409)"/><rect x="1374" y="152" width="8" height="3" fill="url(#q410)"/><rect x="1374" y="155" width="13" height="3" fill="url(#q411)"/><rect x="1374" y="158" width="18" height="3" fill="url(#q412)"/><rect x="1374" y="161" width="23" height="3" fill="url(#q413)"/><rect x="1374" y="164" width="27" height="3" fill="url(#q414)"/><rect x="1374" y="167" width="32" height="3" fill="url(#q415)"/><rect x="1374" y="170" width="37" height="3" fill="url(#q416)"/><rect x="1374" y="173" width="42" height="3" fill="url(#q417)"/><rect x="1374" y="176" width="47" height="3" fill="url(#q418)"/><rect x="1374" y="179" width="52" height="3" fill="url(#q419)"/><rect x="1374" y="182" width="57" height="3" fill="url(#q420)"/><rect x="1374" y="185" width="62" height="3" fill="url(#q421)"/><rect x="1374" y="188" width="66" height="3" fill="url(#q422)"/><rect x="1374" y="191" width="71" height="3" fill="url(#q423)"/><rect x="1374" y="194" width="76" height="3" fill="url(#q424)"/><rect x="1374" y="197" width="81" height="3" fill="url(#q425)"/><rect x="1374" y="200" width="86" height="3" fill="url(#q426)"/><rect x="1374" y="203" width="91" height="3" fill="url(#q427)"/><rect x="1374" y="206" width="96" height="3" fill="url(#q428)"/><rect x="1374" y="209" width="101" height="3" fill="url(#q429)"/><rect x="1374" y="212" width="105" height="3" fill="url(#q430)"/><rect x="1374" y="215" width="110" height="3" fill="url(#q431)"/><rect x="1374" y="218" width="115" height="3" fill="url(#q432)"/><rect x="1374" y="221" width="120" height="3" fill="url(#q433)"/><rect x="1374" y="224" width="125" height="3" fill="url(#q434)"/><rect x="1374" y="227" width="130" height="3" fill="url(#q435)"/><rect x="1374" y="230" width="135" height="3" fill="url(#q436)"/><rect x="1374" y="233" width="139" height="3" fill="url(#q437)"/><rect x="1374" y="236" width="144" height="3" fill="url(#q438)"/><rect x="1374" y="239" width="149" height="3" fill="url(#q439)"/><rect x="1374" y="242" width="154" height="3" fill="url(#q440)"/><rect x="1374" y="245" width="159" height="3" fill="url(#q441)"/><rect x="1374" y="248" width="164" height="3" fill="url(#q442)"/><rect x="1374" y="251" width="169" height="3" fill="url(#q443)"/><rect x="1374" y="254" width="174" height="3" fill="url(#q444)"/><rect x="1374" y="257" width="178" height="3" fill="url(#q445)"/><rect x="1374" y="260" width="183" height="3" fill="url(#q446)"/><rect x="1374" y="263" width="188" height="3" fill="url(#q447)"/><rect x="1374" y="266" width="193" height="3" fill="url(#q448)"/><rect x="1374" y="269" width="198" height="3" fill="url(#q449)"/><rect x="1374" y="272" width="203" height="3" fill="url(#q450)"/><rect x="1374" y="275" width="208" height="3" fill="url(#q451)"/><rect x="1374" y="278" width="209" height="3" fill="url(#q452)"/><rect x="1374" y="281" width="209" height="3" fill="url(#q453)"/><rect x="1374" y="284" width="209" height="3" fill="url(#q454)"/><rect x="1374" y="287" width="209" height="3" fill="url(#q455)"/><rect x="1374" y="290" width="209" height="3" fill="url(#q456)"/><rect x="1374" y="293" width="209" height="2" fill="url(#q457)"/></g><g clip-path="url(#ci)"><rect x="1470.5" y="208.0" width="12.6" height="12.6" fill="none" stroke="#fff" stroke-width="1.5"/><rect x="1545.0" y="272.7" width="12.6" height="12.6" fill="none" stroke="#fff" stroke-width="1.5"/><ellipse cx="1407.4" cy="194.0" rx="4.2" ry="3.9" fill="#9dbc40" stroke="#000" stroke-width="1.1"/><ellipse cx="1514.4" cy="143.4" rx="4.2" ry="3.9" fill="#ffff00" stroke="#000" stroke-width="1.1"/><ellipse cx="1576.2" cy="203.4" rx="4.2" ry="3.9" fill="#e7c71f" stroke="#000" stroke-width="1.1"/></g><rect x="1373.5" y="133.5" width="209.5" height="162" fill="none" stroke="#9a9a9a" stroke-width="1.2"/><rect x="1344" y="532.5" width="242" height="24" fill="#333"/></svg>
<div class="t" style="left:1345.00px;top:535.66px;font-size:18.6px;color:#f0f0f0;transform:scaleX(1.0173);">RGB Triplet: 255, 255, 0</div>
<div class="t" style="left:962.77px;top:569.13px;font-size:13.2px;color:#d0d0d0;transform:scaleX(0.9900);">0</div>
<div class="t" style="left:1031.37px;top:569.13px;font-size:13.2px;color:#d0d0d0;transform:scaleX(0.9900);">0.1</div>
<div class="t" style="left:944.33px;top:503.13px;font-size:13.2px;color:#d0d0d0;transform:scaleX(0.9900);">0.1</div>
<div class="t" style="left:1105.42px;top:569.13px;font-size:13.2px;color:#d0d0d0;transform:scaleX(0.9900);">0.2</div>
<div class="t" style="left:944.33px;top:451.63px;font-size:13.2px;color:#d0d0d0;transform:scaleX(0.9900);">0.2</div>
<div class="t" style="left:1179.47px;top:569.13px;font-size:13.2px;color:#d0d0d0;transform:scaleX(0.9900);">0.3</div>
<div class="t" style="left:944.33px;top:400.13px;font-size:13.2px;color:#d0d0d0;transform:scaleX(0.9900);">0.3</div>
<div class="t" style="left:1253.52px;top:569.13px;font-size:13.2px;color:#d0d0d0;transform:scaleX(0.9900);">0.4</div>
<div class="t" style="left:944.33px;top:348.63px;font-size:13.2px;color:#d0d0d0;transform:scaleX(0.9900);">0.4</div>
<div class="t" style="left:1327.57px;top:569.13px;font-size:13.2px;color:#d0d0d0;transform:scaleX(0.9900);">0.5</div>
<div class="t" style="left:944.33px;top:297.13px;font-size:13.2px;color:#d0d0d0;transform:scaleX(0.9900);">0.5</div>
<div class="t" style="left:1401.62px;top:569.13px;font-size:13.2px;color:#d0d0d0;transform:scaleX(0.9900);">0.6</div>
<div class="t" style="left:944.33px;top:245.63px;font-size:13.2px;color:#d0d0d0;transform:scaleX(0.9900);">0.6</div>
<div class="t" style="left:1475.67px;top:569.13px;font-size:13.2px;color:#d0d0d0;transform:scaleX(0.9900);">0.7</div>
<div class="t" style="left:944.33px;top:194.13px;font-size:13.2px;color:#d0d0d0;transform:scaleX(0.9900);">0.7</div>
<div class="t" style="left:1549.72px;top:569.13px;font-size:13.2px;color:#d0d0d0;transform:scaleX(0.9900);">0.8</div>
<div class="t" style="left:944.33px;top:142.63px;font-size:13.2px;color:#d0d0d0;transform:scaleX(0.9900);">0.8</div>
<div class="t" style="left:955.23px;top:554.83px;font-size:13.2px;color:#d0d0d0;transform:scaleX(0.9900);">0</div>
<div class="b" style="left:308px;top:605px;width:1290px;height:199px;overflow:hidden;background:#424242"><div class="b" style="left:0.00px;top:0.00px;width:1290.00px;height:25.00px;background:linear-gradient(#2f2f2f 0,#2c2c2c 50%,#151515 54%,#181818 100%);"></div><div class="b" style="left:0.00px;top:25.00px;width:1290.00px;height:23.07px;background:#424242;"></div><div class="b" style="left:0.00px;top:47.77px;width:1290.00px;height:23.07px;background:#818181;"></div><div class="b" style="left:0.00px;top:70.54px;width:1290.00px;height:23.07px;background:#424242;"></div><div class="b" style="left:0.00px;top:93.31px;width:1290.00px;height:23.07px;background:#818181;"></div><div class="b" style="left:0.00px;top:116.08px;width:1290.00px;height:23.07px;background:#424242;"></div><div class="b" style="left:0.00px;top:138.85px;width:1290.00px;height:23.07px;background:#818181;"></div><div class="b" style="left:0.00px;top:161.62px;width:1290.00px;height:23.07px;background:#424242;"></div><div class="b" style="left:0.00px;top:0.00px;width:10.10px;height:25.00px;background:#000;"></div><div class="b" style="left:0.00px;top:25.00px;width:10.10px;height:159.50px;background:linear-gradient(90deg,#333,#262626);"></div><div class="b" style="left:540.70px;top:139.45px;width:60.60px;height:20.57px;background:#f1f1f1;"></div><div class="b" style="left:602.60px;top:139.45px;width:37.20px;height:20.57px;background:#f1f1f1;"></div><div class="b" style="left:641.10px;top:139.45px;width:62.60px;height:20.57px;background:#f1f1f1;"></div><div class="b" style="left:705.00px;top:139.45px;width:67.60px;height:20.57px;background:#f1f1f1;"></div><div class="b" style="left:773.90px;top:139.45px;width:33.00px;height:20.57px;background:#f1f1f1;"></div><div class="b" style="left:808.20px;top:139.45px;width:62.60px;height:20.57px;background:#f1f1f1;"></div><div class="b" style="left:872.10px;top:139.45px;width:67.60px;height:20.57px;background:#f1f1f1;"></div><div class="b" style="left:941.00px;top:139.45px;width:30.90px;height:20.57px;background:#f1f1f1;"></div><div class="b" style="left:973.20px;top:139.45px;width:37.00px;height:20.57px;background:#f1f1f1;"></div><div class="t" style="left:86.50px;top:7.53px;font-size:12.6px;color:#f4f4f4;-webkit-text-stroke-width:.1px;transform:scaleX(0.76)">White</div><div class="t" style="left:124.40px;top:7.53px;font-size:12.6px;color:#f4f4f4;-webkit-text-stroke-width:.1px;transform:scaleX(0.76)">Gray 80</div><div class="t" style="left:164.00px;top:7.53px;font-size:12.6px;color:#f4f4f4;-webkit-text-stroke-width:.1px;transform:scaleX(0.76)">Gray 65</div><div class="t" style="left:203.60px;top:7.53px;font-size:12.6px;color:#f4f4f4;-webkit-text-stroke-width:.1px;transform:scaleX(0.76)">Gray 50</div><div class="t" style="left:243.20px;top:7.53px;font-size:12.6px;color:#f4f4f4;-webkit-text-stroke-width:.1px;transform:scaleX(0.76)">Gray 35</div><div class="t" style="left:282.80px;top:7.53px;font-size:12.6px;color:#f4f4f4;-webkit-text-stroke-width:.1px;transform:scaleX(0.76)">Black</div><div class="t" style="left:311.70px;top:7.53px;font-size:12.6px;color:#f4f4f4;-webkit-text-stroke-width:.1px;transform:scaleX(0.76)">Dark Skin</div><div class="t" style="left:358.70px;top:7.53px;font-size:12.6px;color:#f4f4f4;-webkit-text-stroke-width:.1px;transform:scaleX(0.76)">Light Skin</div><div class="t" style="left:406.60px;top:7.53px;font-size:12.6px;color:#f4f4f4;-webkit-text-stroke-width:.1px;transform:scaleX(0.76)">Blue Sky</div><div class="t" style="left:449.00px;top:7.53px;font-size:12.6px;color:#f4f4f4;-webkit-text-stroke-width:.1px;transform:scaleX(0.76)">Foliage</div><div class="t" style="left:486.20px;top:7.53px;font-size:12.6px;color:#f4f4f4;-webkit-text-stroke-width:.1px;transform:scaleX(0.76)">Blue Flower</div><div class="t" style="left:544.00px;top:7.53px;font-size:12.6px;color:#f4f4f4;-webkit-text-stroke-width:.1px;transform:scaleX(0.76)">Bluish Green</div><div class="t" style="left:605.90px;top:7.53px;font-size:12.6px;color:#f4f4f4;-webkit-text-stroke-width:.1px;transform:scaleX(0.76)">Orange</div><div class="t" style="left:644.40px;top:7.53px;font-size:12.6px;color:#f4f4f4;-webkit-text-stroke-width:.1px;transform:scaleX(0.76)">Purplish Blue</div><div class="t" style="left:708.30px;top:7.53px;font-size:12.6px;color:#f4f4f4;-webkit-text-stroke-width:.1px;transform:scaleX(0.76)">Moderate Red</div><div class="t" style="left:777.20px;top:7.53px;font-size:12.6px;color:#f4f4f4;-webkit-text-stroke-width:.1px;transform:scaleX(0.76)">Purple</div><div class="t" style="left:811.50px;top:7.53px;font-size:12.6px;color:#f4f4f4;-webkit-text-stroke-width:.1px;transform:scaleX(0.76)">Yellow Green</div><div class="t" style="left:875.40px;top:7.53px;font-size:12.6px;color:#f4f4f4;-webkit-text-stroke-width:.1px;transform:scaleX(0.76)">Orange Yellow</div><div class="t" style="left:944.30px;top:7.53px;font-size:12.6px;color:#f4f4f4;-webkit-text-stroke-width:.1px;transform:scaleX(0.76)">Blue</div><div class="t" style="left:976.50px;top:7.53px;font-size:12.6px;color:#f4f4f4;-webkit-text-stroke-width:.1px;transform:scaleX(0.76)">Green</div><div class="t" style="left:1014.80px;top:7.53px;font-size:12.6px;color:#f4f4f4;-webkit-text-stroke-width:.1px;transform:scaleX(0.76)">Red</div><div class="t" style="left:1047.40px;top:7.53px;font-size:12.6px;color:#f4f4f4;-webkit-text-stroke-width:.1px;transform:scaleX(0.76)">Yellow</div><div class="t" style="left:1085.80px;top:7.53px;font-size:12.6px;color:#f4f4f4;-webkit-text-stroke-width:.1px;transform:scaleX(0.76)">Magenta</div><div class="t" style="left:1130.30px;top:7.53px;font-size:12.6px;color:#f4f4f4;-webkit-text-stroke-width:.1px;transform:scaleX(0.76)">Cyan</div><div class="t" style="left:1163.40px;top:7.53px;font-size:12.6px;color:#f4f4f4;-webkit-text-stroke-width:.1px;transform:scaleX(0.76)">100% Red</div><div class="t" style="left:1212.40px;top:7.53px;font-size:12.6px;color:#f4f4f4;-webkit-text-stroke-width:.1px;transform:scaleX(0.76)">100% Green</div><div class="t" style="left:1272.30px;top:7.53px;font-size:12.6px;color:#f4f4f4;-webkit-text-stroke-width:.1px;transform:scaleX(0.76)">100% Blue</div><div class="t" style="left:12.00px;top:31.33px;font-size:12.6px;color:#f4f4f4;-webkit-text-stroke-width:.1px;transform:scaleX(0.785)">x: CIE31</div><div class="t" style="left:86.50px;top:31.33px;font-size:12.6px;color:#f4f4f4;-webkit-text-stroke-width:.1px;transform:scaleX(0.8)">0.31</div><div class="t" style="left:124.40px;top:31.33px;font-size:12.6px;color:#f4f4f4;-webkit-text-stroke-width:.1px;transform:scaleX(0.8)">0.31</div><div class="t" style="left:164.00px;top:31.33px;font-size:12.6px;color:#f4f4f4;-webkit-text-stroke-width:.1px;transform:scaleX(0.8)">0.32</div><div class="t" style="left:203.60px;top:31.33px;font-size:12.6px;color:#f4f4f4;-webkit-text-stroke-width:.1px;transform:scaleX(0.8)">0.32</div><div class="t" style="left:243.20px;top:31.33px;font-size:12.6px;color:#f4f4f4;-webkit-text-stroke-width:.1px;transform:scaleX(0.8)">0.32</div><div class="t" style="left:282.80px;top:31.33px;font-size:12.6px;color:#f4f4f4;-webkit-text-stroke-width:.1px;transform:scaleX(0.8)">0.27</div><div class="t" style="left:311.70px;top:31.33px;font-size:12.6px;color:#f4f4f4;-webkit-text-stroke-width:.1px;transform:scaleX(0.8)">0.40</div><div class="t" style="left:358.70px;top:31.33px;font-size:12.6px;color:#f4f4f4;-webkit-text-stroke-width:.1px;transform:scaleX(0.8)">0.38</div><div class="t" style="left:406.60px;top:31.33px;font-size:12.6px;color:#f4f4f4;-webkit-text-stroke-width:.1px;transform:scaleX(0.8)">0.26</div><div class="t" style="left:449.00px;top:31.33px;font-size:12.6px;color:#f4f4f4;-webkit-text-stroke-width:.1px;transform:scaleX(0.8)">0.35</div><div class="t" style="left:486.20px;top:31.33px;font-size:12.6px;color:#f4f4f4;-webkit-text-stroke-width:.1px;transform:scaleX(0.8)">0.27</div><div class="t" style="left:544.00px;top:31.33px;font-size:12.6px;color:#f4f4f4;-webkit-text-stroke-width:.1px;transform:scaleX(0.8)">0.28</div><div class="t" style="left:605.90px;top:31.33px;font-size:12.6px;color:#f4f4f4;-webkit-text-stroke-width:.1px;transform:scaleX(0.8)">0.51</div><div class="t" style="left:644.40px;top:31.33px;font-size:12.6px;color:#f4f4f4;-webkit-text-stroke-width:.1px;transform:scaleX(0.8)">0.22</div><div class="t" style="left:708.30px;top:31.33px;font-size:12.6px;color:#f4f4f4;-webkit-text-stroke-width:.1px;transform:scaleX(0.8)">0.44</div><div class="t" style="left:777.20px;top:31.33px;font-size:12.6px;color:#f4f4f4;-webkit-text-stroke-width:.1px;transform:scaleX(0.8)">0.27</div><div class="t" style="left:811.50px;top:31.33px;font-size:12.6px;color:#f4f4f4;-webkit-text-stroke-width:.1px;transform:scaleX(0.8)">0.39</div><div class="t" style="left:875.40px;top:31.33px;font-size:12.6px;color:#f4f4f4;-webkit-text-stroke-width:.1px;transform:scaleX(0.8)">0.48</div><div class="t" style="left:944.30px;top:31.33px;font-size:12.6px;color:#f4f4f4;-webkit-text-stroke-width:.1px;transform:scaleX(0.8)">0.19</div><div class="t" style="left:976.50px;top:31.33px;font-size:12.6px;color:#f4f4f4;-webkit-text-stroke-width:.1px;transform:scaleX(0.8)">0.33</div><div class="t" style="left:1014.80px;top:31.33px;font-size:12.6px;color:#f4f4f4;-webkit-text-stroke-width:.1px;transform:scaleX(0.8)">0.53</div><div class="t" style="left:1047.40px;top:31.33px;font-size:12.6px;color:#f4f4f4;-webkit-text-stroke-width:.1px;transform:scaleX(0.8)">0.46</div><div class="t" style="left:1085.80px;top:31.33px;font-size:12.6px;color:#f4f4f4;-webkit-text-stroke-width:.1px;transform:scaleX(0.8)">0.36</div><div class="t" style="left:1130.30px;top:31.33px;font-size:12.6px;color:#f4f4f4;-webkit-text-stroke-width:.1px;transform:scaleX(0.8)">0.22</div><div class="t" style="left:1163.40px;top:31.33px;font-size:12.6px;color:#f4f4f4;-webkit-text-stroke-width:.1px;transform:scaleX(0.8)">0.64</div><div class="t" style="left:1212.40px;top:31.33px;font-size:12.6px;color:#f4f4f4;-webkit-text-stroke-width:.1px;transform:scaleX(0.8)">0.33</div><div class="t" style="left:1272.30px;top:31.33px;font-size:12.6px;color:#f4f4f4;-webkit-text-stroke-width:.1px;transform:scaleX(0.8)">0.16</div><div class="t" style="left:12.00px;top:54.10px;font-size:12.6px;color:#f4f4f4;-webkit-text-stroke-width:.1px;transform:scaleX(0.785)">y: CIE31</div><div class="t" style="left:86.50px;top:54.10px;font-size:12.6px;color:#f4f4f4;-webkit-text-stroke-width:.1px;transform:scaleX(0.8)">0.32</div><div class="t" style="left:124.40px;top:54.10px;font-size:12.6px;color:#f4f4f4;-webkit-text-stroke-width:.1px;transform:scaleX(0.8)">0.33</div><div class="t" style="left:164.00px;top:54.10px;font-size:12.6px;color:#f4f4f4;-webkit-text-stroke-width:.1px;transform:scaleX(0.8)">0.33</div><div class="t" style="left:203.60px;top:54.10px;font-size:12.6px;color:#f4f4f4;-webkit-text-stroke-width:.1px;transform:scaleX(0.8)">0.33</div><div class="t" style="left:243.20px;top:54.10px;font-size:12.6px;color:#f4f4f4;-webkit-text-stroke-width:.1px;transform:scaleX(0.8)">0.33</div><div class="t" style="left:282.80px;top:54.10px;font-size:12.6px;color:#f4f4f4;-webkit-text-stroke-width:.1px;transform:scaleX(0.8)">0.26</div><div class="t" style="left:311.70px;top:54.10px;font-size:12.6px;color:#f4f4f4;-webkit-text-stroke-width:.1px;transform:scaleX(0.8)">0.37</div><div class="t" style="left:358.70px;top:54.10px;font-size:12.6px;color:#f4f4f4;-webkit-text-stroke-width:.1px;transform:scaleX(0.8)">0.36</div><div class="t" style="left:406.60px;top:54.10px;font-size:12.6px;color:#f4f4f4;-webkit-text-stroke-width:.1px;transform:scaleX(0.8)">0.26</div><div class="t" style="left:449.00px;top:54.10px;font-size:12.6px;color:#f4f4f4;-webkit-text-stroke-width:.1px;transform:scaleX(0.8)">0.44</div><div class="t" style="left:486.20px;top:54.10px;font-size:12.6px;color:#f4f4f4;-webkit-text-stroke-width:.1px;transform:scaleX(0.8)">0.24</div><div class="t" style="left:544.00px;top:54.10px;font-size:12.6px;color:#f4f4f4;-webkit-text-stroke-width:.1px;transform:scaleX(0.8)">0.36</div><div class="t" style="left:605.90px;top:54.10px;font-size:12.6px;color:#f4f4f4;-webkit-text-stroke-width:.1px;transform:scaleX(0.8)">0.44</div><div class="t" style="left:644.40px;top:54.10px;font-size:12.6px;color:#f4f4f4;-webkit-text-stroke-width:.1px;transform:scaleX(0.8)">0.18</div><div class="t" style="left:708.30px;top:54.10px;font-size:12.6px;color:#f4f4f4;-webkit-text-stroke-width:.1px;transform:scaleX(0.8)">0.32</div><div class="t" style="left:777.20px;top:54.10px;font-size:12.6px;color:#f4f4f4;-webkit-text-stroke-width:.1px;transform:scaleX(0.8)">0.20</div><div class="t" style="left:811.50px;top:54.10px;font-size:12.6px;color:#f4f4f4;-webkit-text-stroke-width:.1px;transform:scaleX(0.8)">0.52</div><div class="t" style="left:875.40px;top:54.10px;font-size:12.6px;color:#f4f4f4;-webkit-text-stroke-width:.1px;transform:scaleX(0.8)">0.48</div><div class="t" style="left:944.30px;top:54.10px;font-size:12.6px;color:#f4f4f4;-webkit-text-stroke-width:.1px;transform:scaleX(0.8)">0.12</div><div class="t" style="left:976.50px;top:54.10px;font-size:12.6px;color:#f4f4f4;-webkit-text-stroke-width:.1px;transform:scaleX(0.8)">0.50</div><div class="t" style="left:1014.80px;top:54.10px;font-size:12.6px;color:#f4f4f4;-webkit-text-stroke-width:.1px;transform:scaleX(0.8)">0.32</div><div class="t" style="left:1047.40px;top:54.10px;font-size:12.6px;color:#f4f4f4;-webkit-text-stroke-width:.1px;transform:scaleX(0.8)">0.51</div><div class="t" style="left:1085.80px;top:54.10px;font-size:12.6px;color:#f4f4f4;-webkit-text-stroke-width:.1px;transform:scaleX(0.8)">0.24</div><div class="t" style="left:1130.30px;top:54.10px;font-size:12.6px;color:#f4f4f4;-webkit-text-stroke-width:.1px;transform:scaleX(0.8)">0.26</div><div class="t" style="left:1163.40px;top:54.10px;font-size:12.6px;color:#f4f4f4;-webkit-text-stroke-width:.1px;transform:scaleX(0.8)">0.35</div><div class="t" style="left:1212.40px;top:54.10px;font-size:12.6px;color:#f4f4f4;-webkit-text-stroke-width:.1px;transform:scaleX(0.8)">0.63</div><div class="t" style="left:1272.30px;top:54.10px;font-size:12.6px;color:#f4f4f4;-webkit-text-stroke-width:.1px;transform:scaleX(0.8)">0.05</div><div class="t" style="left:12.00px;top:76.87px;font-size:12.6px;color:#f4f4f4;-webkit-text-stroke-width:.1px;transform:scaleX(0.785)">Y</div><div class="t" style="left:86.50px;top:76.87px;font-size:12.6px;color:#f4f4f4;-webkit-text-stroke-width:.1px;transform:scaleX(0.8)">428.71</div><div class="t" style="left:124.40px;top:76.87px;font-size:12.6px;color:#f4f4f4;-webkit-text-stroke-width:.1px;transform:scaleX(0.8)">332.12</div><div class="t" style="left:164.00px;top:76.87px;font-size:12.6px;color:#f4f4f4;-webkit-text-stroke-width:.1px;transform:scaleX(0.8)">274.21</div><div class="t" style="left:203.60px;top:76.87px;font-size:12.6px;color:#f4f4f4;-webkit-text-stroke-width:.1px;transform:scaleX(0.8)">217.54</div><div class="t" style="left:243.20px;top:76.87px;font-size:12.6px;color:#f4f4f4;-webkit-text-stroke-width:.1px;transform:scaleX(0.8)">154.30</div><div class="t" style="left:282.80px;top:76.87px;font-size:12.6px;color:#f4f4f4;-webkit-text-stroke-width:.1px;transform:scaleX(0.8)">0.44</div><div class="t" style="left:311.70px;top:76.87px;font-size:12.6px;color:#f4f4f4;-webkit-text-stroke-width:.1px;transform:scaleX(0.8)">45.45</div><div class="t" style="left:358.70px;top:76.87px;font-size:12.6px;color:#f4f4f4;-webkit-text-stroke-width:.1px;transform:scaleX(0.8)">155.07</div><div class="t" style="left:406.60px;top:76.87px;font-size:12.6px;color:#f4f4f4;-webkit-text-stroke-width:.1px;transform:scaleX(0.8)">84.97</div><div class="t" style="left:449.00px;top:76.87px;font-size:12.6px;color:#f4f4f4;-webkit-text-stroke-width:.1px;transform:scaleX(0.8)">60.00</div><div class="t" style="left:486.20px;top:76.87px;font-size:12.6px;color:#f4f4f4;-webkit-text-stroke-width:.1px;transform:scaleX(0.8)">104.17</div><div class="t" style="left:544.00px;top:76.87px;font-size:12.6px;color:#f4f4f4;-webkit-text-stroke-width:.1px;transform:scaleX(0.8)">188.24</div><div class="t" style="left:605.90px;top:76.87px;font-size:12.6px;color:#f4f4f4;-webkit-text-stroke-width:.1px;transform:scaleX(0.8)">121.14</div><div class="t" style="left:644.40px;top:76.87px;font-size:12.6px;color:#f4f4f4;-webkit-text-stroke-width:.1px;transform:scaleX(0.8)">53.01</div><div class="t" style="left:708.30px;top:76.87px;font-size:12.6px;color:#f4f4f4;-webkit-text-stroke-width:.1px;transform:scaleX(0.8)">80.90</div><div class="t" style="left:777.20px;top:76.87px;font-size:12.6px;color:#f4f4f4;-webkit-text-stroke-width:.1px;transform:scaleX(0.8)">26.45</div><div class="t" style="left:811.50px;top:76.87px;font-size:12.6px;color:#f4f4f4;-webkit-text-stroke-width:.1px;transform:scaleX(0.8)">191.73</div><div class="t" style="left:875.40px;top:76.87px;font-size:12.6px;color:#f4f4f4;-webkit-text-stroke-width:.1px;transform:scaleX(0.8)">184.24</div><div class="t" style="left:944.30px;top:76.87px;font-size:12.6px;color:#f4f4f4;-webkit-text-stroke-width:.1px;transform:scaleX(0.8)">25.47</div><div class="t" style="left:976.50px;top:76.87px;font-size:12.6px;color:#f4f4f4;-webkit-text-stroke-width:.1px;transform:scaleX(0.8)">104.77</div><div class="t" style="left:1014.80px;top:76.87px;font-size:12.6px;color:#f4f4f4;-webkit-text-stroke-width:.1px;transform:scaleX(0.8)">47.31</div><div class="t" style="left:1047.40px;top:76.87px;font-size:12.6px;color:#f4f4f4;-webkit-text-stroke-width:.1px;transform:scaleX(0.8)">253.46</div><div class="t" style="left:1085.80px;top:76.87px;font-size:12.6px;color:#f4f4f4;-webkit-text-stroke-width:.1px;transform:scaleX(0.8)">81.78</div><div class="t" style="left:1130.30px;top:76.87px;font-size:12.6px;color:#f4f4f4;-webkit-text-stroke-width:.1px;transform:scaleX(0.8)">85.75</div><div class="t" style="left:1163.40px;top:76.87px;font-size:12.6px;color:#f4f4f4;-webkit-text-stroke-width:.1px;transform:scaleX(0.8)">84.30</div><div class="t" style="left:1212.40px;top:76.87px;font-size:12.6px;color:#f4f4f4;-webkit-text-stroke-width:.1px;transform:scaleX(0.8)">314.03</div><div class="t" style="left:1272.30px;top:76.87px;font-size:12.6px;color:#f4f4f4;-webkit-text-stroke-width:.1px;transform:scaleX(0.8)">28.13</div><div class="t" style="left:12.00px;top:99.64px;font-size:12.6px;color:#f4f4f4;-webkit-text-stroke-width:.1px;transform:scaleX(0.765)">Target x:CIE31</div><div class="t" style="left:86.50px;top:99.64px;font-size:12.6px;color:#f4f4f4;-webkit-text-stroke-width:.1px;transform:scaleX(0.8)">0.31</div><div class="t" style="left:124.40px;top:99.64px;font-size:12.6px;color:#f4f4f4;-webkit-text-stroke-width:.1px;transform:scaleX(0.8)">0.31</div><div class="t" style="left:164.00px;top:99.64px;font-size:12.6px;color:#f4f4f4;-webkit-text-stroke-width:.1px;transform:scaleX(0.8)">0.31</div><div class="t" style="left:203.60px;top:99.64px;font-size:12.6px;color:#f4f4f4;-webkit-text-stroke-width:.1px;transform:scaleX(0.8)">0.31</div><div class="t" style="left:243.20px;top:99.64px;font-size:12.6px;color:#f4f4f4;-webkit-text-stroke-width:.1px;transform:scaleX(0.8)">0.31</div><div class="t" style="left:282.80px;top:99.64px;font-size:12.6px;color:#f4f4f4;-webkit-text-stroke-width:.1px;transform:scaleX(0.8)">0.31</div><div class="t" style="left:311.70px;top:99.64px;font-size:12.6px;color:#f4f4f4;-webkit-text-stroke-width:.1px;transform:scaleX(0.8)">0.40</div><div class="t" style="left:358.70px;top:99.64px;font-size:12.6px;color:#f4f4f4;-webkit-text-stroke-width:.1px;transform:scaleX(0.8)">0.38</div><div class="t" style="left:406.60px;top:99.64px;font-size:12.6px;color:#f4f4f4;-webkit-text-stroke-width:.1px;transform:scaleX(0.8)">0.25</div><div class="t" style="left:449.00px;top:99.64px;font-size:12.6px;color:#f4f4f4;-webkit-text-stroke-width:.1px;transform:scaleX(0.8)">0.34</div><div class="t" style="left:486.20px;top:99.64px;font-size:12.6px;color:#f4f4f4;-webkit-text-stroke-width:.1px;transform:scaleX(0.8)">0.27</div><div class="t" style="left:544.00px;top:99.64px;font-size:12.6px;color:#f4f4f4;-webkit-text-stroke-width:.1px;transform:scaleX(0.8)">0.26</div><div class="t" style="left:605.90px;top:99.64px;font-size:12.6px;color:#f4f4f4;-webkit-text-stroke-width:.1px;transform:scaleX(0.8)">0.51</div><div class="t" style="left:644.40px;top:99.64px;font-size:12.6px;color:#f4f4f4;-webkit-text-stroke-width:.1px;transform:scaleX(0.8)">0.22</div><div class="t" style="left:708.30px;top:99.64px;font-size:12.6px;color:#f4f4f4;-webkit-text-stroke-width:.1px;transform:scaleX(0.8)">0.46</div><div class="t" style="left:777.20px;top:99.64px;font-size:12.6px;color:#f4f4f4;-webkit-text-stroke-width:.1px;transform:scaleX(0.8)">0.29</div><div class="t" style="left:811.50px;top:99.64px;font-size:12.6px;color:#f4f4f4;-webkit-text-stroke-width:.1px;transform:scaleX(0.8)">0.38</div><div class="t" style="left:875.40px;top:99.64px;font-size:12.6px;color:#f4f4f4;-webkit-text-stroke-width:.1px;transform:scaleX(0.8)">0.47</div><div class="t" style="left:944.30px;top:99.64px;font-size:12.6px;color:#f4f4f4;-webkit-text-stroke-width:.1px;transform:scaleX(0.8)">0.19</div><div class="t" style="left:976.50px;top:99.64px;font-size:12.6px;color:#f4f4f4;-webkit-text-stroke-width:.1px;transform:scaleX(0.8)">0.31</div><div class="t" style="left:1014.80px;top:99.64px;font-size:12.6px;color:#f4f4f4;-webkit-text-stroke-width:.1px;transform:scaleX(0.8)">0.54</div><div class="t" style="left:1047.40px;top:99.64px;font-size:12.6px;color:#f4f4f4;-webkit-text-stroke-width:.1px;transform:scaleX(0.8)">0.45</div><div class="t" style="left:1085.80px;top:99.64px;font-size:12.6px;color:#f4f4f4;-webkit-text-stroke-width:.1px;transform:scaleX(0.8)">0.37</div><div class="t" style="left:1130.30px;top:99.64px;font-size:12.6px;color:#f4f4f4;-webkit-text-stroke-width:.1px;transform:scaleX(0.8)">0.21</div><div class="t" style="left:1163.40px;top:99.64px;font-size:12.6px;color:#f4f4f4;-webkit-text-stroke-width:.1px;transform:scaleX(0.8)">0.64</div><div class="t" style="left:1212.40px;top:99.64px;font-size:12.6px;color:#f4f4f4;-webkit-text-stroke-width:.1px;transform:scaleX(0.8)">0.30</div><div class="t" style="left:1272.30px;top:99.64px;font-size:12.6px;color:#f4f4f4;-webkit-text-stroke-width:.1px;transform:scaleX(0.8)">0.15</div><div class="t" style="left:12.00px;top:122.41px;font-size:12.6px;color:#f4f4f4;-webkit-text-stroke-width:.1px;transform:scaleX(0.765)">Target y:CIE31</div><div class="t" style="left:86.50px;top:122.41px;font-size:12.6px;color:#f4f4f4;-webkit-text-stroke-width:.1px;transform:scaleX(0.8)">0.33</div><div class="t" style="left:124.40px;top:122.41px;font-size:12.6px;color:#f4f4f4;-webkit-text-stroke-width:.1px;transform:scaleX(0.8)">0.33</div><div class="t" style="left:164.00px;top:122.41px;font-size:12.6px;color:#f4f4f4;-webkit-text-stroke-width:.1px;transform:scaleX(0.8)">0.33</div><div class="t" style="left:203.60px;top:122.41px;font-size:12.6px;color:#f4f4f4;-webkit-text-stroke-width:.1px;transform:scaleX(0.8)">0.33</div><div class="t" style="left:243.20px;top:122.41px;font-size:12.6px;color:#f4f4f4;-webkit-text-stroke-width:.1px;transform:scaleX(0.8)">0.33</div><div class="t" style="left:282.80px;top:122.41px;font-size:12.6px;color:#f4f4f4;-webkit-text-stroke-width:.1px;transform:scaleX(0.8)">0.33</div><div class="t" style="left:311.70px;top:122.41px;font-size:12.6px;color:#f4f4f4;-webkit-text-stroke-width:.1px;transform:scaleX(0.8)">0.36</div><div class="t" style="left:358.70px;top:122.41px;font-size:12.6px;color:#f4f4f4;-webkit-text-stroke-width:.1px;transform:scaleX(0.8)">0.36</div><div class="t" style="left:406.60px;top:122.41px;font-size:12.6px;color:#f4f4f4;-webkit-text-stroke-width:.1px;transform:scaleX(0.8)">0.27</div><div class="t" style="left:449.00px;top:122.41px;font-size:12.6px;color:#f4f4f4;-webkit-text-stroke-width:.1px;transform:scaleX(0.8)">0.43</div><div class="t" style="left:486.20px;top:122.41px;font-size:12.6px;color:#f4f4f4;-webkit-text-stroke-width:.1px;transform:scaleX(0.8)">0.25</div><div class="t" style="left:544.00px;top:122.41px;font-size:12.6px;color:#f4f4f4;-webkit-text-stroke-width:.1px;transform:scaleX(0.8)">0.36</div><div class="t" style="left:605.90px;top:122.41px;font-size:12.6px;color:#f4f4f4;-webkit-text-stroke-width:.1px;transform:scaleX(0.8)">0.41</div><div class="t" style="left:644.40px;top:122.41px;font-size:12.6px;color:#f4f4f4;-webkit-text-stroke-width:.1px;transform:scaleX(0.8)">0.19</div><div class="t" style="left:708.30px;top:122.41px;font-size:12.6px;color:#f4f4f4;-webkit-text-stroke-width:.1px;transform:scaleX(0.8)">0.31</div><div class="t" style="left:777.20px;top:122.41px;font-size:12.6px;color:#f4f4f4;-webkit-text-stroke-width:.1px;transform:scaleX(0.8)">0.22</div><div class="t" style="left:811.50px;top:122.41px;font-size:12.6px;color:#f4f4f4;-webkit-text-stroke-width:.1px;transform:scaleX(0.8)">0.49</div><div class="t" style="left:875.40px;top:122.41px;font-size:12.6px;color:#f4f4f4;-webkit-text-stroke-width:.1px;transform:scaleX(0.8)">0.44</div><div class="t" style="left:944.30px;top:122.41px;font-size:12.6px;color:#f4f4f4;-webkit-text-stroke-width:.1px;transform:scaleX(0.8)">0.14</div><div class="t" style="left:976.50px;top:122.41px;font-size:12.6px;color:#f4f4f4;-webkit-text-stroke-width:.1px;transform:scaleX(0.8)">0.49</div><div class="t" style="left:1014.80px;top:122.41px;font-size:12.6px;color:#f4f4f4;-webkit-text-stroke-width:.1px;transform:scaleX(0.8)">0.32</div><div class="t" style="left:1047.40px;top:122.41px;font-size:12.6px;color:#f4f4f4;-webkit-text-stroke-width:.1px;transform:scaleX(0.8)">0.47</div><div class="t" style="left:1085.80px;top:122.41px;font-size:12.6px;color:#f4f4f4;-webkit-text-stroke-width:.1px;transform:scaleX(0.8)">0.25</div><div class="t" style="left:1130.30px;top:122.41px;font-size:12.6px;color:#f4f4f4;-webkit-text-stroke-width:.1px;transform:scaleX(0.8)">0.27</div><div class="t" style="left:1163.40px;top:122.41px;font-size:12.6px;color:#f4f4f4;-webkit-text-stroke-width:.1px;transform:scaleX(0.8)">0.33</div><div class="t" style="left:1212.40px;top:122.41px;font-size:12.6px;color:#f4f4f4;-webkit-text-stroke-width:.1px;transform:scaleX(0.8)">0.60</div><div class="t" style="left:1272.30px;top:122.41px;font-size:12.6px;color:#f4f4f4;-webkit-text-stroke-width:.1px;transform:scaleX(0.8)">0.06</div><div class="t" style="left:12.00px;top:145.18px;font-size:12.6px;color:#f4f4f4;-webkit-text-stroke-width:.1px;transform:scaleX(0.785)">Target Y</div><div class="t" style="left:86.50px;top:145.18px;font-size:12.6px;color:#f4f4f4;-webkit-text-stroke-width:.1px;transform:scaleX(0.8)">428.71</div><div class="t" style="left:124.40px;top:145.18px;font-size:12.6px;color:#f4f4f4;-webkit-text-stroke-width:.1px;transform:scaleX(0.8)">339.24</div><div class="t" style="left:164.00px;top:145.18px;font-size:12.6px;color:#f4f4f4;-webkit-text-stroke-width:.1px;transform:scaleX(0.8)">273.34</div><div class="t" style="left:203.60px;top:145.18px;font-size:12.6px;color:#f4f4f4;-webkit-text-stroke-width:.1px;transform:scaleX(0.8)">210.51</div><div class="t" style="left:243.20px;top:145.18px;font-size:12.6px;color:#f4f4f4;-webkit-text-stroke-width:.1px;transform:scaleX(0.8)">146.58</div><div class="t" style="left:282.80px;top:145.18px;font-size:12.6px;color:#f4f4f4;-webkit-text-stroke-width:.1px;transform:scaleX(0.8)">0.00</div><div class="t" style="left:311.70px;top:145.18px;font-size:12.6px;color:#f4f4f4;-webkit-text-stroke-width:.1px;transform:scaleX(0.8)">43.19</div><div class="t" style="left:358.70px;top:145.18px;font-size:12.6px;color:#f4f4f4;-webkit-text-stroke-width:.1px;transform:scaleX(0.8)">149.60</div><div class="t" style="left:406.60px;top:145.18px;font-size:12.6px;color:#f4f4f4;-webkit-text-stroke-width:.1px;transform:scaleX(0.8)">80.16</div><div class="t" style="left:449.00px;top:145.18px;font-size:12.6px;color:#f4f4f4;-webkit-text-stroke-width:.1px;transform:scaleX(0.8)">55.87</div><div class="t" style="left:486.20px;top:145.18px;font-size:12.6px;color:#f4f4f4;-webkit-text-stroke-width:.1px;transform:scaleX(0.8)">99.97</div><div class="t" style="left:544.00px;top:145.18px;font-size:12.6px;color:#222;-webkit-text-stroke-width:.1px;transform:scaleX(0.8)">179.51</div><div class="t" style="left:605.90px;top:145.18px;font-size:12.6px;color:#222;-webkit-text-stroke-width:.1px;transform:scaleX(0.8)">121.53</div><div class="t" style="left:644.40px;top:145.18px;font-size:12.6px;color:#222;-webkit-text-stroke-width:.1px;transform:scaleX(0.8)">50.39</div><div class="t" style="left:708.30px;top:145.18px;font-size:12.6px;color:#222;-webkit-text-stroke-width:.1px;transform:scaleX(0.8)">80.06</div><div class="t" style="left:777.20px;top:145.18px;font-size:12.6px;color:#222;-webkit-text-stroke-width:.1px;transform:scaleX(0.8)">28.61</div><div class="t" style="left:811.50px;top:145.18px;font-size:12.6px;color:#222;-webkit-text-stroke-width:.1px;transform:scaleX(0.8)">183.30</div><div class="t" style="left:875.40px;top:145.18px;font-size:12.6px;color:#222;-webkit-text-stroke-width:.1px;transform:scaleX(0.8)">182.26</div><div class="t" style="left:944.30px;top:145.18px;font-size:12.6px;color:#222;-webkit-text-stroke-width:.1px;transform:scaleX(0.8)">26.76</div><div class="t" style="left:976.50px;top:145.18px;font-size:12.6px;color:#222;-webkit-text-stroke-width:.1px;transform:scaleX(0.8)">98.49</div><div class="t" style="left:1014.80px;top:145.18px;font-size:12.6px;color:#f4f4f4;-webkit-text-stroke-width:.1px;transform:scaleX(0.8)">50.00</div><div class="t" style="left:1047.40px;top:145.18px;font-size:12.6px;color:#f4f4f4;-webkit-text-stroke-width:.1px;transform:scaleX(0.8)">252.78</div><div class="t" style="left:1085.80px;top:145.18px;font-size:12.6px;color:#f4f4f4;-webkit-text-stroke-width:.1px;transform:scaleX(0.8)">80.71</div><div class="t" style="left:1130.30px;top:145.18px;font-size:12.6px;color:#f4f4f4;-webkit-text-stroke-width:.1px;transform:scaleX(0.8)">83.25</div><div class="t" style="left:1163.40px;top:145.18px;font-size:12.6px;color:#f4f4f4;-webkit-text-stroke-width:.1px;transform:scaleX(0.8)">91.17</div><div class="t" style="left:1212.40px;top:145.18px;font-size:12.6px;color:#f4f4f4;-webkit-text-stroke-width:.1px;transform:scaleX(0.8)">306.59</div><div class="t" style="left:1272.30px;top:145.18px;font-size:12.6px;color:#f4f4f4;-webkit-text-stroke-width:.1px;transform:scaleX(0.8)">30.95</div><div class="t" style="left:12.00px;top:167.95px;font-size:12.6px;color:#f4f4f4;-webkit-text-stroke-width:.1px;transform:scaleX(0.785)">ΔE 2000</div><div class="t" style="left:86.50px;top:167.95px;font-size:12.6px;color:#f4f4f4;-webkit-text-stroke-width:.1px;transform:scaleX(0.8)">3.95</div><div class="t" style="left:124.40px;top:167.95px;font-size:12.6px;color:#f4f4f4;-webkit-text-stroke-width:.1px;transform:scaleX(0.8)">3.04</div><div class="t" style="left:164.00px;top:167.95px;font-size:12.6px;color:#f4f4f4;-webkit-text-stroke-width:.1px;transform:scaleX(0.8)">2.86</div><div class="t" style="left:203.60px;top:167.95px;font-size:12.6px;color:#f4f4f4;-webkit-text-stroke-width:.1px;transform:scaleX(0.8)">2.90</div><div class="t" style="left:243.20px;top:167.95px;font-size:12.6px;color:#f4f4f4;-webkit-text-stroke-width:.1px;transform:scaleX(0.8)">3.00</div><div class="t" style="left:282.80px;top:167.95px;font-size:12.6px;color:#f4f4f4;-webkit-text-stroke-width:.1px;transform:scaleX(0.8)">1.36</div><div class="t" style="left:311.70px;top:167.95px;font-size:12.6px;color:#f4f4f4;-webkit-text-stroke-width:.1px;transform:scaleX(0.8)">2.46</div><div class="t" style="left:358.70px;top:167.95px;font-size:12.6px;color:#f4f4f4;-webkit-text-stroke-width:.1px;transform:scaleX(0.8)">3.13</div><div class="t" style="left:406.60px;top:167.95px;font-size:12.6px;color:#f4f4f4;-webkit-text-stroke-width:.1px;transform:scaleX(0.8)">6.10</div><div class="t" style="left:449.00px;top:167.95px;font-size:12.6px;color:#f4f4f4;-webkit-text-stroke-width:.1px;transform:scaleX(0.8)">2.67</div><div class="t" style="left:486.20px;top:167.95px;font-size:12.6px;color:#f4f4f4;-webkit-text-stroke-width:.1px;transform:scaleX(0.8)">3.14</div><div class="t" style="left:544.00px;top:167.95px;font-size:12.6px;color:#f4f4f4;-webkit-text-stroke-width:.1px;transform:scaleX(0.8)">3.57</div><div class="t" style="left:605.90px;top:167.95px;font-size:12.6px;color:#f4f4f4;-webkit-text-stroke-width:.1px;transform:scaleX(0.8)">9.19</div><div class="t" style="left:644.40px;top:167.95px;font-size:12.6px;color:#f4f4f4;-webkit-text-stroke-width:.1px;transform:scaleX(0.8)">4.87</div><div class="t" style="left:708.30px;top:167.95px;font-size:12.6px;color:#f4f4f4;-webkit-text-stroke-width:.1px;transform:scaleX(0.8)">1.85</div><div class="t" style="left:777.20px;top:167.95px;font-size:12.6px;color:#f4f4f4;-webkit-text-stroke-width:.1px;transform:scaleX(0.8)">3.39</div><div class="t" style="left:811.50px;top:167.95px;font-size:12.6px;color:#f4f4f4;-webkit-text-stroke-width:.1px;transform:scaleX(0.8)">3.92</div><div class="t" style="left:875.40px;top:167.95px;font-size:12.6px;color:#f4f4f4;-webkit-text-stroke-width:.1px;transform:scaleX(0.8)">8.16</div><div class="t" style="left:944.30px;top:167.95px;font-size:12.6px;color:#f4f4f4;-webkit-text-stroke-width:.1px;transform:scaleX(0.8)">5.12</div><div class="t" style="left:976.50px;top:167.95px;font-size:12.6px;color:#f4f4f4;-webkit-text-stroke-width:.1px;transform:scaleX(0.8)">3.73</div><div class="t" style="left:1014.80px;top:167.95px;font-size:12.6px;color:#f4f4f4;-webkit-text-stroke-width:.1px;transform:scaleX(0.8)">1.78</div><div class="t" style="left:1047.40px;top:167.95px;font-size:12.6px;color:#f4f4f4;-webkit-text-stroke-width:.1px;transform:scaleX(0.8)">5.92</div><div class="t" style="left:1085.80px;top:167.95px;font-size:12.6px;color:#f4f4f4;-webkit-text-stroke-width:.1px;transform:scaleX(0.8)">2.00</div><div class="t" style="left:1130.30px;top:167.95px;font-size:12.6px;color:#f4f4f4;-webkit-text-stroke-width:.1px;transform:scaleX(0.8)">6.32</div><div class="t" style="left:1163.40px;top:167.95px;font-size:12.6px;color:#f4f4f4;-webkit-text-stroke-width:.1px;transform:scaleX(0.8)">7.84</div><div class="t" style="left:1212.40px;top:167.95px;font-size:12.6px;color:#f4f4f4;-webkit-text-stroke-width:.1px;transform:scaleX(0.8)">7.51</div><div class="t" style="left:1272.30px;top:167.95px;font-size:12.6px;color:#f4f4f4;-webkit-text-stroke-width:.1px;transform:scaleX(0.8)">5.56</div><div class="b" style="left:0.00px;top:184.40px;width:1290.00px;height:14.00px;background:#333;"></div><div class="b" style="left:11.00px;top:184.60px;width:1279.00px;height:13.40px;background:#606060;"></div><div class="b" style="left:23.00px;top:185.00px;width:1073.00px;height:12.60px;background:#3d3d3d;border-radius:6px;"></div><div class="b" style="left:11.50px;top:185.00px;width:11.00px;height:12.60px;background:#8a8a8a;border:1px solid #4a4a4a;border-radius:2px;"></div><div class="b" style="left:1279.00px;top:185.00px;width:11.00px;height:12.60px;background:#8a8a8a;border:1px solid #4a4a4a;border-radius:2px;"></div><svg style="left:11.5px;top:185px" width="12" height="13" viewBox="0 0 12 13"><path d="M8 2.5v7.5l-4.8-3.75z" fill="#333"/></svg><svg style="left:1279px;top:185px" width="12" height="13" viewBox="0 0 12 13"><path d="M4 2.5v7.5l4.8-3.75z" fill="#333"/></svg></div>
<div class="b" style="left:0px;top:805px;width:1600px;height:65px;background:#2c2c2c;"></div>
<div class="b" style="left:0px;top:805px;width:1277px;height:3px;background:#333;"></div>
<div class="b" style="left:0;top:806px;width:1276px;height:52px;overflow:hidden"><div class="b" style="left:1.6px;top:2.2px;width:49.2px;height:48.600px;background:linear-gradient(#929292,#787878 45%,#5a5a5a);border-radius:5px 5px 2px 2px;border:1px solid #858585;border-top-color:#a0a0a0;border-bottom-color:#555;box-shadow:0 0 0 1px #3a3a3a"></div><div class="b" style="left:6.4px;top:7.5px;width:39.6px;height:23.8px;background:#ffffff;border-radius:3px;box-shadow:inset 0 1px 1px rgba(255,255,255,.25),0 0 0 1px rgba(0,0,0,.25)"></div><div class="t" style="left:10.80px;top:36.27px;font-size:12.2px;color:#262626;transform:scaleX(0.962);text-shadow:0 0 .4px #262626">White</div><div class="b" style="left:53.6px;top:2.2px;width:49.2px;height:48.600px;background:linear-gradient(#929292,#787878 45%,#5a5a5a);border-radius:5px 5px 2px 2px;border:1px solid #858585;border-top-color:#a0a0a0;border-bottom-color:#555;box-shadow:0 0 0 1px #3a3a3a"></div><div class="b" style="left:58.4px;top:7.5px;width:39.6px;height:23.8px;background:#e6e6e6;border-radius:3px;box-shadow:inset 0 1px 1px rgba(255,255,255,.25),0 0 0 1px rgba(0,0,0,.25)"></div><div class="t" style="left:58.80px;top:36.27px;font-size:12.2px;color:#262626;transform:scaleX(0.876);text-shadow:0 0 .4px #262626">Gray 80</div><div class="b" style="left:105.6px;top:2.2px;width:49.2px;height:48.600px;background:linear-gradient(#929292,#787878 45%,#5a5a5a);border-radius:5px 5px 2px 2px;border:1px solid #858585;border-top-color:#a0a0a0;border-bottom-color:#555;box-shadow:0 0 0 1px #3a3a3a"></div><div class="b" style="left:110.4px;top:7.5px;width:39.6px;height:23.8px;background:#d1d1d1;border-radius:3px;box-shadow:inset 0 1px 1px rgba(255,255,255,.25),0 0 0 1px rgba(0,0,0,.25)"></div><div class="t" style="left:110.80px;top:36.27px;font-size:12.2px;color:#262626;transform:scaleX(0.876);text-shadow:0 0 .4px #262626">Gray 65</div><div class="b" style="left:157.6px;top:2.2px;width:49.2px;height:48.600px;background:linear-gradient(#929292,#787878 45%,#5a5a5a);border-radius:5px 5px 2px 2px;border:1px solid #858585;border-top-color:#a0a0a0;border-bottom-color:#555;box-shadow:0 0 0 1px #3a3a3a"></div><div class="b" style="left:162.4px;top:7.5px;width:39.6px;height:23.8px;background:#bbbbbb;border-radius:3px;box-shadow:inset 0 1px 1px rgba(255,255,255,.25),0 0 0 1px rgba(0,0,0,.25)"></div><div class="t" style="left:162.80px;top:36.27px;font-size:12.2px;color:#262626;transform:scaleX(0.876);text-shadow:0 0 .4px #262626">Gray 50</div><div class="b" style="left:209.6px;top:2.2px;width:49.2px;height:48.600px;background:linear-gradient(#929292,#787878 45%,#5a5a5a);border-radius:5px 5px 2px 2px;border:1px solid #858585;border-top-color:#a0a0a0;border-bottom-color:#555;box-shadow:0 0 0 1px #3a3a3a"></div><div class="b" style="left:214.4px;top:7.5px;width:39.6px;height:23.8px;background:#9e9e9e;border-radius:3px;box-shadow:inset 0 1px 1px rgba(255,255,255,.25),0 0 0 1px rgba(0,0,0,.25)"></div><div class="t" style="left:214.80px;top:36.27px;font-size:12.2px;color:#262626;transform:scaleX(0.876);text-shadow:0 0 .4px #262626">Gray 35</div><div class="b" style="left:261.6px;top:2.2px;width:49.2px;height:48.600px;background:linear-gradient(#929292,#787878 45%,#5a5a5a);border-radius:5px 5px 2px 2px;border:1px solid #858585;border-top-color:#a0a0a0;border-bottom-color:#555;box-shadow:0 0 0 1px #3a3a3a"></div><div class="b" style="left:266.4px;top:7.5px;width:39.6px;height:23.8px;background:#000000;border-radius:3px;box-shadow:inset 0 1px 1px rgba(255,255,255,.25),0 0 0 1px rgba(0,0,0,.25)"></div><div class="t" style="left:272.80px;top:36.27px;font-size:12.2px;color:#262626;transform:scaleX(0.871);text-shadow:0 0 .4px #262626">Black</div><div class="b" style="left:313.6px;top:2.2px;width:49.2px;height:48.600px;background:linear-gradient(#929292,#787878 45%,#5a5a5a);border-radius:5px 5px 2px 2px;border:1px solid #858585;border-top-color:#a0a0a0;border-bottom-color:#555;box-shadow:0 0 0 1px #3a3a3a"></div><div class="b" style="left:318.4px;top:7.5px;width:39.6px;height:23.8px;background:#735244;border-radius:3px;box-shadow:inset 0 1px 1px rgba(255,255,255,.25),0 0 0 1px rgba(0,0,0,.25)"></div><div class="t" style="left:314.50px;top:36.27px;font-size:12.2px;color:#262626;transform:scaleX(0.881);text-shadow:0 0 .4px #262626">Dark Skin</div><div class="b" style="left:365.6px;top:2.2px;width:49.2px;height:48.600px;background:linear-gradient(#929292,#787878 45%,#5a5a5a);border-radius:5px 5px 2px 2px;border:1px solid #858585;border-top-color:#a0a0a0;border-bottom-color:#555;box-shadow:0 0 0 1px #3a3a3a"></div><div class="b" style="left:370.4px;top:7.5px;width:39.6px;height:23.8px;background:#c49681;border-radius:3px;box-shadow:inset 0 1px 1px rgba(255,255,255,.25),0 0 0 1px rgba(0,0,0,.25)"></div><div class="t" style="left:366.10px;top:36.27px;font-size:12.2px;color:#262626;transform:scaleX(0.885);text-shadow:0 0 .4px #262626">Light Skin</div><div class="b" style="left:417.6px;top:2.2px;width:49.2px;height:48.600px;background:linear-gradient(#929292,#787878 45%,#5a5a5a);border-radius:5px 5px 2px 2px;border:1px solid #858585;border-top-color:#a0a0a0;border-bottom-color:#555;box-shadow:0 0 0 1px #3a3a3a"></div><div class="b" style="left:422.4px;top:7.5px;width:39.6px;height:23.8px;background:#5d7b9d;border-radius:3px;box-shadow:inset 0 1px 1px rgba(255,255,255,.25),0 0 0 1px rgba(0,0,0,.25)"></div><div class="t" style="left:420.95px;top:36.27px;font-size:12.2px;color:#262626;transform:scaleX(0.866);text-shadow:0 0 .4px #262626">Blue Sky</div><div class="b" style="left:469.6px;top:2.2px;width:49.2px;height:48.600px;background:linear-gradient(#929292,#787878 45%,#5a5a5a);border-radius:5px 5px 2px 2px;border:1px solid #858585;border-top-color:#a0a0a0;border-bottom-color:#555;box-shadow:0 0 0 1px #3a3a3a"></div><div class="b" style="left:474.4px;top:7.5px;width:39.6px;height:23.8px;background:#5a6c40;border-radius:3px;box-shadow:inset 0 1px 1px rgba(255,255,255,.25),0 0 0 1px rgba(0,0,0,.25)"></div><div class="t" style="left:476.30px;top:36.27px;font-size:12.2px;color:#262626;transform:scaleX(0.875);text-shadow:0 0 .4px #262626">Foliage</div><div class="b" style="left:521.6px;top:2.2px;width:49.2px;height:48.600px;background:linear-gradient(#929292,#787878 45%,#5a5a5a);border-radius:5px 5px 2px 2px;border:1px solid #858585;border-top-color:#a0a0a0;border-bottom-color:#555;box-shadow:0 0 0 1px #3a3a3a"></div><div class="b" style="left:526.4px;top:7.5px;width:39.6px;height:10.8px;background:#8380b0;border-radius:3px;box-shadow:inset 0 1px 1px rgba(255,255,255,.25),0 0 0 1px rgba(0,0,0,.25)"></div><div class="t" style="left:528.90px;top:24.07px;font-size:12.2px;color:#262626;transform:scaleX(0.872);text-shadow:0 0 .4px #262626">Blue</div><div class="t" style="left:528.90px;top:36.27px;font-size:12.2px;color:#262626;transform:scaleX(0.923);text-shadow:0 0 .4px #262626">Flower</div><div class="b" style="left:573.6px;top:2.2px;width:49.2px;height:48.600px;background:linear-gradient(#929292,#787878 45%,#5a5a5a);border-radius:5px 5px 2px 2px;border:1px solid #858585;border-top-color:#a0a0a0;border-bottom-color:#555;box-shadow:0 0 0 1px #3a3a3a"></div><div class="b" style="left:578.4px;top:7.5px;width:39.6px;height:10.8px;background:#63bda8;border-radius:3px;box-shadow:inset 0 1px 1px rgba(255,255,255,.25),0 0 0 1px rgba(0,0,0,.25)"></div><div class="t" style="left:582.80px;top:24.07px;font-size:12.2px;color:#262626;transform:scaleX(0.903);text-shadow:0 0 .4px #262626">Bluish</div><div class="t" style="left:582.80px;top:36.27px;font-size:12.2px;color:#262626;transform:scaleX(0.855);text-shadow:0 0 .4px #262626">Green</div><div class="b" style="left:625.6px;top:2.2px;width:49.2px;height:48.600px;background:linear-gradient(#929292,#787878 45%,#5a5a5a);border-radius:5px 5px 2px 2px;border:1px solid #858585;border-top-color:#a0a0a0;border-bottom-color:#555;box-shadow:0 0 0 1px #3a3a3a"></div><div class="b" style="left:630.4px;top:7.5px;width:39.6px;height:23.8px;background:#dd7b2f;border-radius:3px;box-shadow:inset 0 1px 1px rgba(255,255,255,.25),0 0 0 1px rgba(0,0,0,.25)"></div><div class="t" style="left:632.05px;top:36.27px;font-size:12.2px;color:#262626;transform:scaleX(0.872);text-shadow:0 0 .4px #262626">Orange</div><div class="b" style="left:677.6px;top:2.2px;width:49.2px;height:48.600px;background:linear-gradient(#929292,#787878 45%,#5a5a5a);border-radius:5px 5px 2px 2px;border:1px solid #858585;border-top-color:#a0a0a0;border-bottom-color:#555;box-shadow:0 0 0 1px #3a3a3a"></div><div class="b" style="left:682.4px;top:7.5px;width:39.6px;height:10.8px;background:#485ca8;border-radius:3px;box-shadow:inset 0 1px 1px rgba(255,255,255,.25),0 0 0 1px rgba(0,0,0,.25)"></div><div class="t" style="left:682.20px;top:24.07px;font-size:12.2px;color:#262626;transform:scaleX(0.889);text-shadow:0 0 .4px #262626">Purplish</div><div class="t" style="left:682.20px;top:36.27px;font-size:12.2px;color:#262626;transform:scaleX(0.872);text-shadow:0 0 .4px #262626">Blue</div><div class="b" style="left:729.6px;top:2.2px;width:49.2px;height:48.600px;background:linear-gradient(#929292,#787878 45%,#5a5a5a);border-radius:5px 5px 2px 2px;border:1px solid #858585;border-top-color:#a0a0a0;border-bottom-color:#555;box-shadow:0 0 0 1px #3a3a3a"></div><div class="b" style="left:734.4px;top:7.5px;width:39.6px;height:10.8px;background:#c35462;border-radius:3px;box-shadow:inset 0 1px 1px rgba(255,255,255,.25),0 0 0 1px rgba(0,0,0,.25)"></div><div class="t" style="left:730.60px;top:24.07px;font-size:12.2px;color:#262626;transform:scaleX(0.937);text-shadow:0 0 .4px #262626">Moderate</div><div class="t" style="left:730.60px;top:36.27px;font-size:12.2px;color:#262626;transform:scaleX(0.809);text-shadow:0 0 .4px #262626">Red</div><div class="b" style="left:781.6px;top:2.2px;width:49.2px;height:48.600px;background:linear-gradient(#929292,#787878 45%,#5a5a5a);border-radius:5px 5px 2px 2px;border:1px solid #858585;border-top-color:#a0a0a0;border-bottom-color:#555;box-shadow:0 0 0 1px #3a3a3a"></div><div class="b" style="left:786.4px;top:7.5px;width:39.6px;height:23.8px;background:#5c3c6b;border-radius:3px;box-shadow:inset 0 1px 1px rgba(255,255,255,.25),0 0 0 1px rgba(0,0,0,.25)"></div><div class="t" style="left:789.70px;top:36.27px;font-size:12.2px;color:#262626;transform:scaleX(0.913);text-shadow:0 0 .4px #262626">Purple</div><div class="b" style="left:833.6px;top:2.2px;width:49.2px;height:48.600px;background:linear-gradient(#929292,#787878 45%,#5a5a5a);border-radius:5px 5px 2px 2px;border:1px solid #858585;border-top-color:#a0a0a0;border-bottom-color:#555;box-shadow:0 0 0 1px #3a3a3a"></div><div class="b" style="left:838.4px;top:7.5px;width:39.6px;height:10.8px;background:#9fbd3f;border-radius:3px;box-shadow:inset 0 1px 1px rgba(255,255,255,.25),0 0 0 1px rgba(0,0,0,.25)"></div><div class="t" style="left:841.90px;top:24.07px;font-size:12.2px;color:#262626;transform:scaleX(0.913);text-shadow:0 0 .4px #262626">Yellow</div><div class="t" style="left:841.90px;top:36.27px;font-size:12.2px;color:#262626;transform:scaleX(0.855);text-shadow:0 0 .4px #262626">Green</div><div class="b" style="left:885.6px;top:2.2px;width:49.2px;height:48.600px;background:linear-gradient(#929292,#787878 45%,#5a5a5a);border-radius:5px 5px 2px 2px;border:1px solid #858585;border-top-color:#a0a0a0;border-bottom-color:#555;box-shadow:0 0 0 1px #3a3a3a"></div><div class="b" style="left:890.4px;top:7.5px;width:39.6px;height:10.8px;background:#e5a12c;border-radius:3px;box-shadow:inset 0 1px 1px rgba(255,255,255,.25),0 0 0 1px rgba(0,0,0,.25)"></div><div class="t" style="left:892.05px;top:24.07px;font-size:12.2px;color:#262626;transform:scaleX(0.872);text-shadow:0 0 .4px #262626">Orange</div><div class="t" style="left:892.05px;top:36.27px;font-size:12.2px;color:#262626;transform:scaleX(0.913);text-shadow:0 0 .4px #262626">Yellow</div><div class="b" style="left:937.6px;top:2.2px;width:49.2px;height:48.600px;background:linear-gradient(#929292,#787878 45%,#5a5a5a);border-radius:5px 5px 2px 2px;border:1px solid #858585;border-top-color:#a0a0a0;border-bottom-color:#555;box-shadow:0 0 0 1px #3a3a3a"></div><div class="b" style="left:942.4px;top:7.5px;width:39.6px;height:23.8px;background:#2f3c97;border-radius:3px;box-shadow:inset 0 1px 1px rgba(255,255,255,.25),0 0 0 1px rgba(0,0,0,.25)"></div><div class="t" style="left:951.15px;top:36.27px;font-size:12.2px;color:#262626;transform:scaleX(0.872);text-shadow:0 0 .4px #262626">Blue</div><div class="b" style="left:989.6px;top:2.2px;width:49.2px;height:48.600px;background:linear-gradient(#929292,#787878 45%,#5a5a5a);border-radius:5px 5px 2px 2px;border:1px solid #858585;border-top-color:#a0a0a0;border-bottom-color:#555;box-shadow:0 0 0 1px #3a3a3a"></div><div class="b" style="left:994.4px;top:7.5px;width:39.6px;height:23.8px;background:#469449;border-radius:3px;box-shadow:inset 0 1px 1px rgba(255,255,255,.25),0 0 0 1px rgba(0,0,0,.25)"></div><div class="t" style="left:999.30px;top:36.27px;font-size:12.2px;color:#262626;transform:scaleX(0.855);text-shadow:0 0 .4px #262626">Green</div><div class="b" style="left:1041.6px;top:2.2px;width:49.2px;height:48.600px;background:linear-gradient(#929292,#787878 45%,#5a5a5a);border-radius:5px 5px 2px 2px;border:1px solid #858585;border-top-color:#a0a0a0;border-bottom-color:#555;box-shadow:0 0 0 1px #3a3a3a"></div><div class="b" style="left:1046.4px;top:7.5px;width:39.6px;height:23.8px;background:#b0303b;border-radius:3px;box-shadow:inset 0 1px 1px rgba(255,255,255,.25),0 0 0 1px rgba(0,0,0,.25)"></div><div class="t" style="left:1056.75px;top:36.27px;font-size:12.2px;color:#262626;transform:scaleX(0.809);text-shadow:0 0 .4px #262626">Red</div><div class="b" style="left:1093.6px;top:2.2px;width:49.2px;height:48.600px;background:linear-gradient(#929292,#787878 45%,#5a5a5a);border-radius:5px 5px 2px 2px;border:1px solid #858585;border-top-color:#a0a0a0;border-bottom-color:#555;box-shadow:0 0 0 1px #3a3a3a"></div><div class="b" style="left:1098.4px;top:7.5px;width:39.6px;height:23.8px;background:#eec81f;border-radius:3px;box-shadow:inset 0 1px 1px rgba(255,255,255,.25),0 0 0 1px rgba(0,0,0,.25)"></div><div class="t" style="left:1101.90px;top:36.27px;font-size:12.2px;color:#262626;transform:scaleX(0.913);text-shadow:0 0 .4px #262626">Yellow</div><div class="b" style="left:1145.6px;top:2.2px;width:49.2px;height:48.600px;background:linear-gradient(#929292,#787878 45%,#5a5a5a);border-radius:5px 5px 2px 2px;border:1px solid #858585;border-top-color:#a0a0a0;border-bottom-color:#555;box-shadow:0 0 0 1px #3a3a3a"></div><div class="b" style="left:1150.4px;top:7.5px;width:39.6px;height:23.8px;background:#bc5596;border-radius:3px;box-shadow:inset 0 1px 1px rgba(255,255,255,.25),0 0 0 1px rgba(0,0,0,.25)"></div><div class="t" style="left:1147.95px;top:36.27px;font-size:12.2px;color:#262626;transform:scaleX(0.920);text-shadow:0 0 .4px #262626">Magenta</div><div class="b" style="left:1197.6px;top:2.2px;width:49.2px;height:48.600px;background:linear-gradient(#929292,#787878 45%,#5a5a5a);border-radius:5px 5px 2px 2px;border:1px solid #858585;border-top-color:#a0a0a0;border-bottom-color:#555;box-shadow:0 0 0 1px #3a3a3a"></div><div class="b" style="left:1202.4px;top:7.5px;width:39.6px;height:23.8px;background:#0088a7;border-radius:3px;box-shadow:inset 0 1px 1px rgba(255,255,255,.25),0 0 0 1px rgba(0,0,0,.25)"></div><div class="t" style="left:1210.45px;top:36.27px;font-size:12.2px;color:#262626;transform:scaleX(0.797);text-shadow:0 0 .4px #262626">Cyan</div><div class="b" style="left:1249.6px;top:2.2px;width:49.2px;height:48.600px;background:linear-gradient(#929292,#787878 45%,#5a5a5a);border-radius:5px 5px 2px 2px;border:1px solid #858585;border-top-color:#a0a0a0;border-bottom-color:#555;box-shadow:0 0 0 1px #3a3a3a"></div><div class="b" style="left:1254.4px;top:7.5px;width:39.6px;height:23.8px;background:#ff0000;border-radius:3px;box-shadow:inset 0 1px 1px rgba(255,255,255,.25),0 0 0 1px rgba(0,0,0,.25)"></div><div class="t" style="left:1251.10px;top:36.27px;font-size:12.2px;color:#262626;transform:scaleX(0.820);text-shadow:0 0 .4px #262626">100%</div></div>
<div class="b" style="left:0px;top:858px;width:1277px;height:12px;background:#585858;"></div>
<div class="b" style="left:14px;top:858.5px;width:1020px;height:11.5px;background:#3a3a3a;border-radius:6px;"></div>
<div class="b" style="left:0.5px;top:858.5px;width:11.5px;height:11.5px;background:#8a8a8a;border:1px solid #4a4a4a;border-radius:2px;"></div>
<div class="b" style="left:1264.5px;top:858.5px;width:11.5px;height:11.5px;background:#8a8a8a;border:1px solid #4a4a4a;border-radius:2px;"></div>
<svg style="left:0;top:858px" width="1277" height="12" viewBox="0 0 1277 12"><path d="M8.500 2.500v7l-4.500-3.500z" fill="#333"/><path d="M1268 2.500v7l4.500-3.500z" fill="#333"/></svg>
<div class="b" style="left:1277px;top:807.5px;width:48px;height:18.5px;background:linear-gradient(#a6a6a6,#8a8a8a 50%,#6a6a6a);border-radius:5px 5px 0 0;border:1px solid #8e8e8e;border-top-color:#b8b8b8;border-right-color:#505050;border-bottom:1px solid #4a4a4a;"></div>
<div class="b" style="left:1277px;top:826.5px;width:48px;height:43.5px;background:linear-gradient(#a6a6a6,#8a8a8a 50%,#6a6a6a);border:1px solid #8e8e8e;border-top-color:#b8b8b8;border-right-color:#505050;border-bottom:none;"></div>
<svg style="left:1277px;top:807px" width="48" height="63" viewBox="0 0 48 63"><defs><linearGradient id="cg" x1="0" y1="0" x2="0" y2="1"><stop offset="0" stop-color="#666"/><stop offset="1" stop-color="#9c9c9c"/></linearGradient><linearGradient id="cgd" x1="0" y1="0" x2="0" y2="1"><stop offset="0" stop-color="#262626"/><stop offset="1" stop-color="#343434"/></linearGradient></defs><ellipse cx="24" cy="9.300" rx="7.500" ry="7" fill="url(#cg)"/><path d="M19.500 12l4.500-5.200 4.500 5.200z" fill="#2a2a2a"/><rect x="9.500" y="26" width="29" height="29" rx="4" fill="#8e8e8e" stroke="#2c2c2c" stroke-width="2.200"/><rect x="10.500" y="27" width="27" height="13.500" rx="3" fill="#a2a2a2" opacity=".55"/><rect x="17" y="33.500" width="14" height="14" fill="#050505"/></svg>
<div class="b" style="left:1326.3px;top:807.5px;width:45.4px;height:30.5px;background:linear-gradient(#a6a6a6,#8a8a8a 50%,#6a6a6a);border-radius:5px 0 0 0;border:1px solid #8e8e8e;border-top-color:#b8b8b8;border-right-color:#505050;border-bottom:1px solid #444;"></div>
<div class="b" style="left:1371.6px;top:807.5px;width:45.4px;height:30.5px;background:linear-gradient(#a6a6a6,#8a8a8a 50%,#6a6a6a);border-radius:0;border:1px solid #8e8e8e;border-top-color:#b8b8b8;border-right-color:#505050;border-bottom:1px solid #444;"></div>
<div class="b" style="left:1417.0px;top:807.5px;width:45.4px;height:30.5px;background:linear-gradient(#a6a6a6,#8a8a8a 50%,#6a6a6a);border-radius:0;border:1px solid #8e8e8e;border-top-color:#b8b8b8;border-right-color:#505050;border-bottom:1px solid #444;"></div>
<div class="b" style="left:1462.3px;top:807.5px;width:45.4px;height:30.5px;background:linear-gradient(#a6a6a6,#8a8a8a 50%,#6a6a6a);border-radius:0;border:1px solid #8e8e8e;border-top-color:#b8b8b8;border-right-color:#505050;border-bottom:1px solid #444;"></div>
<div class="b" style="left:1507.6px;top:807.5px;width:45.4px;height:30.5px;background:linear-gradient(#3c3c3c,#2a2a2a);border-radius:0;border:1px solid #3a3a3a;border-left-color:#2a2a2a;border-bottom:1px solid #444;"></div>
<div class="b" style="left:1552.9px;top:807.5px;width:45.4px;height:30.5px;background:linear-gradient(#3c3c3c,#2a2a2a);border-radius:0 5px 0 0;border:1px solid #3a3a3a;border-left-color:#2a2a2a;border-bottom:1px solid #444;"></div>
<svg style="left:1326px;top:807px" width="274" height="32" viewBox="0 0 274 32"><ellipse cx="23.0" cy="15.500" rx="10.300" ry="10.300" fill="url(#cg)"/><g transform="translate(23.0 15.500)"><rect x="-4.300" y="-4.300" width="8.600" height="8.600" fill="#2b2b2b"/></g><ellipse cx="68.3" cy="15.500" rx="10.300" ry="10.300" fill="url(#cg)"/><g transform="translate(68.3 15.500)"><path d="M-3.600 -5.500v11l8.600-5.500z" fill="#2b2b2b"/></g><ellipse cx="113.7" cy="15.500" rx="10.300" ry="10.300" fill="url(#cg)"/><g transform="translate(113.7 15.500)"><path d="M-3.400 -4.800h-2.400v9.600h2.400M3.400 -4.800h2.400v9.600h-2.400" stroke="#2b2b2b" stroke-width="2" fill="none"/><path d="M-2.600 0h1.400M-0.700 0h1.400M1.200 0h1.400" stroke="#2b2b2b" stroke-width="1.800"/></g><ellipse cx="159.0" cy="15.500" rx="10.300" ry="10.300" fill="url(#cg)"/><g transform="translate(159.0 15.500)"><path d="M0 0c-1.700 -3.300 -6 -3.300 -6 0s4.300 3.300 6 0c1.700 -3.300 6 -3.300 6 0s-4.300 3.300 -6 0z" stroke="#2b2b2b" stroke-width="1.900" fill="none"/></g><ellipse cx="204.3" cy="15.500" rx="10.300" ry="10.300" fill="url(#cgd)"/><g transform="translate(204.3 15.500)"><path d="M-5 -1a5 5 0 0 1 8.600 -2.600M5 1a5 5 0 0 1 -8.600 2.600" stroke="#1a1a1a" stroke-width="2.400" fill="none"/><path d="M5.400 -6.200v4.200h-4.200zM-5.400 6.200v-4.200h4.200z" fill="#1a1a1a"/></g><ellipse cx="249.6" cy="15.500" rx="10.300" ry="10.300" fill="url(#cgd)"/><g transform="translate(249.6 15.500)"></g></svg>
<div class="b" style="left:1326.3px;top:839.5px;width:136px;height:29.5px;background:linear-gradient(#a6a6a6,#8a8a8a 50%,#6a6a6a);border-radius:0 0 0 5px;border:1px solid #8e8e8e;border-top-color:#b8b8b8;border-right-color:#505050;"></div>
<div class="b" style="left:1462.3px;top:839.5px;width:136px;height:29.5px;background:linear-gradient(#a6a6a6,#8a8a8a 50%,#6a6a6a);border-radius:0 0 5px 0;border:1px solid #8e8e8e;border-top-color:#b8b8b8;border-right-color:#505050;"></div>
<svg style="left:1326px;top:839px" width="274" height="31" viewBox="0 0 274 31"><circle cx="30.500" cy="15" r="10" fill="url(#cg)"/><circle cx="244" cy="15" r="10" fill="url(#cg)"/><g stroke="#2a2a2a" stroke-width="2" fill="none"><path d="M29.500 10.500l-4 4.500 4 4.500M35 10.500l-4 4.500 4 4.500"/><path d="M240 10.500l4 4.500-4 4.500M245.500 10.500l4 4.500-4 4.500"/></g></svg>
<div class="t" style="left:1383.80px;top:843.61px;font-size:22.2px;color:#2c2c2c;transform:scaleX(1.0131);-webkit-text-stroke:.7px #2c2c2c;">Back</div>
<div class="t" style="left:1490.80px;top:843.61px;font-size:22.2px;color:#2c2c2c;transform:scaleX(1.1173);-webkit-text-stroke:.7px #2c2c2c;">Next</div>
</body></html>
